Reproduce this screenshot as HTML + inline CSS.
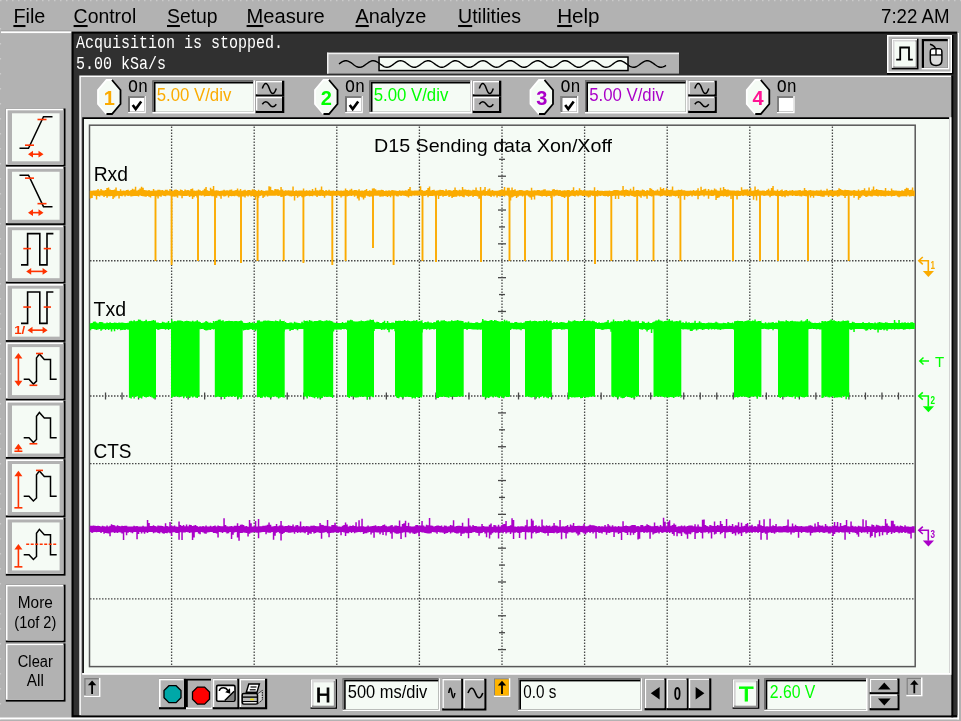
<!DOCTYPE html>
<html><head><meta charset="utf-8"><title>Oscilloscope</title>
<style>html,body{margin:0;padding:0;background:#b2b2b2;overflow:hidden}svg text{white-space:pre}svg{filter:blur(0.35px)}</style></head>
<body><svg width="961" height="721" viewBox="0 0 961 721" style="display:block"><rect x="0.00" y="0.00" width="961.00" height="721.00" fill="#b2b2b2" />
<line x1="0" y1="0.6" x2="961" y2="0.6" stroke="#cacaca" stroke-width="1.2" stroke-dasharray="1.5 4.5"/>
<rect x="1.00" y="30.10" width="70.50" height="1.30" fill="#a2a2a2" />
<rect x="1.00" y="31.40" width="70.50" height="1.70" fill="#fff" />
<line x1="0.5" y1="28" x2="0.5" y2="721" stroke="#cacaca" stroke-width="1.2" stroke-dasharray="1.5 13.5"/>
<text x="13.40" y="23.00" font-family="'Liberation Sans',sans-serif" font-size="20.5" fill="#000" text-anchor="start" font-weight="normal" textLength="31.9" lengthAdjust="spacingAndGlyphs" ><tspan text-decoration="underline">F</tspan>ile</text>
<text x="73.60" y="23.00" font-family="'Liberation Sans',sans-serif" font-size="20.5" fill="#000" text-anchor="start" font-weight="normal" textLength="62.6" lengthAdjust="spacingAndGlyphs" ><tspan text-decoration="underline">C</tspan>ontrol</text>
<text x="167.00" y="23.00" font-family="'Liberation Sans',sans-serif" font-size="20.5" fill="#000" text-anchor="start" font-weight="normal" textLength="50.6" lengthAdjust="spacingAndGlyphs" ><tspan text-decoration="underline">S</tspan>etup</text>
<text x="246.60" y="23.00" font-family="'Liberation Sans',sans-serif" font-size="20.5" fill="#000" text-anchor="start" font-weight="normal" textLength="78.2" lengthAdjust="spacingAndGlyphs" ><tspan text-decoration="underline">M</tspan>easure</text>
<text x="355.50" y="23.00" font-family="'Liberation Sans',sans-serif" font-size="20.5" fill="#000" text-anchor="start" font-weight="normal" textLength="70.8" lengthAdjust="spacingAndGlyphs" ><tspan text-decoration="underline">A</tspan>nalyze</text>
<text x="458.10" y="23.00" font-family="'Liberation Sans',sans-serif" font-size="20.5" fill="#000" text-anchor="start" font-weight="normal" textLength="62.9" lengthAdjust="spacingAndGlyphs" ><tspan text-decoration="underline">U</tspan>tilities</text>
<text x="557.20" y="23.00" font-family="'Liberation Sans',sans-serif" font-size="20.5" fill="#000" text-anchor="start" font-weight="normal" textLength="42.4" lengthAdjust="spacingAndGlyphs" ><tspan text-decoration="underline">H</tspan>elp</text>
<text x="881.00" y="23.00" font-family="'Liberation Sans',sans-serif" font-size="20.5" fill="#000" text-anchor="start" font-weight="normal" textLength="68.5" lengthAdjust="spacingAndGlyphs" >7:22 AM</text>
<rect x="0.00" y="717.50" width="959.00" height="1.90" fill="#fff" />
<rect x="957.30" y="33.00" width="1.70" height="686.40" fill="#fff" />
<rect x="71.50" y="31.60" width="885.80" height="685.70" fill="#000" />
<rect x="73.60" y="33.60" width="883.70" height="681.60" fill="#303030" />
<text x="76.00" y="48.00" font-family="'Liberation Mono',monospace" font-size="15" fill="#fff" text-anchor="start" font-weight="normal" textLength="207.0" lengthAdjust="spacingAndGlyphs" transform="translate(0,48) scale(1,1.22) translate(0,-48)">Acquisition is stopped.</text>
<text x="76.00" y="68.80" font-family="'Liberation Mono',monospace" font-size="15" fill="#fff" text-anchor="start" font-weight="normal" textLength="90.0" lengthAdjust="spacingAndGlyphs" transform="translate(0,68.8) scale(1,1.22) translate(0,-68.8)">5.00 kSa/s</text>
<rect x="327.00" y="52.70" width="352.00" height="20.90" fill="#b2b2b2" />
<rect x="327.00" y="52.70" width="352.00" height="1.50" fill="#f0f0f0" />
<rect x="327.00" y="52.70" width="1.50" height="20.90" fill="#f0f0f0" />
<rect x="378.30" y="56.30" width="250.45" height="15.00" fill="#000" />
<rect x="379.80" y="57.80" width="247.45" height="12.00" fill="#f5fbf5" />
<polyline points="339.0,64.0 340.5,62.9 342.0,61.9 343.5,61.2 345.0,60.8 346.5,60.7 348.0,61.1 349.5,61.8 351.0,62.7 352.5,63.8 354.0,65.0 355.5,66.0 357.0,66.8 358.5,67.2 360.0,67.3 361.5,67.0 363.0,66.3 364.5,65.4 366.0,64.3 367.5,63.2 369.0,62.1 370.5,61.3 372.0,60.8 373.5,60.7 375.0,61.0 376.5,61.6 378.0,62.5 379.5,63.5 381.0,64.7 382.5,65.7 384.0,66.6 385.5,67.1 387.0,67.3 388.5,67.1 390.0,66.5 391.5,65.7 393.0,64.6 394.5,63.5 396.0,62.4 397.5,61.5 399.0,60.9 400.5,60.7 402.0,60.9 403.5,61.4 405.0,62.2 406.5,63.2 408.0,64.4 409.5,65.5 411.0,66.4 412.5,67.0 414.0,67.3 415.5,67.2 417.0,66.7 418.5,65.9 420.0,64.9 421.5,63.8 423.0,62.7 424.5,61.7 426.0,61.1 427.5,60.7 429.0,60.8 430.5,61.2 432.0,62.0 433.5,63.0 435.0,64.1 436.5,65.2 438.0,66.2 439.5,66.9 441.0,67.3 442.5,67.3 444.0,66.9 445.5,66.2 447.0,65.2 448.5,64.1 450.0,63.0 451.5,62.0 453.0,61.2 454.5,60.8 456.0,60.7 457.5,61.1 459.0,61.7 460.5,62.7 462.0,63.8 463.5,64.9 465.0,65.9 466.5,66.7 468.0,67.2 469.5,67.3 471.0,67.0 472.5,66.4 474.0,65.5 475.5,64.4 477.0,63.2 478.5,62.2 480.0,61.4 481.5,60.9 483.0,60.7 484.5,60.9 486.0,61.5 487.5,62.4 489.0,63.5 490.5,64.6 492.0,65.7 493.5,66.5 495.0,67.1 496.5,67.3 498.0,67.1 499.5,66.6 501.0,65.7 502.5,64.7 504.0,63.5 505.5,62.5 507.0,61.6 508.5,61.0 510.0,60.7 511.5,60.8 513.0,61.3 514.5,62.1 516.0,63.2 517.5,64.3 519.0,65.4 520.5,66.3 522.0,67.0 523.5,67.3 525.0,67.2 526.5,66.8 528.0,66.0 529.5,65.0 531.0,63.8 532.5,62.7 534.0,61.8 535.5,61.1 537.0,60.7 538.5,60.8 540.0,61.2 541.5,61.9 543.0,62.9 544.5,64.0 546.0,65.1 547.5,66.1 549.0,66.8 550.5,67.2 552.0,67.3 553.5,66.9 555.0,66.2 556.5,65.3 558.0,64.2 559.5,63.0 561.0,62.0 562.5,61.2 564.0,60.8 565.5,60.7 567.0,61.0 568.5,61.7 570.0,62.6 571.5,63.7 573.0,64.8 574.5,65.9 576.0,66.7 577.5,67.2 579.0,67.3 580.5,67.0 582.0,66.4 583.5,65.5 585.0,64.5 586.5,63.3 588.0,62.3 589.5,61.4 591.0,60.9 592.5,60.7 594.0,60.9 595.5,61.5 597.0,62.3 598.5,63.4 600.0,64.5 601.5,65.6 603.0,66.5 604.5,67.1 606.0,67.3 607.5,67.1 609.0,66.6 610.5,65.8 612.0,64.8 613.5,63.6 615.0,62.5 616.5,61.6 618.0,61.0 619.5,60.7 621.0,60.8 622.5,61.3 624.0,62.1 625.5,63.1 627.0,64.2 628.5,65.3 630.0,66.3 631.5,66.9 633.0,67.3 634.5,67.2 636.0,66.8 637.5,66.0 639.0,65.0 640.5,63.9 642.0,62.8 643.5,61.8 645.0,61.1 646.5,60.7 648.0,60.7 649.5,61.1 651.0,61.8 652.5,62.8 654.0,63.9 655.5,65.0 657.0,66.0 658.5,66.8 660.0,67.2 661.5,67.3 663.0,66.9 664.5,66.3 666.0,65.3" fill="none" stroke="#000" stroke-width="1.4"/>
<rect x="887.00" y="35.00" width="66.50" height="39.50" fill="#000" />
<rect x="887.00" y="35.00" width="65.00" height="38.00" fill="#fff" />
<rect x="888.50" y="36.50" width="62.00" height="35.00" fill="#b2b2b2" />
<rect x="891.70" y="38.70" width="26.80" height="30.70" fill="#000" />
<rect x="891.70" y="38.70" width="25.30" height="29.20" fill="#fff" />
<rect x="893.20" y="40.20" width="23.80" height="27.70" fill="#808080" />
<rect x="893.20" y="40.20" width="22.30" height="26.20" fill="#e4e4e4" />
<rect x="894.80" y="41.80" width="20.70" height="24.60" fill="#f5fbf5" />
<path d="M896.2,59.6 H900.2 V47.5 H909 V59.6 H912.8" stroke="#000" stroke-width="1.8" fill="none" />
<rect x="921.70" y="39.00" width="27.60" height="30.40" fill="#fff" />
<rect x="921.70" y="39.00" width="26.10" height="28.90" fill="#000" />
<rect x="924.00" y="41.20" width="23.80" height="26.70" fill="#b2b2b2" />
<path d="M930.3,52 q0,-3.2 3,-3.2 h5.6 q3,0 3,3.2 v8 q0,5.5 -5.8,5.5 q-5.8,0 -5.8,-5.5 z" stroke="#000" stroke-width="1.5" fill="#dcdcdc" />
<rect x="931.30" y="49.80" width="4.00" height="4.70" fill="#fff" />
<rect x="936.70" y="49.80" width="4.20" height="4.70" fill="#fff" />
<line x1="930.30" y1="55.00" x2="941.90" y2="55.00" stroke="#000" stroke-width="1.3" />
<line x1="936.00" y1="49.00" x2="936.00" y2="55.00" stroke="#000" stroke-width="1.3" />
<path d="M935.5,48.8 q-1,-3.5 -5.5,-4.6" stroke="#000" stroke-width="1.5" fill="none" />
<rect x="79.30" y="75.50" width="872.10" height="639.70" fill="#fff" />
<rect x="80.80" y="77.00" width="870.60" height="638.20" fill="#b2b2b2" />
<rect x="951.40" y="75.50" width="1.90" height="641.80" fill="#000" />
<path d="M106.5,80 L112.0,80 L120.5,90.0 L120.5,104.0 L112.0,114 L106.5,114 L98,104.0 L98,90.0 Z" stroke="none" stroke-width="0" fill="#f5fbf5" />
<path d="M106.5,114 L98,104.0 L98,90.0 L106.5,80 L112.0,80" stroke="#fff" stroke-width="1.8" fill="none" />
<path d="M112.0,80 L120.5,90.0 L120.5,104.0 L112.0,114 L106.5,114" stroke="#000" stroke-width="1.8" fill="none" />
<text x="109.25" y="105.00" font-family="'Liberation Sans',sans-serif" font-size="20" fill="#fbab00" text-anchor="middle" font-weight="bold" >1</text>
<text x="128.00" y="92.50" font-family="'Liberation Mono',monospace" font-size="14" fill="#000" text-anchor="start" font-weight="normal" textLength="20.0" lengthAdjust="spacingAndGlyphs" transform="translate(0,92.5) scale(1,1.25) translate(0,-92.5)">On</text>
<rect x="128.20" y="96.00" width="17.60" height="17.20" fill="#fff" />
<rect x="128.20" y="96.00" width="16.10" height="15.70" fill="#000" />
<rect x="129.70" y="97.50" width="14.60" height="14.20" fill="#fff" />
<rect x="128.20" y="96.00" width="16.10" height="1.50" fill="#808080" />
<rect x="128.20" y="96.00" width="1.50" height="15.70" fill="#808080" />
<path d="M132.7,105 L135.7,109 L141.2,101.5" stroke="#000" stroke-width="2.6" fill="none" />
<rect x="152.50" y="80.50" width="102.50" height="33.00" fill="#fff" />
<rect x="152.50" y="80.50" width="100.70" height="31.30" fill="#000" />
<rect x="155.50" y="83.50" width="97.70" height="28.30" fill="#f5fbf5" />
<rect x="152.50" y="80.50" width="100.70" height="1.50" fill="#707070" />
<rect x="152.50" y="80.50" width="1.50" height="31.30" fill="#707070" />
<text x="156.70" y="100.70" font-family="'Liberation Sans',sans-serif" font-size="17.5" fill="#fbab00" text-anchor="start" font-weight="normal" textLength="74.6" lengthAdjust="spacingAndGlyphs" >5.00 V/div</text>
<rect x="255.70" y="80.70" width="28.60" height="15.90" fill="#000" />
<rect x="255.70" y="80.70" width="26.30" height="13.60" fill="#fff" />
<rect x="257.30" y="82.30" width="24.70" height="12.00" fill="#b2b2b2" />
<rect x="255.70" y="96.60" width="28.60" height="16.40" fill="#000" />
<rect x="255.70" y="96.60" width="26.30" height="14.10" fill="#fff" />
<rect x="257.30" y="98.20" width="24.70" height="12.50" fill="#b2b2b2" />
<path d="M262.3,88.5 q3.5,-10 7,0 q3.5,10 7,0" stroke="#000" stroke-width="1.5" fill="none" />
<path d="M262.3,104.3 q3.5,-5 7,0 q3.5,5 7,0" stroke="#000" stroke-width="1.5" fill="none" />
<path d="M323.5,80 L329.0,80 L337.5,90.0 L337.5,104.0 L329.0,114 L323.5,114 L315,104.0 L315,90.0 Z" stroke="none" stroke-width="0" fill="#f5fbf5" />
<path d="M323.5,114 L315,104.0 L315,90.0 L323.5,80 L329.0,80" stroke="#fff" stroke-width="1.8" fill="none" />
<path d="M329.0,80 L337.5,90.0 L337.5,104.0 L329.0,114 L323.5,114" stroke="#000" stroke-width="1.8" fill="none" />
<text x="326.25" y="105.00" font-family="'Liberation Sans',sans-serif" font-size="20" fill="#00ff00" text-anchor="middle" font-weight="bold" >2</text>
<text x="345.00" y="92.50" font-family="'Liberation Mono',monospace" font-size="14" fill="#000" text-anchor="start" font-weight="normal" textLength="20.0" lengthAdjust="spacingAndGlyphs" transform="translate(0,92.5) scale(1,1.25) translate(0,-92.5)">On</text>
<rect x="345.20" y="96.00" width="17.60" height="17.20" fill="#fff" />
<rect x="345.20" y="96.00" width="16.10" height="15.70" fill="#000" />
<rect x="346.70" y="97.50" width="14.60" height="14.20" fill="#fff" />
<rect x="345.20" y="96.00" width="16.10" height="1.50" fill="#808080" />
<rect x="345.20" y="96.00" width="1.50" height="15.70" fill="#808080" />
<path d="M349.7,105 L352.7,109 L358.2,101.5" stroke="#000" stroke-width="2.6" fill="none" />
<rect x="369.50" y="80.50" width="102.50" height="33.00" fill="#fff" />
<rect x="369.50" y="80.50" width="100.70" height="31.30" fill="#000" />
<rect x="372.50" y="83.50" width="97.70" height="28.30" fill="#f5fbf5" />
<rect x="369.50" y="80.50" width="100.70" height="1.50" fill="#707070" />
<rect x="369.50" y="80.50" width="1.50" height="31.30" fill="#707070" />
<text x="373.70" y="100.70" font-family="'Liberation Sans',sans-serif" font-size="17.5" fill="#00ff00" text-anchor="start" font-weight="normal" textLength="74.6" lengthAdjust="spacingAndGlyphs" >5.00 V/div</text>
<rect x="472.70" y="80.70" width="28.60" height="15.90" fill="#000" />
<rect x="472.70" y="80.70" width="26.30" height="13.60" fill="#fff" />
<rect x="474.30" y="82.30" width="24.70" height="12.00" fill="#b2b2b2" />
<rect x="472.70" y="96.60" width="28.60" height="16.40" fill="#000" />
<rect x="472.70" y="96.60" width="26.30" height="14.10" fill="#fff" />
<rect x="474.30" y="98.20" width="24.70" height="12.50" fill="#b2b2b2" />
<path d="M479.3,88.5 q3.5,-10 7,0 q3.5,10 7,0" stroke="#000" stroke-width="1.5" fill="none" />
<path d="M479.3,104.3 q3.5,-5 7,0 q3.5,5 7,0" stroke="#000" stroke-width="1.5" fill="none" />
<path d="M539.0,80 L544.5,80 L553.0,90.0 L553.0,104.0 L544.5,114 L539.0,114 L530.5,104.0 L530.5,90.0 Z" stroke="none" stroke-width="0" fill="#f5fbf5" />
<path d="M539.0,114 L530.5,104.0 L530.5,90.0 L539.0,80 L544.5,80" stroke="#fff" stroke-width="1.8" fill="none" />
<path d="M544.5,80 L553.0,90.0 L553.0,104.0 L544.5,114 L539.0,114" stroke="#000" stroke-width="1.8" fill="none" />
<text x="541.75" y="105.00" font-family="'Liberation Sans',sans-serif" font-size="20" fill="#aa00c8" text-anchor="middle" font-weight="bold" >3</text>
<text x="560.50" y="92.50" font-family="'Liberation Mono',monospace" font-size="14" fill="#000" text-anchor="start" font-weight="normal" textLength="20.0" lengthAdjust="spacingAndGlyphs" transform="translate(0,92.5) scale(1,1.25) translate(0,-92.5)">On</text>
<rect x="560.70" y="96.00" width="17.60" height="17.20" fill="#fff" />
<rect x="560.70" y="96.00" width="16.10" height="15.70" fill="#000" />
<rect x="562.20" y="97.50" width="14.60" height="14.20" fill="#fff" />
<rect x="560.70" y="96.00" width="16.10" height="1.50" fill="#808080" />
<rect x="560.70" y="96.00" width="1.50" height="15.70" fill="#808080" />
<path d="M565.2,105 L568.2,109 L573.7,101.5" stroke="#000" stroke-width="2.6" fill="none" />
<rect x="585.00" y="80.50" width="102.50" height="33.00" fill="#fff" />
<rect x="585.00" y="80.50" width="100.70" height="31.30" fill="#000" />
<rect x="588.00" y="83.50" width="97.70" height="28.30" fill="#f5fbf5" />
<rect x="585.00" y="80.50" width="100.70" height="1.50" fill="#707070" />
<rect x="585.00" y="80.50" width="1.50" height="31.30" fill="#707070" />
<text x="589.20" y="100.70" font-family="'Liberation Sans',sans-serif" font-size="17.5" fill="#aa00c8" text-anchor="start" font-weight="normal" textLength="74.6" lengthAdjust="spacingAndGlyphs" >5.00 V/div</text>
<rect x="688.20" y="80.70" width="28.60" height="15.90" fill="#000" />
<rect x="688.20" y="80.70" width="26.30" height="13.60" fill="#fff" />
<rect x="689.80" y="82.30" width="24.70" height="12.00" fill="#b2b2b2" />
<rect x="688.20" y="96.60" width="28.60" height="16.40" fill="#000" />
<rect x="688.20" y="96.60" width="26.30" height="14.10" fill="#fff" />
<rect x="689.80" y="98.20" width="24.70" height="12.50" fill="#b2b2b2" />
<path d="M694.8,88.5 q3.5,-10 7,0 q3.5,10 7,0" stroke="#000" stroke-width="1.5" fill="none" />
<path d="M694.8,104.3 q3.5,-5 7,0 q3.5,5 7,0" stroke="#000" stroke-width="1.5" fill="none" />
<path d="M755.3,80 L760.8,80 L769.3,90.0 L769.3,104.0 L760.8,114 L755.3,114 L746.8,104.0 L746.8,90.0 Z" stroke="none" stroke-width="0" fill="#f5fbf5" />
<path d="M755.3,114 L746.8,104.0 L746.8,90.0 L755.3,80 L760.8,80" stroke="#fff" stroke-width="1.8" fill="none" />
<path d="M760.8,80 L769.3,90.0 L769.3,104.0 L760.8,114 L755.3,114" stroke="#000" stroke-width="1.8" fill="none" />
<text x="758.05" y="105.00" font-family="'Liberation Sans',sans-serif" font-size="20" fill="#ff1493" text-anchor="middle" font-weight="bold" >4</text>
<text x="776.80" y="92.50" font-family="'Liberation Mono',monospace" font-size="14" fill="#000" text-anchor="start" font-weight="normal" textLength="20.0" lengthAdjust="spacingAndGlyphs" transform="translate(0,92.5) scale(1,1.25) translate(0,-92.5)">On</text>
<rect x="777.00" y="96.00" width="17.60" height="17.20" fill="#fff" />
<rect x="777.00" y="96.00" width="16.10" height="15.70" fill="#000" />
<rect x="778.50" y="97.50" width="14.60" height="14.20" fill="#fff" />
<rect x="777.00" y="96.00" width="16.10" height="1.50" fill="#808080" />
<rect x="777.00" y="96.00" width="1.50" height="15.70" fill="#808080" />
<rect x="82.20" y="117.20" width="869.20" height="557.60" fill="#fff" />
<rect x="82.20" y="117.20" width="867.00" height="555.80" fill="#000" />
<rect x="83.90" y="119.00" width="865.30" height="554.00" fill="#f5fbf5" />
<rect x="89.5" y="125.2" width="825.70" height="541.40" fill="none" stroke="#585858" stroke-width="1.5"/>
<line x1="171.60" y1="126.50" x2="171.60" y2="665.50" stroke="#484848" stroke-width="1.3" stroke-dasharray="1.5 1.5"/>
<line x1="254.20" y1="126.50" x2="254.20" y2="665.50" stroke="#484848" stroke-width="1.3" stroke-dasharray="1.5 1.5"/>
<line x1="336.80" y1="126.50" x2="336.80" y2="665.50" stroke="#484848" stroke-width="1.3" stroke-dasharray="1.5 1.5"/>
<line x1="419.40" y1="126.50" x2="419.40" y2="665.50" stroke="#484848" stroke-width="1.3" stroke-dasharray="1.5 1.5"/>
<line x1="502.00" y1="126.50" x2="502.00" y2="665.50" stroke="#484848" stroke-width="1.3" stroke-dasharray="1.5 1.5"/>
<line x1="584.60" y1="126.50" x2="584.60" y2="665.50" stroke="#484848" stroke-width="1.3" stroke-dasharray="1.5 1.5"/>
<line x1="667.20" y1="126.50" x2="667.20" y2="665.50" stroke="#484848" stroke-width="1.3" stroke-dasharray="1.5 1.5"/>
<line x1="749.80" y1="126.50" x2="749.80" y2="665.50" stroke="#484848" stroke-width="1.3" stroke-dasharray="1.5 1.5"/>
<line x1="832.40" y1="126.50" x2="832.40" y2="665.50" stroke="#484848" stroke-width="1.3" stroke-dasharray="1.5 1.5"/>
<line x1="90.00" y1="193.12" x2="914.00" y2="193.12" stroke="#484848" stroke-width="1.3" stroke-dasharray="1.5 1.5"/>
<line x1="90.00" y1="260.75" x2="914.00" y2="260.75" stroke="#484848" stroke-width="1.3" stroke-dasharray="1.5 1.5"/>
<line x1="90.00" y1="328.38" x2="914.00" y2="328.38" stroke="#484848" stroke-width="1.3" stroke-dasharray="1.5 1.5"/>
<line x1="90.00" y1="396.00" x2="914.00" y2="396.00" stroke="#484848" stroke-width="1.3" stroke-dasharray="1.5 1.5"/>
<line x1="90.00" y1="463.62" x2="914.00" y2="463.62" stroke="#484848" stroke-width="1.3" stroke-dasharray="1.5 1.5"/>
<line x1="90.00" y1="531.25" x2="914.00" y2="531.25" stroke="#484848" stroke-width="1.3" stroke-dasharray="1.5 1.5"/>
<line x1="90.00" y1="598.88" x2="914.00" y2="598.88" stroke="#484848" stroke-width="1.3" stroke-dasharray="1.5 1.5"/>
<line x1="498.00" y1="142.41" x2="506.00" y2="142.41" stroke="#484848" stroke-width="1.3" />
<line x1="499.00" y1="159.31" x2="505.00" y2="159.31" stroke="#484848" stroke-width="1.3" />
<line x1="498.00" y1="176.22" x2="506.00" y2="176.22" stroke="#484848" stroke-width="1.3" />
<line x1="498.00" y1="210.03" x2="506.00" y2="210.03" stroke="#484848" stroke-width="1.3" />
<line x1="499.00" y1="226.94" x2="505.00" y2="226.94" stroke="#484848" stroke-width="1.3" />
<line x1="498.00" y1="243.84" x2="506.00" y2="243.84" stroke="#484848" stroke-width="1.3" />
<line x1="498.00" y1="277.66" x2="506.00" y2="277.66" stroke="#484848" stroke-width="1.3" />
<line x1="499.00" y1="294.56" x2="505.00" y2="294.56" stroke="#484848" stroke-width="1.3" />
<line x1="498.00" y1="311.47" x2="506.00" y2="311.47" stroke="#484848" stroke-width="1.3" />
<line x1="498.00" y1="345.28" x2="506.00" y2="345.28" stroke="#484848" stroke-width="1.3" />
<line x1="499.00" y1="362.19" x2="505.00" y2="362.19" stroke="#484848" stroke-width="1.3" />
<line x1="498.00" y1="379.09" x2="506.00" y2="379.09" stroke="#484848" stroke-width="1.3" />
<line x1="498.00" y1="412.91" x2="506.00" y2="412.91" stroke="#484848" stroke-width="1.3" />
<line x1="499.00" y1="429.81" x2="505.00" y2="429.81" stroke="#484848" stroke-width="1.3" />
<line x1="498.00" y1="446.72" x2="506.00" y2="446.72" stroke="#484848" stroke-width="1.3" />
<line x1="498.00" y1="480.53" x2="506.00" y2="480.53" stroke="#484848" stroke-width="1.3" />
<line x1="499.00" y1="497.44" x2="505.00" y2="497.44" stroke="#484848" stroke-width="1.3" />
<line x1="498.00" y1="514.34" x2="506.00" y2="514.34" stroke="#484848" stroke-width="1.3" />
<line x1="498.00" y1="548.16" x2="506.00" y2="548.16" stroke="#484848" stroke-width="1.3" />
<line x1="499.00" y1="565.06" x2="505.00" y2="565.06" stroke="#484848" stroke-width="1.3" />
<line x1="498.00" y1="581.97" x2="506.00" y2="581.97" stroke="#484848" stroke-width="1.3" />
<line x1="498.00" y1="615.78" x2="506.00" y2="615.78" stroke="#484848" stroke-width="1.3" />
<line x1="499.00" y1="632.69" x2="505.00" y2="632.69" stroke="#484848" stroke-width="1.3" />
<line x1="498.00" y1="649.59" x2="506.00" y2="649.59" stroke="#484848" stroke-width="1.3" />
<line x1="105.52" y1="392.50" x2="105.52" y2="399.50" stroke="#484848" stroke-width="1.3" />
<line x1="122.04" y1="392.50" x2="122.04" y2="399.50" stroke="#484848" stroke-width="1.3" />
<line x1="138.56" y1="392.50" x2="138.56" y2="399.50" stroke="#484848" stroke-width="1.3" />
<line x1="155.08" y1="392.50" x2="155.08" y2="399.50" stroke="#484848" stroke-width="1.3" />
<line x1="188.12" y1="392.50" x2="188.12" y2="399.50" stroke="#484848" stroke-width="1.3" />
<line x1="204.64" y1="392.50" x2="204.64" y2="399.50" stroke="#484848" stroke-width="1.3" />
<line x1="221.16" y1="392.50" x2="221.16" y2="399.50" stroke="#484848" stroke-width="1.3" />
<line x1="237.68" y1="392.50" x2="237.68" y2="399.50" stroke="#484848" stroke-width="1.3" />
<line x1="270.72" y1="392.50" x2="270.72" y2="399.50" stroke="#484848" stroke-width="1.3" />
<line x1="287.24" y1="392.50" x2="287.24" y2="399.50" stroke="#484848" stroke-width="1.3" />
<line x1="303.76" y1="392.50" x2="303.76" y2="399.50" stroke="#484848" stroke-width="1.3" />
<line x1="320.28" y1="392.50" x2="320.28" y2="399.50" stroke="#484848" stroke-width="1.3" />
<line x1="353.32" y1="392.50" x2="353.32" y2="399.50" stroke="#484848" stroke-width="1.3" />
<line x1="369.84" y1="392.50" x2="369.84" y2="399.50" stroke="#484848" stroke-width="1.3" />
<line x1="386.36" y1="392.50" x2="386.36" y2="399.50" stroke="#484848" stroke-width="1.3" />
<line x1="402.88" y1="392.50" x2="402.88" y2="399.50" stroke="#484848" stroke-width="1.3" />
<line x1="435.92" y1="392.50" x2="435.92" y2="399.50" stroke="#484848" stroke-width="1.3" />
<line x1="452.44" y1="392.50" x2="452.44" y2="399.50" stroke="#484848" stroke-width="1.3" />
<line x1="468.96" y1="392.50" x2="468.96" y2="399.50" stroke="#484848" stroke-width="1.3" />
<line x1="485.48" y1="392.50" x2="485.48" y2="399.50" stroke="#484848" stroke-width="1.3" />
<line x1="518.52" y1="392.50" x2="518.52" y2="399.50" stroke="#484848" stroke-width="1.3" />
<line x1="535.04" y1="392.50" x2="535.04" y2="399.50" stroke="#484848" stroke-width="1.3" />
<line x1="551.56" y1="392.50" x2="551.56" y2="399.50" stroke="#484848" stroke-width="1.3" />
<line x1="568.08" y1="392.50" x2="568.08" y2="399.50" stroke="#484848" stroke-width="1.3" />
<line x1="601.12" y1="392.50" x2="601.12" y2="399.50" stroke="#484848" stroke-width="1.3" />
<line x1="617.64" y1="392.50" x2="617.64" y2="399.50" stroke="#484848" stroke-width="1.3" />
<line x1="634.16" y1="392.50" x2="634.16" y2="399.50" stroke="#484848" stroke-width="1.3" />
<line x1="650.68" y1="392.50" x2="650.68" y2="399.50" stroke="#484848" stroke-width="1.3" />
<line x1="683.72" y1="392.50" x2="683.72" y2="399.50" stroke="#484848" stroke-width="1.3" />
<line x1="700.24" y1="392.50" x2="700.24" y2="399.50" stroke="#484848" stroke-width="1.3" />
<line x1="716.76" y1="392.50" x2="716.76" y2="399.50" stroke="#484848" stroke-width="1.3" />
<line x1="733.28" y1="392.50" x2="733.28" y2="399.50" stroke="#484848" stroke-width="1.3" />
<line x1="766.32" y1="392.50" x2="766.32" y2="399.50" stroke="#484848" stroke-width="1.3" />
<line x1="782.84" y1="392.50" x2="782.84" y2="399.50" stroke="#484848" stroke-width="1.3" />
<line x1="799.36" y1="392.50" x2="799.36" y2="399.50" stroke="#484848" stroke-width="1.3" />
<line x1="815.88" y1="392.50" x2="815.88" y2="399.50" stroke="#484848" stroke-width="1.3" />
<line x1="848.92" y1="392.50" x2="848.92" y2="399.50" stroke="#484848" stroke-width="1.3" />
<line x1="865.44" y1="392.50" x2="865.44" y2="399.50" stroke="#484848" stroke-width="1.3" />
<line x1="881.96" y1="392.50" x2="881.96" y2="399.50" stroke="#484848" stroke-width="1.3" />
<line x1="898.48" y1="392.50" x2="898.48" y2="399.50" stroke="#484848" stroke-width="1.3" />
<text x="93.70" y="181.40" font-family="'Liberation Sans',sans-serif" font-size="19.5" fill="#000" text-anchor="start" font-weight="normal" textLength="34.3" lengthAdjust="spacingAndGlyphs" >Rxd</text>
<text x="93.50" y="316.20" font-family="'Liberation Sans',sans-serif" font-size="19.5" fill="#000" text-anchor="start" font-weight="normal" textLength="32.5" lengthAdjust="spacingAndGlyphs" >Txd</text>
<text x="93.50" y="458.00" font-family="'Liberation Sans',sans-serif" font-size="19.5" fill="#000" text-anchor="start" font-weight="normal" textLength="38.0" lengthAdjust="spacingAndGlyphs" >CTS</text>
<text x="374.00" y="151.50" font-family="'Liberation Sans',sans-serif" font-size="18.5" fill="#000" text-anchor="start" font-weight="normal" textLength="238.0" lengthAdjust="spacingAndGlyphs" >D15 Sending data Xon/Xoff</text>
<path d="M89.8,190.7 91.3,190.7 91.3,190.7 92.8,190.7 92.8,190.6 94.3,190.6 94.3,190.5 95.8,190.5 95.8,190.2 97.3,190.2 97.3,188.9 98.8,188.9 98.8,190.5 100.3,190.5 100.3,189.0 101.8,189.0 101.8,190.3 103.3,190.3 103.3,190.5 104.8,190.5 104.8,190.0 106.3,190.0 106.3,188.1 107.8,188.1 107.8,187.4 109.3,187.4 109.3,189.4 110.8,189.4 110.8,190.0 112.3,190.0 112.3,190.0 113.8,190.0 113.8,189.4 115.3,189.4 115.3,187.6 116.8,187.6 116.8,190.7 118.3,190.7 118.3,190.9 119.8,190.9 119.8,189.3 121.3,189.3 121.3,190.8 122.8,190.8 122.8,190.5 124.3,190.5 124.3,190.8 125.8,190.8 125.8,190.1 127.3,190.1 127.3,189.7 128.8,189.7 128.8,190.8 130.3,190.8 130.3,189.9 131.8,189.9 131.8,188.8 133.3,188.8 133.3,189.5 134.8,189.5 134.8,186.7 136.3,186.7 136.3,190.5 137.8,190.5 137.8,189.8 139.3,189.8 139.3,188.5 140.8,188.5 140.8,186.8 142.3,186.8 142.3,187.7 143.8,187.7 143.8,190.1 145.3,190.1 145.3,190.2 146.8,190.2 146.8,190.6 148.3,190.6 148.3,190.0 149.8,190.0 149.8,190.8 151.3,190.8 151.3,190.8 152.8,190.8 152.8,189.1 154.3,189.1 154.3,190.5 155.8,190.5 155.8,190.6 157.3,190.6 157.3,189.7 158.8,189.7 158.8,189.7 160.3,189.7 160.3,190.3 161.8,190.3 161.8,190.1 163.3,190.1 163.3,190.8 164.8,190.8 164.8,189.7 166.3,189.7 166.3,189.7 167.8,189.7 167.8,190.8 169.3,190.8 169.3,189.1 170.8,189.1 170.8,190.6 172.3,190.6 172.3,190.8 173.8,190.8 173.8,189.7 175.3,189.7 175.3,189.4 176.8,189.4 176.8,189.9 178.3,189.9 178.3,190.9 179.8,190.9 179.8,189.6 181.3,189.6 181.3,189.9 182.8,189.9 182.8,190.9 184.3,190.9 184.3,189.6 185.8,189.6 185.8,190.2 187.3,190.2 187.3,190.0 188.8,190.0 188.8,190.4 190.3,190.4 190.3,189.1 191.8,189.1 191.8,188.6 193.3,188.6 193.3,190.5 194.8,190.5 194.8,190.7 196.3,190.7 196.3,190.5 197.8,190.5 197.8,189.4 199.3,189.4 199.3,190.2 200.8,190.2 200.8,190.9 202.3,190.9 202.3,190.2 203.8,190.2 203.8,188.8 205.3,188.8 205.3,187.1 206.8,187.1 206.8,190.3 208.3,190.3 208.3,190.9 209.8,190.9 209.8,187.7 211.3,187.7 211.3,189.2 212.8,189.2 212.8,185.9 214.3,185.9 214.3,190.4 215.8,190.4 215.8,190.2 217.3,190.2 217.3,190.4 218.8,190.4 218.8,190.9 220.3,190.9 220.3,190.8 221.8,190.8 221.8,190.4 223.3,190.4 223.3,189.7 224.8,189.7 224.8,190.5 226.3,190.5 226.3,190.2 227.8,190.2 227.8,190.4 229.3,190.4 229.3,189.7 230.8,189.7 230.8,189.6 232.3,189.6 232.3,190.8 233.8,190.8 233.8,190.4 235.3,190.4 235.3,189.9 236.8,189.9 236.8,188.5 238.3,188.5 238.3,190.4 239.8,190.4 239.8,189.1 241.3,189.1 241.3,190.8 242.8,190.8 242.8,190.2 244.3,190.2 244.3,189.8 245.8,189.8 245.8,190.8 247.3,190.8 247.3,190.0 248.8,190.0 248.8,190.0 250.3,190.0 250.3,190.4 251.8,190.4 251.8,189.3 253.3,189.3 253.3,189.7 254.8,189.7 254.8,190.1 256.3,190.1 256.3,190.9 257.8,190.9 257.8,189.7 259.3,189.7 259.3,190.8 260.8,190.8 260.8,190.1 262.3,190.1 262.3,190.8 263.8,190.8 263.8,190.9 265.3,190.9 265.3,190.6 266.8,190.6 266.8,190.5 268.3,190.5 268.3,186.3 269.8,186.3 269.8,186.7 271.3,186.7 271.3,190.0 272.8,190.0 272.8,190.4 274.3,190.4 274.3,188.9 275.8,188.9 275.8,189.2 277.3,189.2 277.3,189.2 278.8,189.2 278.8,190.3 280.3,190.3 280.3,187.0 281.8,187.0 281.8,189.6 283.3,189.6 283.3,190.7 284.8,190.7 284.8,190.3 286.3,190.3 286.3,190.5 287.8,190.5 287.8,190.3 289.3,190.3 289.3,190.6 290.8,190.6 290.8,190.5 292.3,190.5 292.3,186.5 293.8,186.5 293.8,190.9 295.3,190.9 295.3,190.3 296.8,190.3 296.8,190.7 298.3,190.7 298.3,190.6 299.8,190.6 299.8,190.6 301.3,190.6 301.3,190.6 302.8,190.6 302.8,188.5 304.3,188.5 304.3,190.8 305.8,190.8 305.8,190.2 307.3,190.2 307.3,190.7 308.8,190.7 308.8,190.2 310.3,190.2 310.3,190.8 311.8,190.8 311.8,189.0 313.3,189.0 313.3,190.7 314.8,190.7 314.8,187.7 316.3,187.7 316.3,190.2 317.8,190.2 317.8,190.5 319.3,190.5 319.3,189.7 320.8,189.7 320.8,186.6 322.3,186.6 322.3,189.9 323.8,189.9 323.8,190.9 325.3,190.9 325.3,189.9 326.8,189.9 326.8,190.8 328.3,190.8 328.3,189.8 329.8,189.8 329.8,190.8 331.3,190.8 331.3,190.8 332.8,190.8 332.8,190.4 334.3,190.4 334.3,190.9 335.8,190.9 335.8,190.7 337.3,190.7 337.3,190.4 338.8,190.4 338.8,190.7 340.3,190.7 340.3,190.4 341.8,190.4 341.8,190.8 343.3,190.8 343.3,190.4 344.8,190.4 344.8,188.6 346.3,188.6 346.3,189.9 347.8,189.9 347.8,190.7 349.3,190.7 349.3,189.7 350.8,189.7 350.8,188.8 352.3,188.8 352.3,190.5 353.8,190.5 353.8,190.0 355.3,190.0 355.3,190.0 356.8,190.0 356.8,190.6 358.3,190.6 358.3,189.3 359.8,189.3 359.8,190.8 361.3,190.8 361.3,190.6 362.8,190.6 362.8,190.8 364.3,190.8 364.3,189.9 365.8,189.9 365.8,188.9 367.3,188.9 367.3,190.9 368.8,190.9 368.8,190.3 370.3,190.3 370.3,190.7 371.8,190.7 371.8,188.4 373.3,188.4 373.3,188.2 374.8,188.2 374.8,189.3 376.3,189.3 376.3,190.6 377.8,190.6 377.8,190.3 379.3,190.3 379.3,190.3 380.8,190.3 380.8,189.8 382.3,189.8 382.3,190.0 383.8,190.0 383.8,190.9 385.3,190.9 385.3,190.5 386.8,190.5 386.8,190.7 388.3,190.7 388.3,190.2 389.8,190.2 389.8,190.7 391.3,190.7 391.3,189.9 392.8,189.9 392.8,190.3 394.3,190.3 394.3,190.5 395.8,190.5 395.8,190.7 397.3,190.7 397.3,190.9 398.8,190.9 398.8,190.2 400.3,190.2 400.3,190.7 401.8,190.7 401.8,190.6 403.3,190.6 403.3,190.7 404.8,190.7 404.8,190.3 406.3,190.3 406.3,190.5 407.8,190.5 407.8,189.1 409.3,189.1 409.3,187.1 410.8,187.1 410.8,190.6 412.3,190.6 412.3,190.8 413.8,190.8 413.8,190.6 415.3,190.6 415.3,190.5 416.8,190.5 416.8,190.6 418.3,190.6 418.3,190.4 419.8,190.4 419.8,186.2 421.3,186.2 421.3,190.0 422.8,190.0 422.8,190.8 424.3,190.8 424.3,190.7 425.8,190.7 425.8,190.1 427.3,190.1 427.3,187.9 428.8,187.9 428.8,186.6 430.3,186.6 430.3,190.4 431.8,190.4 431.8,189.9 433.3,189.9 433.3,189.8 434.8,189.8 434.8,190.8 436.3,190.8 436.3,190.5 437.8,190.5 437.8,190.2 439.3,190.2 439.3,189.8 440.8,189.8 440.8,190.0 442.3,190.0 442.3,189.9 443.8,189.9 443.8,190.7 445.3,190.7 445.3,189.2 446.8,189.2 446.8,190.6 448.3,190.6 448.3,190.0 449.8,190.0 449.8,190.3 451.3,190.3 451.3,190.8 452.8,190.8 452.8,189.9 454.3,189.9 454.3,187.6 455.8,187.6 455.8,189.9 457.3,189.9 457.3,190.6 458.8,190.6 458.8,189.8 460.3,189.8 460.3,190.2 461.8,190.2 461.8,186.9 463.3,186.9 463.3,189.4 464.8,189.4 464.8,189.4 466.3,189.4 466.3,190.0 467.8,190.0 467.8,189.7 469.3,189.7 469.3,190.3 470.8,190.3 470.8,190.4 472.3,190.4 472.3,189.7 473.8,189.7 473.8,190.0 475.3,190.0 475.3,187.5 476.8,187.5 476.8,190.2 478.3,190.2 478.3,190.8 479.8,190.8 479.8,187.1 481.3,187.1 481.3,190.5 482.8,190.5 482.8,189.8 484.3,189.8 484.3,187.0 485.8,187.0 485.8,190.9 487.3,190.9 487.3,189.6 488.8,189.6 488.8,188.4 490.3,188.4 490.3,190.4 491.8,190.4 491.8,190.1 493.3,190.1 493.3,190.8 494.8,190.8 494.8,190.8 496.3,190.8 496.3,190.8 497.8,190.8 497.8,190.4 499.3,190.4 499.3,190.1 500.8,190.1 500.8,189.4 502.3,189.4 502.3,189.7 503.8,189.7 503.8,186.9 505.3,186.9 505.3,190.5 506.8,190.5 506.8,187.7 508.3,187.7 508.3,187.7 509.8,187.7 509.8,190.3 511.3,190.3 511.3,187.6 512.8,187.6 512.8,190.1 514.3,190.1 514.3,189.2 515.8,189.2 515.8,190.7 517.3,190.7 517.3,190.6 518.8,190.6 518.8,190.0 520.3,190.0 520.3,190.1 521.8,190.1 521.8,190.2 523.3,190.2 523.3,190.7 524.8,190.7 524.8,190.4 526.3,190.4 526.3,190.0 527.8,190.0 527.8,190.5 529.3,190.5 529.3,190.8 530.8,190.8 530.8,187.7 532.3,187.7 532.3,190.4 533.8,190.4 533.8,190.2 535.3,190.2 535.3,190.4 536.8,190.4 536.8,190.1 538.3,190.1 538.3,189.9 539.8,189.9 539.8,190.5 541.3,190.5 541.3,190.2 542.8,190.2 542.8,189.6 544.3,189.6 544.3,189.3 545.8,189.3 545.8,190.5 547.3,190.5 547.3,190.6 548.8,190.6 548.8,190.5 550.3,190.5 550.3,190.9 551.8,190.9 551.8,189.5 553.3,189.5 553.3,188.9 554.8,188.9 554.8,190.1 556.3,190.1 556.3,189.8 557.8,189.8 557.8,190.3 559.3,190.3 559.3,190.0 560.8,190.0 560.8,190.7 562.3,190.7 562.3,190.4 563.8,190.4 563.8,190.2 565.3,190.2 565.3,190.6 566.8,190.6 566.8,190.1 568.3,190.1 568.3,190.1 569.8,190.1 569.8,190.8 571.3,190.8 571.3,189.9 572.8,189.9 572.8,187.3 574.3,187.3 574.3,190.7 575.8,190.7 575.8,190.1 577.3,190.1 577.3,190.6 578.8,190.6 578.8,188.3 580.3,188.3 580.3,190.1 581.8,190.1 581.8,190.5 583.3,190.5 583.3,190.0 584.8,190.0 584.8,190.5 586.3,190.5 586.3,190.5 587.8,190.5 587.8,190.6 589.3,190.6 589.3,190.3 590.8,190.3 590.8,190.5 592.3,190.5 592.3,190.5 593.8,190.5 593.8,187.3 595.3,187.3 595.3,190.9 596.8,190.9 596.8,190.1 598.3,190.1 598.3,190.7 599.8,190.7 599.8,190.8 601.3,190.8 601.3,190.8 602.8,190.8 602.8,190.9 604.3,190.9 604.3,190.8 605.8,190.8 605.8,190.8 607.3,190.8 607.3,190.7 608.8,190.7 608.8,190.6 610.3,190.6 610.3,190.9 611.8,190.9 611.8,190.8 613.3,190.8 613.3,190.1 614.8,190.1 614.8,189.9 616.3,189.9 616.3,189.9 617.8,189.9 617.8,190.3 619.3,190.3 619.3,190.8 620.8,190.8 620.8,190.2 622.3,190.2 622.3,186.0 623.8,186.0 623.8,190.1 625.3,190.1 625.3,189.5 626.8,189.5 626.8,190.0 628.3,190.0 628.3,190.5 629.8,190.5 629.8,188.7 631.3,188.7 631.3,190.6 632.8,190.6 632.8,186.8 634.3,186.8 634.3,190.7 635.8,190.7 635.8,189.9 637.3,189.9 637.3,190.0 638.8,190.0 638.8,190.5 640.3,190.5 640.3,190.5 641.8,190.5 641.8,189.6 643.3,189.6 643.3,189.9 644.8,189.9 644.8,190.9 646.3,190.9 646.3,189.9 647.8,189.9 647.8,190.5 649.3,190.5 649.3,188.0 650.8,188.0 650.8,188.8 652.3,188.8 652.3,190.0 653.8,190.0 653.8,190.8 655.3,190.8 655.3,190.6 656.8,190.6 656.8,189.6 658.3,189.6 658.3,190.8 659.8,190.8 659.8,187.2 661.3,187.2 661.3,189.1 662.8,189.1 662.8,187.9 664.3,187.9 664.3,190.3 665.8,190.3 665.8,188.2 667.3,188.2 667.3,189.8 668.8,189.8 668.8,190.1 670.3,190.1 670.3,189.8 671.8,189.8 671.8,186.4 673.3,186.4 673.3,190.6 674.8,190.6 674.8,190.4 676.3,190.4 676.3,190.3 677.8,190.3 677.8,189.7 679.3,189.7 679.3,190.0 680.8,190.0 680.8,189.4 682.3,189.4 682.3,190.3 683.8,190.3 683.8,190.2 685.3,190.2 685.3,190.7 686.8,190.7 686.8,190.8 688.3,190.8 688.3,190.7 689.8,190.7 689.8,190.6 691.3,190.6 691.3,190.8 692.8,190.8 692.8,190.0 694.3,190.0 694.3,190.7 695.8,190.7 695.8,190.2 697.3,190.2 697.3,188.3 698.8,188.3 698.8,190.8 700.3,190.8 700.3,186.8 701.8,186.8 701.8,189.9 703.3,189.9 703.3,189.2 704.8,189.2 704.8,188.7 706.3,188.7 706.3,190.7 707.8,190.7 707.8,189.0 709.3,189.0 709.3,190.6 710.8,190.6 710.8,189.8 712.3,189.8 712.3,190.2 713.8,190.2 713.8,188.6 715.3,188.6 715.3,189.5 716.8,189.5 716.8,190.6 718.3,190.6 718.3,190.8 719.8,190.8 719.8,187.8 721.3,187.8 721.3,190.2 722.8,190.2 722.8,187.0 724.3,187.0 724.3,189.1 725.8,189.1 725.8,189.8 727.3,189.8 727.3,189.4 728.8,189.4 728.8,190.2 730.3,190.2 730.3,190.6 731.8,190.6 731.8,190.5 733.3,190.5 733.3,190.5 734.8,190.5 734.8,190.7 736.3,190.7 736.3,190.6 737.8,190.6 737.8,190.6 739.3,190.6 739.3,190.9 740.8,190.9 740.8,187.2 742.3,187.2 742.3,189.7 743.8,189.7 743.8,189.5 745.3,189.5 745.3,189.4 746.8,189.4 746.8,189.3 748.3,189.3 748.3,190.6 749.8,190.6 749.8,188.0 751.3,188.0 751.3,190.8 752.8,190.8 752.8,190.5 754.3,190.5 754.3,186.4 755.8,186.4 755.8,190.0 757.3,190.0 757.3,189.3 758.8,189.3 758.8,190.5 760.3,190.5 760.3,190.8 761.8,190.8 761.8,190.5 763.3,190.5 763.3,190.4 764.8,190.4 764.8,190.9 766.3,190.9 766.3,189.9 767.8,189.9 767.8,188.8 769.3,188.8 769.3,190.4 770.8,190.4 770.8,187.9 772.3,187.9 772.3,186.1 773.8,186.1 773.8,190.5 775.3,190.5 775.3,190.8 776.8,190.8 776.8,189.6 778.3,189.6 778.3,190.9 779.8,190.9 779.8,190.3 781.3,190.3 781.3,189.4 782.8,189.4 782.8,190.9 784.3,190.9 784.3,190.3 785.8,190.3 785.8,190.0 787.3,190.0 787.3,190.9 788.8,190.9 788.8,190.6 790.3,190.6 790.3,190.5 791.8,190.5 791.8,189.9 793.3,189.9 793.3,190.7 794.8,190.7 794.8,190.6 796.3,190.6 796.3,190.5 797.8,190.5 797.8,190.3 799.3,190.3 799.3,190.1 800.8,190.1 800.8,190.8 802.3,190.8 802.3,190.6 803.8,190.6 803.8,188.1 805.3,188.1 805.3,190.1 806.8,190.1 806.8,190.7 808.3,190.7 808.3,190.2 809.8,190.2 809.8,190.1 811.3,190.1 811.3,190.5 812.8,190.5 812.8,190.4 814.3,190.4 814.3,190.7 815.8,190.7 815.8,190.2 817.3,190.2 817.3,190.5 818.8,190.5 818.8,190.5 820.3,190.5 820.3,189.7 821.8,189.7 821.8,190.8 823.3,190.8 823.3,190.6 824.8,190.6 824.8,190.8 826.3,190.8 826.3,188.8 827.8,188.8 827.8,190.6 829.3,190.6 829.3,190.1 830.8,190.1 830.8,190.1 832.3,190.1 832.3,190.5 833.8,190.5 833.8,190.6 835.3,190.6 835.3,190.6 836.8,190.6 836.8,190.1 838.3,190.1 838.3,188.2 839.8,188.2 839.8,189.1 841.3,189.1 841.3,189.9 842.8,189.9 842.8,190.3 844.3,190.3 844.3,189.8 845.8,189.8 845.8,190.1 847.3,190.1 847.3,190.0 848.8,190.0 848.8,190.2 850.3,190.2 850.3,190.6 851.8,190.6 851.8,190.5 853.3,190.5 853.3,189.9 854.8,189.9 854.8,190.5 856.3,190.5 856.3,190.7 857.8,190.7 857.8,189.4 859.3,189.4 859.3,190.7 860.8,190.7 860.8,190.3 862.3,190.3 862.3,189.9 863.8,189.9 863.8,188.2 865.3,188.2 865.3,190.6 866.8,190.6 866.8,190.4 868.3,190.4 868.3,187.5 869.8,187.5 869.8,190.7 871.3,190.7 871.3,189.5 872.8,189.5 872.8,186.5 874.3,186.5 874.3,190.1 875.8,190.1 875.8,189.1 877.3,189.1 877.3,189.7 878.8,189.7 878.8,190.0 880.3,190.0 880.3,189.9 881.8,189.9 881.8,190.2 883.3,190.2 883.3,190.6 884.8,190.6 884.8,188.0 886.3,188.0 886.3,190.7 887.8,190.7 887.8,190.5 889.3,190.5 889.3,190.9 890.8,190.9 890.8,188.4 892.3,188.4 892.3,190.3 893.8,190.3 893.8,190.5 895.3,190.5 895.3,190.4 896.8,190.4 896.8,190.8 898.3,190.8 898.3,190.8 899.8,190.8 899.8,190.9 901.3,190.9 901.3,190.2 902.8,190.2 902.8,190.8 904.3,190.8 904.3,189.1 905.8,189.1 905.8,187.7 907.3,187.7 907.3,188.3 908.8,188.3 908.8,190.0 910.3,190.0 910.3,189.7 911.8,189.7 911.8,187.4 913.3,187.4 913.3,190.4 914.8,190.4 914.8,196.2 913.3,196.2 913.3,196.0 911.8,196.0 911.8,196.2 910.3,196.2 910.3,196.4 908.8,196.4 908.8,195.5 907.3,195.5 907.3,196.6 905.8,196.6 905.8,196.2 904.3,196.2 904.3,196.3 902.8,196.3 902.8,196.2 901.3,196.2 901.3,196.6 899.8,196.6 899.8,197.2 898.3,197.2 898.3,196.4 896.8,196.4 896.8,195.6 895.3,195.6 895.3,196.1 893.8,196.1 893.8,196.1 892.3,196.1 892.3,196.5 890.8,196.5 890.8,195.7 889.3,195.7 889.3,196.0 887.8,196.0 887.8,195.7 886.3,195.7 886.3,196.5 884.8,196.5 884.8,196.2 883.3,196.2 883.3,196.1 881.8,196.1 881.8,196.3 880.3,196.3 880.3,195.7 878.8,195.7 878.8,196.4 877.3,196.4 877.3,196.0 875.8,196.0 875.8,195.7 874.3,195.7 874.3,195.7 872.8,195.7 872.8,196.5 871.3,196.5 871.3,196.2 869.8,196.2 869.8,195.8 868.3,195.8 868.3,196.4 866.8,196.4 866.8,197.1 865.3,197.1 865.3,196.0 863.8,196.0 863.8,195.5 862.3,195.5 862.3,196.4 860.8,196.4 860.8,198.1 859.3,198.1 859.3,199.8 857.8,199.8 857.8,196.0 856.3,196.0 856.3,196.1 854.8,196.1 854.8,197.7 853.3,197.7 853.3,195.5 851.8,195.5 851.8,196.1 850.3,196.1 850.3,195.5 848.8,195.5 848.8,195.7 847.3,195.7 847.3,196.1 845.8,196.1 845.8,198.0 844.3,198.0 844.3,196.0 842.8,196.0 842.8,195.5 841.3,195.5 841.3,195.5 839.8,195.5 839.8,196.3 838.3,196.3 838.3,196.8 836.8,196.8 836.8,195.7 835.3,195.7 835.3,196.1 833.8,196.1 833.8,197.0 832.3,197.0 832.3,196.1 830.8,196.1 830.8,195.8 829.3,195.8 829.3,197.1 827.8,197.1 827.8,195.5 826.3,195.5 826.3,195.6 824.8,195.6 824.8,196.7 823.3,196.7 823.3,196.8 821.8,196.8 821.8,196.5 820.3,196.5 820.3,196.1 818.8,196.1 818.8,195.9 817.3,195.9 817.3,195.8 815.8,195.8 815.8,195.7 814.3,195.7 814.3,197.8 812.8,197.8 812.8,196.0 811.3,196.0 811.3,197.6 809.8,197.6 809.8,195.6 808.3,195.6 808.3,196.4 806.8,196.4 806.8,196.2 805.3,196.2 805.3,196.1 803.8,196.1 803.8,195.8 802.3,195.8 802.3,196.4 800.8,196.4 800.8,196.2 799.3,196.2 799.3,195.7 797.8,195.7 797.8,195.9 796.3,195.9 796.3,196.1 794.8,196.1 794.8,195.6 793.3,195.6 793.3,195.9 791.8,195.9 791.8,195.6 790.3,195.6 790.3,195.6 788.8,195.6 788.8,196.3 787.3,196.3 787.3,195.8 785.8,195.8 785.8,197.2 784.3,197.2 784.3,196.2 782.8,196.2 782.8,196.7 781.3,196.7 781.3,196.0 779.8,196.0 779.8,196.0 778.3,196.0 778.3,196.4 776.8,196.4 776.8,195.9 775.3,195.9 775.3,195.6 773.8,195.6 773.8,195.7 772.3,195.7 772.3,196.0 770.8,196.0 770.8,197.2 769.3,197.2 769.3,195.8 767.8,195.8 767.8,195.5 766.3,195.5 766.3,195.8 764.8,195.8 764.8,196.0 763.3,196.0 763.3,195.5 761.8,195.5 761.8,195.5 760.3,195.5 760.3,196.2 758.8,196.2 758.8,195.7 757.3,195.7 757.3,200.6 755.8,200.6 755.8,196.2 754.3,196.2 754.3,199.7 752.8,199.7 752.8,196.0 751.3,196.0 751.3,195.8 749.8,195.8 749.8,195.9 748.3,195.9 748.3,196.2 746.8,196.2 746.8,195.5 745.3,195.5 745.3,195.6 743.8,195.6 743.8,196.0 742.3,196.0 742.3,195.5 740.8,195.5 740.8,196.0 739.3,196.0 739.3,196.0 737.8,196.0 737.8,199.4 736.3,199.4 736.3,195.9 734.8,195.9 734.8,195.7 733.3,195.7 733.3,195.6 731.8,195.6 731.8,199.0 730.3,199.0 730.3,195.7 728.8,195.7 728.8,196.6 727.3,196.6 727.3,196.7 725.8,196.7 725.8,195.9 724.3,195.9 724.3,196.4 722.8,196.4 722.8,196.1 721.3,196.1 721.3,196.2 719.8,196.2 719.8,197.4 718.3,197.4 718.3,198.1 716.8,198.1 716.8,199.9 715.3,199.9 715.3,195.5 713.8,195.5 713.8,196.0 712.3,196.0 712.3,196.0 710.8,196.0 710.8,195.7 709.3,195.7 709.3,198.8 707.8,198.8 707.8,195.6 706.3,195.6 706.3,195.6 704.8,195.6 704.8,196.4 703.3,196.4 703.3,195.6 701.8,195.6 701.8,195.5 700.3,195.5 700.3,196.0 698.8,196.0 698.8,199.2 697.3,199.2 697.3,195.8 695.8,195.8 695.8,196.0 694.3,196.0 694.3,195.6 692.8,195.6 692.8,196.5 691.3,196.5 691.3,195.6 689.8,195.6 689.8,196.1 688.3,196.1 688.3,196.6 686.8,196.6 686.8,196.0 685.3,196.0 685.3,199.8 683.8,199.8 683.8,195.8 682.3,195.8 682.3,195.9 680.8,195.9 680.8,196.0 679.3,196.0 679.3,198.2 677.8,198.2 677.8,196.0 676.3,196.0 676.3,196.4 674.8,196.4 674.8,196.1 673.3,196.1 673.3,195.8 671.8,195.8 671.8,196.4 670.3,196.4 670.3,196.4 668.8,196.4 668.8,196.0 667.3,196.0 667.3,196.2 665.8,196.2 665.8,195.8 664.3,195.8 664.3,195.6 662.8,195.6 662.8,196.0 661.3,196.0 661.3,196.5 659.8,196.5 659.8,195.7 658.3,195.7 658.3,195.6 656.8,195.6 656.8,195.6 655.3,195.6 655.3,195.5 653.8,195.5 653.8,196.2 652.3,196.2 652.3,196.4 650.8,196.4 650.8,195.9 649.3,195.9 649.3,195.6 647.8,195.6 647.8,198.7 646.3,198.7 646.3,196.2 644.8,196.2 644.8,196.6 643.3,196.6 643.3,195.8 641.8,195.8 641.8,197.8 640.3,197.8 640.3,196.5 638.8,196.5 638.8,196.1 637.3,196.1 637.3,196.0 635.8,196.0 635.8,197.1 634.3,197.1 634.3,196.5 632.8,196.5 632.8,196.1 631.3,196.1 631.3,195.6 629.8,195.6 629.8,196.2 628.3,196.2 628.3,196.0 626.8,196.0 626.8,195.7 625.3,195.7 625.3,196.9 623.8,196.9 623.8,195.7 622.3,195.7 622.3,195.8 620.8,195.8 620.8,195.6 619.3,195.6 619.3,199.0 617.8,199.0 617.8,195.7 616.3,195.7 616.3,199.0 614.8,199.0 614.8,195.8 613.3,195.8 613.3,196.1 611.8,196.1 611.8,196.4 610.3,196.4 610.3,196.0 608.8,196.0 608.8,196.7 607.3,196.7 607.3,196.0 605.8,196.0 605.8,196.2 604.3,196.2 604.3,195.9 602.8,195.9 602.8,195.5 601.3,195.5 601.3,195.9 599.8,195.9 599.8,195.7 598.3,195.7 598.3,196.4 596.8,196.4 596.8,196.2 595.3,196.2 595.3,195.7 593.8,195.7 593.8,196.0 592.3,196.0 592.3,195.6 590.8,195.6 590.8,196.8 589.3,196.8 589.3,197.5 587.8,197.5 587.8,196.6 586.3,196.6 586.3,195.8 584.8,195.8 584.8,195.9 583.3,195.9 583.3,196.0 581.8,196.0 581.8,195.6 580.3,195.6 580.3,195.6 578.8,195.6 578.8,196.2 577.3,196.2 577.3,195.6 575.8,195.6 575.8,196.4 574.3,196.4 574.3,195.9 572.8,195.9 572.8,195.7 571.3,195.7 571.3,196.3 569.8,196.3 569.8,197.1 568.3,197.1 568.3,195.9 566.8,195.9 566.8,196.7 565.3,196.7 565.3,198.0 563.8,198.0 563.8,197.0 562.3,197.0 562.3,196.8 560.8,196.8 560.8,195.9 559.3,195.9 559.3,196.0 557.8,196.0 557.8,195.5 556.3,195.5 556.3,195.7 554.8,195.7 554.8,196.6 553.3,196.6 553.3,195.6 551.8,195.6 551.8,198.0 550.3,198.0 550.3,196.1 548.8,196.1 548.8,196.0 547.3,196.0 547.3,196.7 545.8,196.7 545.8,195.9 544.3,195.9 544.3,196.0 542.8,196.0 542.8,196.5 541.3,196.5 541.3,196.1 539.8,196.1 539.8,195.7 538.3,195.7 538.3,195.5 536.8,195.5 536.8,195.6 535.3,195.6 535.3,199.6 533.8,199.6 533.8,196.8 532.3,196.8 532.3,199.8 530.8,199.8 530.8,197.4 529.3,197.4 529.3,196.4 527.8,196.4 527.8,195.5 526.3,195.5 526.3,195.5 524.8,195.5 524.8,195.8 523.3,195.8 523.3,196.5 521.8,196.5 521.8,195.7 520.3,195.7 520.3,195.7 518.8,195.7 518.8,196.7 517.3,196.7 517.3,197.9 515.8,197.9 515.8,196.0 514.3,196.0 514.3,196.7 512.8,196.7 512.8,197.6 511.3,197.6 511.3,200.5 509.8,200.5 509.8,196.7 508.3,196.7 508.3,195.7 506.8,195.7 506.8,195.6 505.3,195.6 505.3,196.6 503.8,196.6 503.8,196.0 502.3,196.0 502.3,195.8 500.8,195.8 500.8,196.4 499.3,196.4 499.3,196.0 497.8,196.0 497.8,197.4 496.3,197.4 496.3,195.6 494.8,195.6 494.8,196.6 493.3,196.6 493.3,195.8 491.8,195.8 491.8,197.0 490.3,197.0 490.3,195.9 488.8,195.9 488.8,195.8 487.3,195.8 487.3,195.6 485.8,195.6 485.8,196.1 484.3,196.1 484.3,195.6 482.8,195.6 482.8,195.7 481.3,195.7 481.3,198.5 479.8,198.5 479.8,198.7 478.3,198.7 478.3,196.4 476.8,196.4 476.8,195.9 475.3,195.9 475.3,196.1 473.8,196.1 473.8,196.9 472.3,196.9 472.3,195.8 470.8,195.8 470.8,196.0 469.3,196.0 469.3,196.7 467.8,196.7 467.8,195.9 466.3,195.9 466.3,195.5 464.8,195.5 464.8,197.3 463.3,197.3 463.3,196.7 461.8,196.7 461.8,195.9 460.3,195.9 460.3,196.4 458.8,196.4 458.8,195.8 457.3,195.8 457.3,196.8 455.8,196.8 455.8,196.7 454.3,196.7 454.3,197.1 452.8,197.1 452.8,198.0 451.3,198.0 451.3,196.2 449.8,196.2 449.8,196.9 448.3,196.9 448.3,195.6 446.8,195.6 446.8,196.0 445.3,196.0 445.3,196.0 443.8,196.0 443.8,196.7 442.3,196.7 442.3,195.8 440.8,195.8 440.8,196.1 439.3,196.1 439.3,198.9 437.8,198.9 437.8,195.6 436.3,195.6 436.3,196.9 434.8,196.9 434.8,195.7 433.3,195.7 433.3,196.0 431.8,196.0 431.8,196.0 430.3,196.0 430.3,195.9 428.8,195.9 428.8,197.2 427.3,197.2 427.3,195.6 425.8,195.6 425.8,195.9 424.3,195.9 424.3,196.1 422.8,196.1 422.8,196.1 421.3,196.1 421.3,195.6 419.8,195.6 419.8,195.6 418.3,195.6 418.3,195.7 416.8,195.7 416.8,195.5 415.3,195.5 415.3,195.7 413.8,195.7 413.8,195.6 412.3,195.6 412.3,196.2 410.8,196.2 410.8,196.0 409.3,196.0 409.3,197.5 407.8,197.5 407.8,196.5 406.3,196.5 406.3,195.9 404.8,195.9 404.8,195.8 403.3,195.8 403.3,195.6 401.8,195.6 401.8,196.0 400.3,196.0 400.3,195.6 398.8,195.6 398.8,196.6 397.3,196.6 397.3,196.3 395.8,196.3 395.8,195.6 394.3,195.6 394.3,196.2 392.8,196.2 392.8,195.7 391.3,195.7 391.3,197.2 389.8,197.2 389.8,196.0 388.3,196.0 388.3,196.9 386.8,196.9 386.8,196.2 385.3,196.2 385.3,196.0 383.8,196.0 383.8,196.4 382.3,196.4 382.3,196.6 380.8,196.6 380.8,196.7 379.3,196.7 379.3,195.7 377.8,195.7 377.8,195.7 376.3,195.7 376.3,195.7 374.8,195.7 374.8,195.8 373.3,195.8 373.3,196.6 371.8,196.6 371.8,196.6 370.3,196.6 370.3,196.8 368.8,196.8 368.8,196.3 367.3,196.3 367.3,195.8 365.8,195.8 365.8,197.8 364.3,197.8 364.3,199.4 362.8,199.4 362.8,197.5 361.3,197.5 361.3,196.8 359.8,196.8 359.8,200.5 358.3,200.5 358.3,198.4 356.8,198.4 356.8,195.8 355.3,195.8 355.3,196.7 353.8,196.7 353.8,195.6 352.3,195.6 352.3,195.9 350.8,195.9 350.8,195.7 349.3,195.7 349.3,196.0 347.8,196.0 347.8,196.4 346.3,196.4 346.3,195.7 344.8,195.7 344.8,196.1 343.3,196.1 343.3,196.3 341.8,196.3 341.8,197.4 340.3,197.4 340.3,196.0 338.8,196.0 338.8,195.5 337.3,195.5 337.3,196.0 335.8,196.0 335.8,195.7 334.3,195.7 334.3,195.8 332.8,195.8 332.8,195.7 331.3,195.7 331.3,196.1 329.8,196.1 329.8,195.8 328.3,195.8 328.3,195.6 326.8,195.6 326.8,195.7 325.3,195.7 325.3,197.8 323.8,197.8 323.8,196.1 322.3,196.1 322.3,195.8 320.8,195.8 320.8,196.0 319.3,196.0 319.3,195.8 317.8,195.8 317.8,196.9 316.3,196.9 316.3,195.7 314.8,195.7 314.8,195.5 313.3,195.5 313.3,196.2 311.8,196.2 311.8,196.1 310.3,196.1 310.3,196.2 308.8,196.2 308.8,195.7 307.3,195.7 307.3,195.9 305.8,195.9 305.8,196.5 304.3,196.5 304.3,197.6 302.8,197.6 302.8,197.2 301.3,197.2 301.3,196.0 299.8,196.0 299.8,196.5 298.3,196.5 298.3,197.7 296.8,197.7 296.8,196.1 295.3,196.1 295.3,200.4 293.8,200.4 293.8,195.9 292.3,195.9 292.3,196.5 290.8,196.5 290.8,196.2 289.3,196.2 289.3,195.7 287.8,195.7 287.8,195.6 286.3,195.6 286.3,195.9 284.8,195.9 284.8,196.2 283.3,196.2 283.3,196.8 281.8,196.8 281.8,196.9 280.3,196.9 280.3,195.7 278.8,195.7 278.8,196.1 277.3,196.1 277.3,195.6 275.8,195.6 275.8,195.8 274.3,195.8 274.3,195.7 272.8,195.7 272.8,195.7 271.3,195.7 271.3,195.8 269.8,195.8 269.8,195.7 268.3,195.7 268.3,196.6 266.8,196.6 266.8,195.5 265.3,195.5 265.3,196.8 263.8,196.8 263.8,198.0 262.3,198.0 262.3,195.5 260.8,195.5 260.8,196.0 259.3,196.0 259.3,197.8 257.8,197.8 257.8,196.4 256.3,196.4 256.3,199.8 254.8,199.8 254.8,196.4 253.3,196.4 253.3,196.0 251.8,196.0 251.8,196.4 250.3,196.4 250.3,195.6 248.8,195.6 248.8,196.4 247.3,196.4 247.3,195.7 245.8,195.7 245.8,197.6 244.3,197.6 244.3,196.6 242.8,196.6 242.8,196.6 241.3,196.6 241.3,195.9 239.8,195.9 239.8,197.3 238.3,197.3 238.3,196.2 236.8,196.2 236.8,195.7 235.3,195.7 235.3,196.2 233.8,196.2 233.8,196.1 232.3,196.1 232.3,196.3 230.8,196.3 230.8,196.1 229.3,196.1 229.3,197.5 227.8,197.5 227.8,195.6 226.3,195.6 226.3,196.2 224.8,196.2 224.8,196.4 223.3,196.4 223.3,195.7 221.8,195.7 221.8,198.8 220.3,198.8 220.3,196.2 218.8,196.2 218.8,195.7 217.3,195.7 217.3,197.7 215.8,197.7 215.8,196.4 214.3,196.4 214.3,196.3 212.8,196.3 212.8,196.3 211.3,196.3 211.3,195.8 209.8,195.8 209.8,196.0 208.3,196.0 208.3,196.1 206.8,196.1 206.8,195.9 205.3,195.9 205.3,196.4 203.8,196.4 203.8,195.6 202.3,195.6 202.3,195.7 200.8,195.7 200.8,195.6 199.3,195.6 199.3,195.6 197.8,195.6 197.8,197.4 196.3,197.4 196.3,195.9 194.8,195.9 194.8,197.2 193.3,197.2 193.3,199.1 191.8,199.1 191.8,196.2 190.3,196.2 190.3,197.1 188.8,197.1 188.8,195.8 187.3,195.8 187.3,196.1 185.8,196.1 185.8,196.0 184.3,196.0 184.3,196.1 182.8,196.1 182.8,198.3 181.3,198.3 181.3,195.7 179.8,195.7 179.8,195.6 178.3,195.6 178.3,197.8 176.8,197.8 176.8,196.4 175.3,196.4 175.3,196.8 173.8,196.8 173.8,196.6 172.3,196.6 172.3,196.0 170.8,196.0 170.8,195.8 169.3,195.8 169.3,195.6 167.8,195.6 167.8,195.6 166.3,195.6 166.3,196.3 164.8,196.3 164.8,196.0 163.3,196.0 163.3,195.6 161.8,195.6 161.8,196.8 160.3,196.8 160.3,196.3 158.8,196.3 158.8,198.6 157.3,198.6 157.3,196.6 155.8,196.6 155.8,195.9 154.3,195.9 154.3,196.1 152.8,196.1 152.8,196.1 151.3,196.1 151.3,197.5 149.8,197.5 149.8,196.7 148.3,196.7 148.3,196.0 146.8,196.0 146.8,196.7 145.3,196.7 145.3,196.4 143.8,196.4 143.8,196.3 142.3,196.3 142.3,195.9 140.8,195.9 140.8,195.5 139.3,195.5 139.3,196.6 137.8,196.6 137.8,196.0 136.3,196.0 136.3,196.0 134.8,196.0 134.8,196.1 133.3,196.1 133.3,196.2 131.8,196.2 131.8,196.5 130.3,196.5 130.3,195.7 128.8,195.7 128.8,195.9 127.3,195.9 127.3,195.5 125.8,195.5 125.8,196.4 124.3,196.4 124.3,195.6 122.8,195.6 122.8,196.3 121.3,196.3 121.3,196.0 119.8,196.0 119.8,198.6 118.3,198.6 118.3,195.7 116.8,195.7 116.8,196.3 115.3,196.3 115.3,197.5 113.8,197.5 113.8,198.9 112.3,198.9 112.3,196.1 110.8,196.1 110.8,196.2 109.3,196.2 109.3,196.3 107.8,196.3 107.8,197.7 106.3,197.7 106.3,195.9 104.8,195.9 104.8,196.9 103.3,196.9 103.3,195.8 101.8,195.8 101.8,195.6 100.3,195.6 100.3,196.5 98.8,196.5 98.8,195.9 97.3,195.9 97.3,199.4 95.8,199.4 95.8,195.9 94.3,195.9 94.3,195.6 92.8,195.6 92.8,198.0 91.3,198.0 91.3,198.5 89.8,198.5 Z" stroke="none" stroke-width="0" fill="#fbab00" />
<rect x="154.55" y="193.00" width="1.90" height="68.00" fill="#fbab00" />
<rect x="170.65" y="193.00" width="1.90" height="72.00" fill="#fbab00" />
<rect x="197.05" y="193.00" width="1.90" height="68.00" fill="#fbab00" />
<rect x="214.05" y="193.00" width="1.90" height="72.00" fill="#fbab00" />
<rect x="240.05" y="193.00" width="1.90" height="70.00" fill="#fbab00" />
<rect x="256.65" y="193.00" width="1.90" height="68.00" fill="#fbab00" />
<rect x="282.75" y="193.00" width="1.90" height="68.00" fill="#fbab00" />
<rect x="302.45" y="193.00" width="1.90" height="70.00" fill="#fbab00" />
<rect x="331.35" y="193.00" width="1.90" height="72.00" fill="#fbab00" />
<rect x="344.65" y="193.00" width="1.90" height="68.00" fill="#fbab00" />
<rect x="372.05" y="193.00" width="1.90" height="55.00" fill="#fbab00" />
<rect x="392.65" y="193.00" width="1.90" height="72.00" fill="#fbab00" />
<rect x="421.55" y="193.00" width="1.90" height="68.00" fill="#fbab00" />
<rect x="435.05" y="193.00" width="1.90" height="69.00" fill="#fbab00" />
<rect x="480.05" y="193.00" width="1.90" height="69.00" fill="#fbab00" />
<rect x="508.55" y="193.00" width="1.90" height="68.00" fill="#fbab00" />
<rect x="524.05" y="193.00" width="1.90" height="68.00" fill="#fbab00" />
<rect x="550.85" y="193.00" width="1.90" height="68.00" fill="#fbab00" />
<rect x="567.05" y="193.00" width="1.90" height="68.00" fill="#fbab00" />
<rect x="594.05" y="193.00" width="1.90" height="71.00" fill="#fbab00" />
<rect x="610.35" y="193.00" width="1.90" height="68.00" fill="#fbab00" />
<rect x="636.25" y="193.00" width="1.90" height="68.00" fill="#fbab00" />
<rect x="652.55" y="193.00" width="1.90" height="68.00" fill="#fbab00" />
<rect x="679.45" y="193.00" width="1.90" height="68.00" fill="#fbab00" />
<rect x="732.05" y="193.00" width="1.90" height="68.00" fill="#fbab00" />
<rect x="759.05" y="193.00" width="1.90" height="68.00" fill="#fbab00" />
<rect x="777.05" y="193.00" width="1.90" height="68.00" fill="#fbab00" />
<rect x="807.05" y="193.00" width="1.90" height="68.00" fill="#fbab00" />
<rect x="847.75" y="193.00" width="1.90" height="68.00" fill="#fbab00" />
<path d="M89.8,323.2 91.3,323.2 91.3,323.1 92.8,323.1 92.8,321.8 94.3,321.8 94.3,321.4 95.8,321.4 95.8,322.6 97.3,322.6 97.3,323.2 98.8,323.2 98.8,321.9 100.3,321.9 100.3,321.9 101.8,321.9 101.8,322.3 103.3,322.3 103.3,323.2 104.8,323.2 104.8,323.2 106.3,323.2 106.3,322.5 107.8,322.5 107.8,323.1 109.3,323.1 109.3,322.2 110.8,322.2 110.8,322.9 112.3,322.9 112.3,323.0 113.8,323.0 113.8,322.6 115.3,322.6 115.3,322.8 116.8,322.8 116.8,322.9 118.3,322.9 118.3,322.4 119.8,322.4 119.8,322.8 121.3,322.8 121.3,322.6 122.8,322.6 122.8,322.7 124.3,322.7 124.3,323.1 125.8,323.1 125.8,322.9 127.3,322.9 127.3,322.8 128.8,322.8 128.8,322.8 130.3,322.8 130.3,323.1 131.8,323.1 131.8,322.2 133.3,322.2 133.3,322.6 134.8,322.6 134.8,323.1 136.3,323.1 136.3,322.1 137.8,322.1 137.8,320.6 139.3,320.6 139.3,323.1 140.8,323.1 140.8,322.8 142.3,322.8 142.3,323.2 143.8,323.2 143.8,322.9 145.3,322.9 145.3,320.8 146.8,320.8 146.8,322.7 148.3,322.7 148.3,322.4 149.8,322.4 149.8,323.0 151.3,323.0 151.3,321.5 152.8,321.5 152.8,320.1 154.3,320.1 154.3,323.0 155.8,323.0 155.8,322.5 157.3,322.5 157.3,322.5 158.8,322.5 158.8,323.0 160.3,323.0 160.3,323.1 161.8,323.1 161.8,321.7 163.3,321.7 163.3,322.3 164.8,322.3 164.8,322.8 166.3,322.8 166.3,322.4 167.8,322.4 167.8,321.0 169.3,321.0 169.3,322.9 170.8,322.9 170.8,322.6 172.3,322.6 172.3,322.9 173.8,322.9 173.8,322.9 175.3,322.9 175.3,322.5 176.8,322.5 176.8,322.7 178.3,322.7 178.3,322.3 179.8,322.3 179.8,322.5 181.3,322.5 181.3,322.9 182.8,322.9 182.8,323.1 184.3,323.1 184.3,322.4 185.8,322.4 185.8,320.9 187.3,320.9 187.3,322.3 188.8,322.3 188.8,323.0 190.3,323.0 190.3,322.6 191.8,322.6 191.8,322.6 193.3,322.6 193.3,322.6 194.8,322.6 194.8,323.1 196.3,323.1 196.3,322.5 197.8,322.5 197.8,322.3 199.3,322.3 199.3,321.9 200.8,321.9 200.8,322.9 202.3,322.9 202.3,322.7 203.8,322.7 203.8,322.3 205.3,322.3 205.3,320.9 206.8,320.9 206.8,321.8 208.3,321.8 208.3,322.8 209.8,322.8 209.8,322.5 211.3,322.5 211.3,323.0 212.8,323.0 212.8,321.1 214.3,321.1 214.3,322.3 215.8,322.3 215.8,322.3 217.3,322.3 217.3,323.0 218.8,323.0 218.8,323.1 220.3,323.1 220.3,322.4 221.8,322.4 221.8,322.3 223.3,322.3 223.3,323.0 224.8,323.0 224.8,323.0 226.3,323.0 226.3,323.0 227.8,323.0 227.8,322.2 229.3,322.2 229.3,323.0 230.8,323.0 230.8,322.4 232.3,322.4 232.3,323.1 233.8,323.1 233.8,322.5 235.3,322.5 235.3,323.1 236.8,323.1 236.8,323.1 238.3,323.1 238.3,322.4 239.8,322.4 239.8,321.4 241.3,321.4 241.3,321.9 242.8,321.9 242.8,322.7 244.3,322.7 244.3,323.1 245.8,323.1 245.8,322.9 247.3,322.9 247.3,322.8 248.8,322.8 248.8,322.1 250.3,322.1 250.3,322.9 251.8,322.9 251.8,322.2 253.3,322.2 253.3,323.2 254.8,323.2 254.8,323.1 256.3,323.1 256.3,322.8 257.8,322.8 257.8,323.1 259.3,323.1 259.3,323.0 260.8,323.0 260.8,323.1 262.3,323.1 262.3,323.2 263.8,323.2 263.8,322.3 265.3,322.3 265.3,322.7 266.8,322.7 266.8,322.9 268.3,322.9 268.3,322.9 269.8,322.9 269.8,321.6 271.3,321.6 271.3,322.5 272.8,322.5 272.8,323.0 274.3,323.0 274.3,322.4 275.8,322.4 275.8,322.6 277.3,322.6 277.3,323.1 278.8,323.1 278.8,323.1 280.3,323.1 280.3,322.5 281.8,322.5 281.8,322.9 283.3,322.9 283.3,322.8 284.8,322.8 284.8,321.9 286.3,321.9 286.3,323.1 287.8,323.1 287.8,323.1 289.3,323.1 289.3,322.5 290.8,322.5 290.8,322.4 292.3,322.4 292.3,323.2 293.8,323.2 293.8,321.7 295.3,321.7 295.3,322.6 296.8,322.6 296.8,322.8 298.3,322.8 298.3,322.9 299.8,322.9 299.8,323.2 301.3,323.2 301.3,321.7 302.8,321.7 302.8,322.9 304.3,322.9 304.3,322.4 305.8,322.4 305.8,323.0 307.3,323.0 307.3,323.1 308.8,323.1 308.8,319.9 310.3,319.9 310.3,322.9 311.8,322.9 311.8,322.8 313.3,322.8 313.3,323.1 314.8,323.1 314.8,321.6 316.3,321.6 316.3,321.8 317.8,321.8 317.8,323.0 319.3,323.0 319.3,322.5 320.8,322.5 320.8,322.7 322.3,322.7 322.3,321.8 323.8,321.8 323.8,322.9 325.3,322.9 325.3,322.7 326.8,322.7 326.8,322.2 328.3,322.2 328.3,322.7 329.8,322.7 329.8,322.2 331.3,322.2 331.3,322.2 332.8,322.2 332.8,322.6 334.3,322.6 334.3,322.7 335.8,322.7 335.8,323.1 337.3,323.1 337.3,323.0 338.8,323.0 338.8,322.9 340.3,322.9 340.3,323.0 341.8,323.0 341.8,322.1 343.3,322.1 343.3,323.1 344.8,323.1 344.8,322.4 346.3,322.4 346.3,322.6 347.8,322.6 347.8,322.5 349.3,322.5 349.3,322.6 350.8,322.6 350.8,323.2 352.3,323.2 352.3,322.4 353.8,322.4 353.8,322.1 355.3,322.1 355.3,322.8 356.8,322.8 356.8,322.6 358.3,322.6 358.3,321.4 359.8,321.4 359.8,322.8 361.3,322.8 361.3,323.0 362.8,323.0 362.8,322.3 364.3,322.3 364.3,322.9 365.8,322.9 365.8,322.5 367.3,322.5 367.3,322.4 368.8,322.4 368.8,321.8 370.3,321.8 370.3,323.0 371.8,323.0 371.8,322.1 373.3,322.1 373.3,321.7 374.8,321.7 374.8,322.4 376.3,322.4 376.3,321.7 377.8,321.7 377.8,321.9 379.3,321.9 379.3,323.0 380.8,323.0 380.8,323.1 382.3,323.1 382.3,322.1 383.8,322.1 383.8,320.8 385.3,320.8 385.3,323.0 386.8,323.0 386.8,321.1 388.3,321.1 388.3,322.8 389.8,322.8 389.8,323.1 391.3,323.1 391.3,322.6 392.8,322.6 392.8,322.6 394.3,322.6 394.3,322.9 395.8,322.9 395.8,322.7 397.3,322.7 397.3,322.4 398.8,322.4 398.8,323.0 400.3,323.0 400.3,322.4 401.8,322.4 401.8,323.0 403.3,323.0 403.3,322.6 404.8,322.6 404.8,323.0 406.3,323.0 406.3,321.9 407.8,321.9 407.8,322.5 409.3,322.5 409.3,322.2 410.8,322.2 410.8,322.9 412.3,322.9 412.3,323.1 413.8,323.1 413.8,322.5 415.3,322.5 415.3,322.3 416.8,322.3 416.8,321.9 418.3,321.9 418.3,322.7 419.8,322.7 419.8,322.7 421.3,322.7 421.3,322.6 422.8,322.6 422.8,322.9 424.3,322.9 424.3,322.1 425.8,322.1 425.8,322.2 427.3,322.2 427.3,321.5 428.8,321.5 428.8,322.5 430.3,322.5 430.3,322.5 431.8,322.5 431.8,322.9 433.3,322.9 433.3,322.1 434.8,322.1 434.8,322.3 436.3,322.3 436.3,320.6 437.8,320.6 437.8,323.2 439.3,323.2 439.3,323.1 440.8,323.1 440.8,322.0 442.3,322.0 442.3,322.4 443.8,322.4 443.8,322.6 445.3,322.6 445.3,323.0 446.8,323.0 446.8,322.5 448.3,322.5 448.3,323.0 449.8,323.0 449.8,322.3 451.3,322.3 451.3,322.8 452.8,322.8 452.8,323.0 454.3,323.0 454.3,323.1 455.8,323.1 455.8,321.5 457.3,321.5 457.3,322.2 458.8,322.2 458.8,321.1 460.3,321.1 460.3,322.8 461.8,322.8 461.8,323.1 463.3,323.1 463.3,322.7 464.8,322.7 464.8,322.3 466.3,322.3 466.3,322.5 467.8,322.5 467.8,321.5 469.3,321.5 469.3,322.8 470.8,322.8 470.8,322.8 472.3,322.8 472.3,323.1 473.8,323.1 473.8,323.0 475.3,323.0 475.3,322.2 476.8,322.2 476.8,322.2 478.3,322.2 478.3,323.1 479.8,323.1 479.8,322.7 481.3,322.7 481.3,321.8 482.8,321.8 482.8,322.9 484.3,322.9 484.3,322.9 485.8,322.9 485.8,321.5 487.3,321.5 487.3,323.1 488.8,323.1 488.8,323.0 490.3,323.0 490.3,322.3 491.8,322.3 491.8,322.9 493.3,322.9 493.3,322.9 494.8,322.9 494.8,322.9 496.3,322.9 496.3,323.2 497.8,323.2 497.8,322.9 499.3,322.9 499.3,323.0 500.8,323.0 500.8,322.8 502.3,322.8 502.3,323.0 503.8,323.0 503.8,319.8 505.3,319.8 505.3,323.0 506.8,323.0 506.8,322.5 508.3,322.5 508.3,321.5 509.8,321.5 509.8,322.7 511.3,322.7 511.3,322.8 512.8,322.8 512.8,323.0 514.3,323.0 514.3,321.9 515.8,321.9 515.8,321.9 517.3,321.9 517.3,322.7 518.8,322.7 518.8,322.7 520.3,322.7 520.3,322.5 521.8,322.5 521.8,323.0 523.3,323.0 523.3,322.5 524.8,322.5 524.8,321.4 526.3,321.4 526.3,321.8 527.8,321.8 527.8,323.0 529.3,323.0 529.3,322.8 530.8,322.8 530.8,322.5 532.3,322.5 532.3,322.8 533.8,322.8 533.8,322.9 535.3,322.9 535.3,322.0 536.8,322.0 536.8,322.7 538.3,322.7 538.3,323.2 539.8,323.2 539.8,321.8 541.3,321.8 541.3,322.6 542.8,322.6 542.8,322.9 544.3,322.9 544.3,321.8 545.8,321.8 545.8,322.6 547.3,322.6 547.3,323.1 548.8,323.1 548.8,322.3 550.3,322.3 550.3,323.1 551.8,323.1 551.8,323.0 553.3,323.0 553.3,321.9 554.8,321.9 554.8,322.7 556.3,322.7 556.3,322.1 557.8,322.1 557.8,323.1 559.3,323.1 559.3,322.2 560.8,322.2 560.8,321.9 562.3,321.9 562.3,322.2 563.8,322.2 563.8,322.6 565.3,322.6 565.3,322.9 566.8,322.9 566.8,322.5 568.3,322.5 568.3,322.6 569.8,322.6 569.8,322.5 571.3,322.5 571.3,322.6 572.8,322.6 572.8,322.3 574.3,322.3 574.3,322.9 575.8,322.9 575.8,322.8 577.3,322.8 577.3,322.9 578.8,322.9 578.8,322.3 580.3,322.3 580.3,322.5 581.8,322.5 581.8,323.2 583.3,323.2 583.3,323.2 584.8,323.2 584.8,323.1 586.3,323.1 586.3,323.0 587.8,323.0 587.8,322.8 589.3,322.8 589.3,322.5 590.8,322.5 590.8,322.4 592.3,322.4 592.3,322.4 593.8,322.4 593.8,322.3 595.3,322.3 595.3,321.9 596.8,321.9 596.8,322.9 598.3,322.9 598.3,322.2 599.8,322.2 599.8,323.0 601.3,323.0 601.3,322.8 602.8,322.8 602.8,322.8 604.3,322.8 604.3,322.2 605.8,322.2 605.8,321.7 607.3,321.7 607.3,320.0 608.8,320.0 608.8,322.8 610.3,322.8 610.3,321.7 611.8,321.7 611.8,322.3 613.3,322.3 613.3,322.9 614.8,322.9 614.8,321.1 616.3,321.1 616.3,321.9 617.8,321.9 617.8,322.4 619.3,322.4 619.3,321.7 620.8,321.7 620.8,322.5 622.3,322.5 622.3,322.7 623.8,322.7 623.8,320.0 625.3,320.0 625.3,323.0 626.8,323.0 626.8,322.6 628.3,322.6 628.3,322.2 629.8,322.2 629.8,322.6 631.3,322.6 631.3,322.9 632.8,322.9 632.8,322.5 634.3,322.5 634.3,323.2 635.8,323.2 635.8,322.7 637.3,322.7 637.3,322.9 638.8,322.9 638.8,323.0 640.3,323.0 640.3,323.1 641.8,323.1 641.8,321.2 643.3,321.2 643.3,321.7 644.8,321.7 644.8,323.0 646.3,323.0 646.3,322.7 647.8,322.7 647.8,321.7 649.3,321.7 649.3,323.1 650.8,323.1 650.8,322.9 652.3,322.9 652.3,322.0 653.8,322.0 653.8,322.2 655.3,322.2 655.3,320.5 656.8,320.5 656.8,322.9 658.3,322.9 658.3,323.0 659.8,323.0 659.8,322.6 661.3,322.6 661.3,322.4 662.8,322.4 662.8,322.8 664.3,322.8 664.3,320.9 665.8,320.9 665.8,322.9 667.3,322.9 667.3,322.4 668.8,322.4 668.8,323.1 670.3,323.1 670.3,323.2 671.8,323.2 671.8,321.9 673.3,321.9 673.3,322.2 674.8,322.2 674.8,322.8 676.3,322.8 676.3,322.2 677.8,322.2 677.8,322.0 679.3,322.0 679.3,321.7 680.8,321.7 680.8,322.7 682.3,322.7 682.3,322.2 683.8,322.2 683.8,322.9 685.3,322.9 685.3,321.4 686.8,321.4 686.8,322.7 688.3,322.7 688.3,322.3 689.8,322.3 689.8,323.1 691.3,323.1 691.3,322.7 692.8,322.7 692.8,322.8 694.3,322.8 694.3,320.8 695.8,320.8 695.8,323.1 697.3,323.1 697.3,322.7 698.8,322.7 698.8,321.2 700.3,321.2 700.3,322.6 701.8,322.6 701.8,323.0 703.3,323.0 703.3,323.0 704.8,323.0 704.8,323.2 706.3,323.2 706.3,323.1 707.8,323.1 707.8,322.4 709.3,322.4 709.3,322.7 710.8,322.7 710.8,322.7 712.3,322.7 712.3,323.0 713.8,323.0 713.8,322.7 715.3,322.7 715.3,321.8 716.8,321.8 716.8,322.5 718.3,322.5 718.3,323.2 719.8,323.2 719.8,323.2 721.3,323.2 721.3,323.2 722.8,323.2 722.8,322.7 724.3,322.7 724.3,323.0 725.8,323.0 725.8,323.2 727.3,323.2 727.3,322.1 728.8,322.1 728.8,322.8 730.3,322.8 730.3,323.0 731.8,323.0 731.8,322.4 733.3,322.4 733.3,323.2 734.8,323.2 734.8,323.0 736.3,323.0 736.3,323.2 737.8,323.2 737.8,322.7 739.3,322.7 739.3,323.2 740.8,323.2 740.8,322.9 742.3,322.9 742.3,322.4 743.8,322.4 743.8,323.0 745.3,323.0 745.3,322.7 746.8,322.7 746.8,323.0 748.3,323.0 748.3,323.1 749.8,323.1 749.8,323.0 751.3,323.0 751.3,320.9 752.8,320.9 752.8,322.8 754.3,322.8 754.3,319.4 755.8,319.4 755.8,322.4 757.3,322.4 757.3,322.2 758.8,322.2 758.8,322.4 760.3,322.4 760.3,322.6 761.8,322.6 761.8,323.1 763.3,323.1 763.3,323.2 764.8,323.2 764.8,322.3 766.3,322.3 766.3,323.2 767.8,323.2 767.8,322.6 769.3,322.6 769.3,322.7 770.8,322.7 770.8,322.5 772.3,322.5 772.3,322.1 773.8,322.1 773.8,323.0 775.3,323.0 775.3,322.6 776.8,322.6 776.8,322.7 778.3,322.7 778.3,322.8 779.8,322.8 779.8,323.2 781.3,323.2 781.3,321.8 782.8,321.8 782.8,322.5 784.3,322.5 784.3,323.2 785.8,323.2 785.8,323.1 787.3,323.1 787.3,322.2 788.8,322.2 788.8,322.7 790.3,322.7 790.3,322.0 791.8,322.0 791.8,322.7 793.3,322.7 793.3,322.8 794.8,322.8 794.8,322.6 796.3,322.6 796.3,321.8 797.8,321.8 797.8,323.0 799.3,323.0 799.3,322.6 800.8,322.6 800.8,320.5 802.3,320.5 802.3,322.0 803.8,322.0 803.8,322.6 805.3,322.6 805.3,322.8 806.8,322.8 806.8,322.8 808.3,322.8 808.3,320.7 809.8,320.7 809.8,321.8 811.3,321.8 811.3,322.7 812.8,322.7 812.8,323.1 814.3,323.1 814.3,322.8 815.8,322.8 815.8,322.9 817.3,322.9 817.3,322.9 818.8,322.9 818.8,322.4 820.3,322.4 820.3,323.1 821.8,323.1 821.8,321.1 823.3,321.1 823.3,322.4 824.8,322.4 824.8,323.1 826.3,323.1 826.3,322.9 827.8,322.9 827.8,322.3 829.3,322.3 829.3,322.9 830.8,322.9 830.8,323.2 832.3,323.2 832.3,323.2 833.8,323.2 833.8,322.9 835.3,322.9 835.3,322.8 836.8,322.8 836.8,323.2 838.3,323.2 838.3,322.7 839.8,322.7 839.8,323.0 841.3,323.0 841.3,323.0 842.8,323.0 842.8,321.9 844.3,321.9 844.3,322.6 845.8,322.6 845.8,323.0 847.3,323.0 847.3,322.6 848.8,322.6 848.8,323.0 850.3,323.0 850.3,322.9 851.8,322.9 851.8,321.7 853.3,321.7 853.3,322.2 854.8,322.2 854.8,322.9 856.3,322.9 856.3,323.1 857.8,323.1 857.8,322.9 859.3,322.9 859.3,323.0 860.8,323.0 860.8,323.0 862.3,323.0 862.3,321.9 863.8,321.9 863.8,323.1 865.3,323.1 865.3,323.1 866.8,323.1 866.8,323.1 868.3,323.1 868.3,322.3 869.8,322.3 869.8,323.0 871.3,323.0 871.3,322.9 872.8,322.9 872.8,323.2 874.3,323.2 874.3,322.4 875.8,322.4 875.8,323.2 877.3,323.2 877.3,322.6 878.8,322.6 878.8,322.0 880.3,322.0 880.3,322.4 881.8,322.4 881.8,322.7 883.3,322.7 883.3,323.0 884.8,323.0 884.8,322.3 886.3,322.3 886.3,322.5 887.8,322.5 887.8,323.0 889.3,323.0 889.3,323.0 890.8,323.0 890.8,322.9 892.3,322.9 892.3,322.9 893.8,322.9 893.8,320.0 895.3,320.0 895.3,322.6 896.8,322.6 896.8,322.9 898.3,322.9 898.3,320.1 899.8,320.1 899.8,323.0 901.3,323.0 901.3,322.5 902.8,322.5 902.8,322.8 904.3,322.8 904.3,322.3 905.8,322.3 905.8,322.9 907.3,322.9 907.3,322.4 908.8,322.4 908.8,323.0 910.3,323.0 910.3,322.2 911.8,322.2 911.8,322.3 913.3,322.3 913.3,322.9 914.8,322.9 914.8,328.9 913.3,328.9 913.3,329.0 911.8,329.0 911.8,329.1 910.3,329.1 910.3,329.2 908.8,329.2 908.8,328.9 907.3,328.9 907.3,328.9 905.8,328.9 905.8,329.5 904.3,329.5 904.3,329.7 902.8,329.7 902.8,329.0 901.3,329.0 901.3,328.9 899.8,328.9 899.8,329.2 898.3,329.2 898.3,329.2 896.8,329.2 896.8,329.0 895.3,329.0 895.3,329.7 893.8,329.7 893.8,329.1 892.3,329.1 892.3,329.4 890.8,329.4 890.8,329.1 889.3,329.1 889.3,329.3 887.8,329.3 887.8,330.8 886.3,330.8 886.3,329.6 884.8,329.6 884.8,330.3 883.3,330.3 883.3,329.3 881.8,329.3 881.8,329.9 880.3,329.9 880.3,329.7 878.8,329.7 878.8,332.6 877.3,332.6 877.3,329.4 875.8,329.4 875.8,329.9 874.3,329.9 874.3,329.3 872.8,329.3 872.8,328.9 871.3,328.9 871.3,329.9 869.8,329.9 869.8,329.1 868.3,329.1 868.3,330.3 866.8,330.3 866.8,330.7 865.3,330.7 865.3,329.5 863.8,329.5 863.8,329.1 862.3,329.1 862.3,329.0 860.8,329.0 860.8,328.9 859.3,328.9 859.3,328.9 857.8,328.9 857.8,329.1 856.3,329.1 856.3,329.0 854.8,329.0 854.8,332.0 853.3,332.0 853.3,329.5 851.8,329.5 851.8,330.0 850.3,330.0 850.3,329.2 848.8,329.2 848.8,329.1 847.3,329.1 847.3,329.6 845.8,329.6 845.8,329.4 844.3,329.4 844.3,329.4 842.8,329.4 842.8,328.9 841.3,328.9 841.3,331.6 839.8,331.6 839.8,329.8 838.3,329.8 838.3,329.2 836.8,329.2 836.8,329.1 835.3,329.1 835.3,329.8 833.8,329.8 833.8,329.0 832.3,329.0 832.3,329.3 830.8,329.3 830.8,329.7 829.3,329.7 829.3,329.4 827.8,329.4 827.8,330.0 826.3,330.0 826.3,329.1 824.8,329.1 824.8,329.5 823.3,329.5 823.3,329.2 821.8,329.2 821.8,329.4 820.3,329.4 820.3,329.6 818.8,329.6 818.8,328.9 817.3,328.9 817.3,329.5 815.8,329.5 815.8,328.9 814.3,328.9 814.3,328.8 812.8,328.8 812.8,328.8 811.3,328.8 811.3,329.1 809.8,329.1 809.8,329.0 808.3,329.0 808.3,329.7 806.8,329.7 806.8,329.9 805.3,329.9 805.3,329.6 803.8,329.6 803.8,330.1 802.3,330.1 802.3,329.5 800.8,329.5 800.8,329.1 799.3,329.1 799.3,328.9 797.8,328.9 797.8,329.3 796.3,329.3 796.3,329.8 794.8,329.8 794.8,329.1 793.3,329.1 793.3,328.9 791.8,328.9 791.8,329.1 790.3,329.1 790.3,329.8 788.8,329.8 788.8,330.9 787.3,330.9 787.3,329.0 785.8,329.0 785.8,329.3 784.3,329.3 784.3,329.3 782.8,329.3 782.8,329.9 781.3,329.9 781.3,329.8 779.8,329.8 779.8,329.8 778.3,329.8 778.3,329.3 776.8,329.3 776.8,328.9 775.3,328.9 775.3,328.9 773.8,328.9 773.8,330.2 772.3,330.2 772.3,329.0 770.8,329.0 770.8,329.0 769.3,329.0 769.3,329.4 767.8,329.4 767.8,329.2 766.3,329.2 766.3,329.1 764.8,329.1 764.8,328.8 763.3,328.8 763.3,328.9 761.8,328.9 761.8,328.9 760.3,328.9 760.3,331.4 758.8,331.4 758.8,328.8 757.3,328.8 757.3,328.9 755.8,328.9 755.8,329.4 754.3,329.4 754.3,329.9 752.8,329.9 752.8,329.0 751.3,329.0 751.3,329.3 749.8,329.3 749.8,330.2 748.3,330.2 748.3,329.1 746.8,329.1 746.8,328.9 745.3,328.9 745.3,328.8 743.8,328.8 743.8,331.2 742.3,331.2 742.3,329.8 740.8,329.8 740.8,329.1 739.3,329.1 739.3,329.1 737.8,329.1 737.8,329.2 736.3,329.2 736.3,329.1 734.8,329.1 734.8,329.7 733.3,329.7 733.3,329.1 731.8,329.1 731.8,329.0 730.3,329.0 730.3,328.9 728.8,328.9 728.8,329.1 727.3,329.1 727.3,329.0 725.8,329.0 725.8,329.0 724.3,329.0 724.3,329.2 722.8,329.2 722.8,329.3 721.3,329.3 721.3,330.0 719.8,330.0 719.8,329.5 718.3,329.5 718.3,329.6 716.8,329.6 716.8,328.9 715.3,328.9 715.3,329.5 713.8,329.5 713.8,329.0 712.3,329.0 712.3,329.6 710.8,329.6 710.8,328.8 709.3,328.8 709.3,329.8 707.8,329.8 707.8,329.0 706.3,329.0 706.3,329.1 704.8,329.1 704.8,329.5 703.3,329.5 703.3,330.0 701.8,330.0 701.8,329.3 700.3,329.3 700.3,328.9 698.8,328.9 698.8,329.6 697.3,329.6 697.3,330.6 695.8,330.6 695.8,329.3 694.3,329.3 694.3,329.8 692.8,329.8 692.8,330.9 691.3,330.9 691.3,330.9 689.8,330.9 689.8,329.4 688.3,329.4 688.3,329.5 686.8,329.5 686.8,329.2 685.3,329.2 685.3,329.3 683.8,329.3 683.8,329.6 682.3,329.6 682.3,329.1 680.8,329.1 680.8,329.5 679.3,329.5 679.3,330.7 677.8,330.7 677.8,328.9 676.3,328.9 676.3,329.3 674.8,329.3 674.8,329.2 673.3,329.2 673.3,329.4 671.8,329.4 671.8,329.0 670.3,329.0 670.3,330.0 668.8,330.0 668.8,329.3 667.3,329.3 667.3,329.7 665.8,329.7 665.8,329.0 664.3,329.0 664.3,329.9 662.8,329.9 662.8,329.9 661.3,329.9 661.3,329.0 659.8,329.0 659.8,329.5 658.3,329.5 658.3,329.5 656.8,329.5 656.8,332.1 655.3,332.1 655.3,331.6 653.8,331.6 653.8,329.2 652.3,329.2 652.3,332.9 650.8,332.9 650.8,329.2 649.3,329.2 649.3,329.9 647.8,329.9 647.8,331.6 646.3,331.6 646.3,329.8 644.8,329.8 644.8,329.0 643.3,329.0 643.3,329.7 641.8,329.7 641.8,329.5 640.3,329.5 640.3,328.9 638.8,328.9 638.8,329.5 637.3,329.5 637.3,329.8 635.8,329.8 635.8,329.0 634.3,329.0 634.3,329.6 632.8,329.6 632.8,329.1 631.3,329.1 631.3,329.2 629.8,329.2 629.8,328.9 628.3,328.9 628.3,329.1 626.8,329.1 626.8,328.8 625.3,328.8 625.3,329.1 623.8,329.1 623.8,331.5 622.3,331.5 622.3,328.9 620.8,328.9 620.8,329.0 619.3,329.0 619.3,329.1 617.8,329.1 617.8,329.0 616.3,329.0 616.3,329.2 614.8,329.2 614.8,329.0 613.3,329.0 613.3,330.0 611.8,330.0 611.8,331.7 610.3,331.7 610.3,329.2 608.8,329.2 608.8,329.0 607.3,329.0 607.3,329.3 605.8,329.3 605.8,329.2 604.3,329.2 604.3,329.8 602.8,329.8 602.8,329.9 601.3,329.9 601.3,329.2 599.8,329.2 599.8,329.1 598.3,329.1 598.3,328.8 596.8,328.8 596.8,328.8 595.3,328.8 595.3,328.9 593.8,328.9 593.8,329.6 592.3,329.6 592.3,328.9 590.8,328.9 590.8,332.4 589.3,332.4 589.3,329.0 587.8,329.0 587.8,329.8 586.3,329.8 586.3,329.0 584.8,329.0 584.8,329.0 583.3,329.0 583.3,328.9 581.8,328.9 581.8,329.6 580.3,329.6 580.3,329.4 578.8,329.4 578.8,329.3 577.3,329.3 577.3,329.2 575.8,329.2 575.8,329.1 574.3,329.1 574.3,329.5 572.8,329.5 572.8,329.8 571.3,329.8 571.3,329.8 569.8,329.8 569.8,329.1 568.3,329.1 568.3,329.2 566.8,329.2 566.8,329.0 565.3,329.0 565.3,329.4 563.8,329.4 563.8,329.6 562.3,329.6 562.3,329.8 560.8,329.8 560.8,329.0 559.3,329.0 559.3,329.1 557.8,329.1 557.8,329.2 556.3,329.2 556.3,329.0 554.8,329.0 554.8,329.1 553.3,329.1 553.3,329.8 551.8,329.8 551.8,329.5 550.3,329.5 550.3,329.0 548.8,329.0 548.8,329.4 547.3,329.4 547.3,329.2 545.8,329.2 545.8,330.0 544.3,330.0 544.3,328.9 542.8,328.9 542.8,330.4 541.3,330.4 541.3,330.0 539.8,330.0 539.8,330.8 538.3,330.8 538.3,329.4 536.8,329.4 536.8,329.4 535.3,329.4 535.3,329.8 533.8,329.8 533.8,329.8 532.3,329.8 532.3,329.0 530.8,329.0 530.8,329.2 529.3,329.2 529.3,328.9 527.8,328.9 527.8,329.2 526.3,329.2 526.3,330.0 524.8,330.0 524.8,329.1 523.3,329.1 523.3,328.8 521.8,328.8 521.8,330.2 520.3,330.2 520.3,329.6 518.8,329.6 518.8,329.3 517.3,329.3 517.3,329.4 515.8,329.4 515.8,329.3 514.3,329.3 514.3,329.3 512.8,329.3 512.8,328.8 511.3,328.8 511.3,330.0 509.8,330.0 509.8,328.8 508.3,328.8 508.3,329.4 506.8,329.4 506.8,330.5 505.3,330.5 505.3,329.5 503.8,329.5 503.8,329.5 502.3,329.5 502.3,329.2 500.8,329.2 500.8,329.2 499.3,329.2 499.3,329.5 497.8,329.5 497.8,330.1 496.3,330.1 496.3,329.3 494.8,329.3 494.8,329.4 493.3,329.4 493.3,330.0 491.8,330.0 491.8,329.4 490.3,329.4 490.3,329.5 488.8,329.5 488.8,329.3 487.3,329.3 487.3,329.1 485.8,329.1 485.8,330.2 484.3,330.2 484.3,329.7 482.8,329.7 482.8,329.4 481.3,329.4 481.3,329.8 479.8,329.8 479.8,329.4 478.3,329.4 478.3,329.8 476.8,329.8 476.8,329.4 475.3,329.4 475.3,329.6 473.8,329.6 473.8,329.4 472.3,329.4 472.3,329.3 470.8,329.3 470.8,329.1 469.3,329.1 469.3,328.9 467.8,328.9 467.8,329.9 466.3,329.9 466.3,329.0 464.8,329.0 464.8,329.0 463.3,329.0 463.3,329.7 461.8,329.7 461.8,330.2 460.3,330.2 460.3,329.3 458.8,329.3 458.8,329.3 457.3,329.3 457.3,329.0 455.8,329.0 455.8,330.2 454.3,330.2 454.3,329.5 452.8,329.5 452.8,329.5 451.3,329.5 451.3,328.8 449.8,328.8 449.8,329.1 448.3,329.1 448.3,330.0 446.8,330.0 446.8,329.2 445.3,329.2 445.3,329.5 443.8,329.5 443.8,329.0 442.3,329.0 442.3,329.2 440.8,329.2 440.8,329.1 439.3,329.1 439.3,330.0 437.8,330.0 437.8,329.2 436.3,329.2 436.3,329.0 434.8,329.0 434.8,329.6 433.3,329.6 433.3,328.9 431.8,328.9 431.8,329.2 430.3,329.2 430.3,329.8 428.8,329.8 428.8,328.8 427.3,328.8 427.3,329.7 425.8,329.7 425.8,329.1 424.3,329.1 424.3,329.2 422.8,329.2 422.8,332.4 421.3,332.4 421.3,329.1 419.8,329.1 419.8,329.1 418.3,329.1 418.3,329.1 416.8,329.1 416.8,331.8 415.3,331.8 415.3,329.0 413.8,329.0 413.8,329.1 412.3,329.1 412.3,330.1 410.8,330.1 410.8,328.8 409.3,328.8 409.3,330.2 407.8,330.2 407.8,329.2 406.3,329.2 406.3,329.0 404.8,329.0 404.8,329.2 403.3,329.2 403.3,329.4 401.8,329.4 401.8,329.3 400.3,329.3 400.3,328.9 398.8,328.9 398.8,329.7 397.3,329.7 397.3,329.4 395.8,329.4 395.8,331.3 394.3,331.3 394.3,329.0 392.8,329.0 392.8,329.5 391.3,329.5 391.3,329.3 389.8,329.3 389.8,332.3 388.3,332.3 388.3,330.0 386.8,330.0 386.8,328.8 385.3,328.8 385.3,329.7 383.8,329.7 383.8,329.4 382.3,329.4 382.3,330.0 380.8,330.0 380.8,328.9 379.3,328.9 379.3,328.9 377.8,328.9 377.8,329.0 376.3,329.0 376.3,329.0 374.8,329.0 374.8,331.0 373.3,331.0 373.3,329.3 371.8,329.3 371.8,329.5 370.3,329.5 370.3,329.6 368.8,329.6 368.8,329.8 367.3,329.8 367.3,329.6 365.8,329.6 365.8,331.6 364.3,331.6 364.3,329.8 362.8,329.8 362.8,329.3 361.3,329.3 361.3,329.0 359.8,329.0 359.8,329.4 358.3,329.4 358.3,329.4 356.8,329.4 356.8,329.9 355.3,329.9 355.3,328.8 353.8,328.8 353.8,328.9 352.3,328.9 352.3,329.1 350.8,329.1 350.8,329.9 349.3,329.9 349.3,331.9 347.8,331.9 347.8,329.9 346.3,329.9 346.3,328.9 344.8,328.9 344.8,329.2 343.3,329.2 343.3,329.0 341.8,329.0 341.8,329.8 340.3,329.8 340.3,329.4 338.8,329.4 338.8,329.5 337.3,329.5 337.3,329.8 335.8,329.8 335.8,329.5 334.3,329.5 334.3,331.5 332.8,331.5 332.8,329.1 331.3,329.1 331.3,329.7 329.8,329.7 329.8,329.2 328.3,329.2 328.3,328.8 326.8,328.8 326.8,329.3 325.3,329.3 325.3,329.5 323.8,329.5 323.8,329.0 322.3,329.0 322.3,329.5 320.8,329.5 320.8,331.7 319.3,331.7 319.3,331.3 317.8,331.3 317.8,329.1 316.3,329.1 316.3,328.8 314.8,328.8 314.8,329.6 313.3,329.6 313.3,329.0 311.8,329.0 311.8,329.0 310.3,329.0 310.3,328.9 308.8,328.9 308.8,329.0 307.3,329.0 307.3,328.8 305.8,328.8 305.8,330.1 304.3,330.1 304.3,329.0 302.8,329.0 302.8,328.9 301.3,328.9 301.3,328.9 299.8,328.9 299.8,329.1 298.3,329.1 298.3,330.2 296.8,330.2 296.8,329.2 295.3,329.2 295.3,328.9 293.8,328.9 293.8,330.1 292.3,330.1 292.3,330.0 290.8,330.0 290.8,330.9 289.3,330.9 289.3,329.3 287.8,329.3 287.8,329.3 286.3,329.3 286.3,329.6 284.8,329.6 284.8,331.5 283.3,331.5 283.3,329.0 281.8,329.0 281.8,329.8 280.3,329.8 280.3,330.8 278.8,330.8 278.8,332.9 277.3,332.9 277.3,329.0 275.8,329.0 275.8,329.1 274.3,329.1 274.3,331.2 272.8,331.2 272.8,329.8 271.3,329.8 271.3,331.0 269.8,331.0 269.8,330.7 268.3,330.7 268.3,330.0 266.8,330.0 266.8,329.2 265.3,329.2 265.3,329.0 263.8,329.0 263.8,329.1 262.3,329.1 262.3,329.1 260.8,329.1 260.8,328.8 259.3,328.8 259.3,328.8 257.8,328.8 257.8,329.5 256.3,329.5 256.3,331.3 254.8,331.3 254.8,329.8 253.3,329.8 253.3,330.0 251.8,330.0 251.8,329.1 250.3,329.1 250.3,329.4 248.8,329.4 248.8,329.9 247.3,329.9 247.3,329.7 245.8,329.7 245.8,329.9 244.3,329.9 244.3,330.5 242.8,330.5 242.8,329.4 241.3,329.4 241.3,329.8 239.8,329.8 239.8,329.2 238.3,329.2 238.3,329.7 236.8,329.7 236.8,329.0 235.3,329.0 235.3,329.0 233.8,329.0 233.8,332.2 232.3,332.2 232.3,328.9 230.8,328.9 230.8,328.9 229.3,328.9 229.3,328.9 227.8,328.9 227.8,329.3 226.3,329.3 226.3,330.0 224.8,330.0 224.8,329.8 223.3,329.8 223.3,329.0 221.8,329.0 221.8,329.2 220.3,329.2 220.3,329.4 218.8,329.4 218.8,328.8 217.3,328.8 217.3,330.8 215.8,330.8 215.8,329.0 214.3,329.0 214.3,329.4 212.8,329.4 212.8,329.0 211.3,329.0 211.3,329.9 209.8,329.9 209.8,329.8 208.3,329.8 208.3,330.2 206.8,330.2 206.8,330.4 205.3,330.4 205.3,329.9 203.8,329.9 203.8,329.0 202.3,329.0 202.3,328.8 200.8,328.8 200.8,329.2 199.3,329.2 199.3,329.3 197.8,329.3 197.8,329.3 196.3,329.3 196.3,332.7 194.8,332.7 194.8,330.0 193.3,330.0 193.3,329.8 191.8,329.8 191.8,329.4 190.3,329.4 190.3,329.5 188.8,329.5 188.8,328.9 187.3,328.9 187.3,329.7 185.8,329.7 185.8,330.4 184.3,330.4 184.3,329.1 182.8,329.1 182.8,329.9 181.3,329.9 181.3,329.1 179.8,329.1 179.8,328.9 178.3,328.9 178.3,329.0 176.8,329.0 176.8,329.3 175.3,329.3 175.3,328.9 173.8,328.9 173.8,329.0 172.3,329.0 172.3,329.2 170.8,329.2 170.8,328.9 169.3,328.9 169.3,330.0 167.8,330.0 167.8,329.0 166.3,329.0 166.3,329.7 164.8,329.7 164.8,329.0 163.3,329.0 163.3,329.1 161.8,329.1 161.8,329.1 160.3,329.1 160.3,329.5 158.8,329.5 158.8,329.9 157.3,329.9 157.3,328.9 155.8,328.9 155.8,329.5 154.3,329.5 154.3,329.8 152.8,329.8 152.8,331.3 151.3,331.3 151.3,328.9 149.8,328.9 149.8,328.8 148.3,328.8 148.3,329.8 146.8,329.8 146.8,329.3 145.3,329.3 145.3,329.4 143.8,329.4 143.8,329.4 142.3,329.4 142.3,329.0 140.8,329.0 140.8,329.2 139.3,329.2 139.3,329.2 137.8,329.2 137.8,330.0 136.3,330.0 136.3,328.8 134.8,328.8 134.8,329.3 133.3,329.3 133.3,329.4 131.8,329.4 131.8,328.8 130.3,328.8 130.3,329.5 128.8,329.5 128.8,329.8 127.3,329.8 127.3,329.2 125.8,329.2 125.8,330.1 124.3,330.1 124.3,329.7 122.8,329.7 122.8,329.9 121.3,329.9 121.3,330.2 119.8,330.2 119.8,328.9 118.3,328.9 118.3,329.8 116.8,329.8 116.8,329.0 115.3,329.0 115.3,331.2 113.8,331.2 113.8,329.3 112.3,329.3 112.3,331.4 110.8,331.4 110.8,329.2 109.3,329.2 109.3,330.1 107.8,330.1 107.8,329.0 106.3,329.0 106.3,330.1 104.8,330.1 104.8,329.1 103.3,329.1 103.3,329.6 101.8,329.6 101.8,330.7 100.3,330.7 100.3,328.8 98.8,328.8 98.8,329.5 97.3,329.5 97.3,330.0 95.8,330.0 95.8,329.4 94.3,329.4 94.3,329.0 92.8,329.0 92.8,329.1 91.3,329.1 91.3,330.2 89.8,330.2 Z" stroke="none" stroke-width="0" fill="#00ff00" />
<path d="M128.9,325 L128.9,321.3 L130.4,321.3 L130.4,320.8 L131.9,320.8 L131.9,321.3 L133.4,321.3 L133.4,320.2 L134.9,320.2 L134.9,321.3 L136.4,321.3 L136.4,321.0 L137.9,321.0 L137.9,319.6 L139.4,319.6 L139.4,319.8 L140.9,319.8 L140.9,320.8 L142.4,320.8 L142.4,321.2 L143.9,321.2 L143.9,321.0 L145.4,321.0 L145.4,319.7 L146.9,319.7 L146.9,321.3 L148.4,321.3 L148.4,320.9 L149.9,320.9 L149.9,320.9 L151.4,320.9 L151.4,320.4 L152.9,320.4 L152.9,321.1 L154.4,321.1 L154.4,320.6 L155.9,320.6 L155.9,320.3 L156.0,320.3 L156.0,325 L156.0,396.2 L155.9,396.2 L155.9,397.9 L154.4,397.9 L154.4,398.4 L152.9,398.4 L152.9,397.6 L151.4,397.6 L151.4,396.2 L149.9,396.2 L149.9,396.4 L148.4,396.4 L148.4,396.9 L146.9,396.9 L146.9,397.4 L145.4,397.4 L145.4,396.9 L143.9,396.9 L143.9,396.3 L142.4,396.3 L142.4,398.4 L140.9,398.4 L140.9,397.8 L139.4,397.8 L139.4,398.1 L137.9,398.1 L137.9,396.3 L136.4,396.3 L136.4,396.4 L134.9,396.4 L134.9,398.6 L133.4,398.6 L133.4,396.2 L131.9,396.2 L131.9,398.4 L130.4,398.4 L130.4,397.8 L128.9,397.8 Z" stroke="none" stroke-width="0" fill="#00ff00" />
<path d="M171.0,325 L171.0,319.6 L172.5,319.6 L172.5,321.4 L174.0,321.4 L174.0,321.1 L175.5,321.1 L175.5,321.3 L177.0,321.3 L177.0,320.5 L178.5,320.5 L178.5,320.4 L180.0,320.4 L180.0,320.5 L181.5,320.5 L181.5,321.0 L183.0,321.0 L183.0,321.5 L184.5,321.5 L184.5,320.9 L186.0,320.9 L186.0,320.7 L187.5,320.7 L187.5,321.0 L189.0,321.0 L189.0,321.2 L190.5,321.2 L190.5,321.4 L192.0,321.4 L192.0,320.8 L193.5,320.8 L193.5,321.5 L195.0,321.5 L195.0,321.2 L196.5,321.2 L196.5,320.2 L198.0,320.2 L198.0,321.5 L199.5,321.5 L199.5,320.9 L199.6,320.9 L199.6,325 L199.6,396.9 L199.5,396.9 L199.5,396.3 L198.0,396.3 L198.0,398.1 L196.5,398.1 L196.5,397.6 L195.0,397.6 L195.0,396.6 L193.5,396.6 L193.5,397.6 L192.0,397.6 L192.0,396.5 L190.5,396.5 L190.5,398.0 L189.0,398.0 L189.0,396.6 L187.5,396.6 L187.5,397.9 L186.0,397.9 L186.0,396.5 L184.5,396.5 L184.5,398.3 L183.0,398.3 L183.0,396.5 L181.5,396.5 L181.5,396.4 L180.0,396.4 L180.0,397.3 L178.5,397.3 L178.5,396.6 L177.0,396.6 L177.0,396.6 L175.5,396.6 L175.5,396.4 L174.0,396.4 L174.0,396.7 L172.5,396.7 L172.5,397.8 L171.0,397.8 Z" stroke="none" stroke-width="0" fill="#00ff00" />
<path d="M214.8,325 L214.8,320.9 L216.3,320.9 L216.3,320.8 L217.8,320.8 L217.8,319.7 L219.3,319.7 L219.3,319.4 L220.8,319.4 L220.8,320.8 L222.3,320.8 L222.3,320.3 L223.8,320.3 L223.8,321.5 L225.3,321.5 L225.3,321.0 L226.8,321.0 L226.8,321.1 L228.3,321.1 L228.3,320.8 L229.8,320.8 L229.8,321.0 L231.3,321.0 L231.3,321.0 L232.8,321.0 L232.8,321.2 L234.3,321.2 L234.3,321.0 L235.8,321.0 L235.8,321.0 L237.3,321.0 L237.3,321.2 L238.8,321.2 L238.8,321.1 L240.3,321.1 L240.3,320.6 L241.8,320.6 L241.8,321.1 L242.7,321.1 L242.7,325 L242.7,397.3 L241.8,397.3 L241.8,398.9 L240.3,398.9 L240.3,397.3 L238.8,397.3 L238.8,398.8 L237.3,398.8 L237.3,396.4 L235.8,396.4 L235.8,396.9 L234.3,396.9 L234.3,396.3 L232.8,396.3 L232.8,396.7 L231.3,396.7 L231.3,396.5 L229.8,396.5 L229.8,396.4 L228.3,396.4 L228.3,396.6 L226.8,396.6 L226.8,397.1 L225.3,397.1 L225.3,398.9 L223.8,398.9 L223.8,397.0 L222.3,397.0 L222.3,396.8 L220.8,396.8 L220.8,397.1 L219.3,397.1 L219.3,396.7 L217.8,396.7 L217.8,396.6 L216.3,396.6 L216.3,397.2 L214.8,397.2 Z" stroke="none" stroke-width="0" fill="#00ff00" />
<path d="M256.9,325 L256.9,320.6 L258.4,320.6 L258.4,320.2 L259.9,320.2 L259.9,321.4 L261.4,321.4 L261.4,321.5 L262.9,321.5 L262.9,320.7 L264.4,320.7 L264.4,320.5 L265.9,320.5 L265.9,320.8 L267.4,320.8 L267.4,320.6 L268.9,320.6 L268.9,320.8 L270.4,320.8 L270.4,321.1 L271.9,321.1 L271.9,320.9 L273.4,320.9 L273.4,321.2 L274.9,321.2 L274.9,320.4 L276.4,320.4 L276.4,321.1 L277.9,321.1 L277.9,321.3 L279.4,321.3 L279.4,319.6 L280.9,319.6 L280.9,321.0 L282.4,321.0 L282.4,320.9 L283.9,320.9 L283.9,320.7 L284.7,320.7 L284.7,325 L284.7,397.8 L283.9,397.8 L283.9,397.6 L282.4,397.6 L282.4,397.1 L280.9,397.1 L280.9,397.6 L279.4,397.6 L279.4,398.4 L277.9,398.4 L277.9,397.3 L276.4,397.3 L276.4,396.5 L274.9,396.5 L274.9,396.4 L273.4,396.4 L273.4,396.7 L271.9,396.7 L271.9,397.8 L270.4,397.8 L270.4,397.4 L268.9,397.4 L268.9,397.2 L267.4,397.2 L267.4,396.4 L265.9,396.4 L265.9,397.5 L264.4,397.5 L264.4,396.4 L262.9,396.4 L262.9,397.7 L261.4,397.7 L261.4,398.0 L259.9,398.0 L259.9,397.0 L258.4,397.0 L258.4,397.3 L256.9,397.3 Z" stroke="none" stroke-width="0" fill="#00ff00" />
<path d="M303.4,325 L303.4,320.5 L304.9,320.5 L304.9,321.0 L306.4,321.0 L306.4,320.8 L307.9,320.8 L307.9,321.4 L309.4,321.4 L309.4,320.7 L310.9,320.7 L310.9,320.8 L312.4,320.8 L312.4,321.4 L313.9,321.4 L313.9,320.9 L315.4,320.9 L315.4,321.0 L316.9,321.0 L316.9,320.9 L318.4,320.9 L318.4,320.3 L319.9,320.3 L319.9,320.2 L321.4,320.2 L321.4,320.9 L322.9,320.9 L322.9,321.3 L324.4,321.3 L324.4,320.8 L325.9,320.8 L325.9,320.2 L327.4,320.2 L327.4,320.8 L328.9,320.8 L328.9,320.5 L330.4,320.5 L330.4,321.0 L331.9,321.0 L331.9,321.4 L333.2,321.4 L333.2,325 L333.2,398.1 L331.9,398.1 L331.9,396.9 L330.4,396.9 L330.4,396.7 L328.9,396.7 L328.9,396.8 L327.4,396.8 L327.4,397.0 L325.9,397.0 L325.9,396.5 L324.4,396.5 L324.4,396.4 L322.9,396.4 L322.9,397.9 L321.4,397.9 L321.4,398.5 L319.9,398.5 L319.9,397.6 L318.4,397.6 L318.4,398.6 L316.9,398.6 L316.9,397.0 L315.4,397.0 L315.4,398.3 L313.9,398.3 L313.9,397.5 L312.4,397.5 L312.4,396.9 L310.9,396.9 L310.9,396.5 L309.4,396.5 L309.4,396.2 L307.9,396.2 L307.9,398.4 L306.4,398.4 L306.4,396.6 L304.9,396.6 L304.9,396.5 L303.4,396.5 Z" stroke="none" stroke-width="0" fill="#00ff00" />
<path d="M347.0,325 L347.0,320.6 L348.5,320.6 L348.5,320.5 L350.0,320.5 L350.0,319.7 L351.5,319.7 L351.5,320.2 L353.0,320.2 L353.0,321.2 L354.5,321.2 L354.5,321.4 L356.0,321.4 L356.0,321.4 L357.5,321.4 L357.5,321.4 L359.0,321.4 L359.0,321.2 L360.5,321.2 L360.5,320.4 L362.0,320.4 L362.0,321.1 L363.5,321.1 L363.5,321.2 L365.0,321.2 L365.0,321.0 L366.5,321.0 L366.5,320.5 L368.0,320.5 L368.0,320.5 L369.5,320.5 L369.5,319.6 L371.0,319.6 L371.0,320.1 L372.5,320.1 L372.5,319.8 L374.0,319.8 L374.0,325 L374.0,397.2 L372.5,397.2 L372.5,396.6 L371.0,396.6 L371.0,396.2 L369.5,396.2 L369.5,397.0 L368.0,397.0 L368.0,399.7 L366.5,399.7 L366.5,396.8 L365.0,396.8 L365.0,396.4 L363.5,396.4 L363.5,396.9 L362.0,396.9 L362.0,396.5 L360.5,396.5 L360.5,396.8 L359.0,396.8 L359.0,397.3 L357.5,397.3 L357.5,397.6 L356.0,397.6 L356.0,397.5 L354.5,397.5 L354.5,396.7 L353.0,396.7 L353.0,396.3 L351.5,396.3 L351.5,396.5 L350.0,396.5 L350.0,398.0 L348.5,398.0 L348.5,396.9 L347.0,396.9 Z" stroke="none" stroke-width="0" fill="#00ff00" />
<path d="M395.0,325 L395.0,320.7 L396.5,320.7 L396.5,321.1 L398.0,321.1 L398.0,320.7 L399.5,320.7 L399.5,320.8 L401.0,320.8 L401.0,321.1 L402.5,321.1 L402.5,320.8 L404.0,320.8 L404.0,320.0 L405.5,320.0 L405.5,320.9 L407.0,320.9 L407.0,320.6 L408.5,320.6 L408.5,321.0 L410.0,321.0 L410.0,321.2 L411.5,321.2 L411.5,321.1 L413.0,321.1 L413.0,320.6 L414.5,320.6 L414.5,320.7 L416.0,320.7 L416.0,320.1 L417.5,320.1 L417.5,321.5 L419.0,321.5 L419.0,321.3 L420.5,321.3 L420.5,320.6 L422.0,320.6 L422.0,320.1 L422.5,320.1 L422.5,325 L422.5,396.3 L422.0,396.3 L422.0,397.6 L420.5,397.6 L420.5,397.0 L419.0,397.0 L419.0,397.8 L417.5,397.8 L417.5,397.0 L416.0,397.0 L416.0,398.5 L414.5,398.5 L414.5,397.7 L413.0,397.7 L413.0,398.6 L411.5,398.6 L411.5,396.9 L410.0,396.9 L410.0,396.9 L408.5,396.9 L408.5,396.8 L407.0,396.8 L407.0,396.8 L405.5,396.8 L405.5,396.8 L404.0,396.8 L404.0,397.8 L402.5,397.8 L402.5,397.3 L401.0,397.3 L401.0,396.7 L399.5,396.7 L399.5,398.2 L398.0,398.2 L398.0,397.9 L396.5,397.9 L396.5,396.3 L395.0,396.3 Z" stroke="none" stroke-width="0" fill="#00ff00" />
<path d="M436.0,325 L436.0,320.9 L437.5,320.9 L437.5,320.3 L439.0,320.3 L439.0,321.4 L440.5,321.4 L440.5,320.4 L442.0,320.4 L442.0,320.6 L443.5,320.6 L443.5,320.2 L445.0,320.2 L445.0,320.9 L446.5,320.9 L446.5,321.5 L448.0,321.5 L448.0,321.2 L449.5,321.2 L449.5,321.3 L451.0,321.3 L451.0,320.3 L452.5,320.3 L452.5,320.9 L454.0,320.9 L454.0,320.7 L455.5,320.7 L455.5,320.4 L457.0,320.4 L457.0,319.9 L458.5,319.9 L458.5,320.7 L460.0,320.7 L460.0,320.8 L461.5,320.8 L461.5,321.1 L463.0,321.1 L463.0,321.2 L463.7,321.2 L463.7,325 L463.7,396.4 L463.0,396.4 L463.0,396.3 L461.5,396.3 L461.5,396.7 L460.0,396.7 L460.0,396.3 L458.5,396.3 L458.5,396.7 L457.0,396.7 L457.0,397.0 L455.5,397.0 L455.5,397.1 L454.0,397.1 L454.0,396.3 L452.5,396.3 L452.5,397.0 L451.0,397.0 L451.0,396.4 L449.5,396.4 L449.5,397.8 L448.0,397.8 L448.0,397.2 L446.5,397.2 L446.5,396.9 L445.0,396.9 L445.0,396.3 L443.5,396.3 L443.5,397.0 L442.0,397.0 L442.0,396.7 L440.5,396.7 L440.5,396.9 L439.0,396.9 L439.0,397.9 L437.5,397.9 L437.5,398.0 L436.0,398.0 Z" stroke="none" stroke-width="0" fill="#00ff00" />
<path d="M482.0,325 L482.0,318.9 L483.5,318.9 L483.5,320.5 L485.0,320.5 L485.0,320.6 L486.5,320.6 L486.5,321.0 L488.0,321.0 L488.0,321.0 L489.5,321.0 L489.5,320.2 L491.0,320.2 L491.0,320.0 L492.5,320.0 L492.5,321.1 L494.0,321.1 L494.0,319.9 L495.5,319.9 L495.5,320.4 L497.0,320.4 L497.0,321.1 L498.5,321.1 L498.5,321.4 L500.0,321.4 L500.0,321.5 L501.5,321.5 L501.5,321.1 L503.0,321.1 L503.0,321.4 L504.5,321.4 L504.5,321.3 L506.0,321.3 L506.0,320.5 L507.5,320.5 L507.5,321.4 L509.0,321.4 L509.0,321.5 L510.0,321.5 L510.0,325 L510.0,396.8 L509.0,396.8 L509.0,396.9 L507.5,396.9 L507.5,397.0 L506.0,397.0 L506.0,396.2 L504.5,396.2 L504.5,398.2 L503.0,398.2 L503.0,397.4 L501.5,397.4 L501.5,396.5 L500.0,396.5 L500.0,398.0 L498.5,398.0 L498.5,397.3 L497.0,397.3 L497.0,396.4 L495.5,396.4 L495.5,396.4 L494.0,396.4 L494.0,397.4 L492.5,397.4 L492.5,396.5 L491.0,396.5 L491.0,396.5 L489.5,396.5 L489.5,397.9 L488.0,397.9 L488.0,397.6 L486.5,397.6 L486.5,398.3 L485.0,398.3 L485.0,396.4 L483.5,396.4 L483.5,396.7 L482.0,396.7 Z" stroke="none" stroke-width="0" fill="#00ff00" />
<path d="M525.0,325 L525.0,321.3 L526.5,321.3 L526.5,321.1 L528.0,321.1 L528.0,321.1 L529.5,321.1 L529.5,320.6 L531.0,320.6 L531.0,321.3 L532.5,321.3 L532.5,321.1 L534.0,321.1 L534.0,320.7 L535.5,320.7 L535.5,321.1 L537.0,321.1 L537.0,321.4 L538.5,321.4 L538.5,320.9 L540.0,320.9 L540.0,321.0 L541.5,321.0 L541.5,321.2 L543.0,321.2 L543.0,320.6 L544.5,320.6 L544.5,320.9 L546.0,320.9 L546.0,320.1 L547.5,320.1 L547.5,321.3 L549.0,321.3 L549.0,320.8 L550.5,320.8 L550.5,320.8 L551.8,320.8 L551.8,325 L551.8,396.9 L550.5,396.9 L550.5,397.1 L549.0,397.1 L549.0,398.2 L547.5,398.2 L547.5,397.6 L546.0,397.6 L546.0,396.8 L544.5,396.8 L544.5,397.8 L543.0,397.8 L543.0,396.2 L541.5,396.2 L541.5,397.0 L540.0,397.0 L540.0,398.2 L538.5,398.2 L538.5,396.7 L537.0,396.7 L537.0,398.6 L535.5,398.6 L535.5,396.8 L534.0,396.8 L534.0,397.1 L532.5,397.1 L532.5,397.6 L531.0,397.6 L531.0,397.3 L529.5,397.3 L529.5,396.6 L528.0,396.6 L528.0,396.5 L526.5,396.5 L526.5,396.7 L525.0,396.7 Z" stroke="none" stroke-width="0" fill="#00ff00" />
<path d="M568.0,325 L568.0,320.6 L569.5,320.6 L569.5,321.3 L571.0,321.3 L571.0,321.4 L572.5,321.4 L572.5,320.7 L574.0,320.7 L574.0,320.2 L575.5,320.2 L575.5,321.0 L577.0,321.0 L577.0,321.1 L578.5,321.1 L578.5,321.2 L580.0,321.2 L580.0,320.9 L581.5,320.9 L581.5,321.0 L583.0,321.0 L583.0,319.3 L584.5,319.3 L584.5,320.9 L586.0,320.9 L586.0,320.8 L587.5,320.8 L587.5,320.7 L589.0,320.7 L589.0,320.7 L590.5,320.7 L590.5,321.3 L592.0,321.3 L592.0,320.8 L593.5,320.8 L593.5,321.3 L595.0,321.3 L595.0,325 L595.0,396.9 L593.5,396.9 L593.5,396.3 L592.0,396.3 L592.0,396.8 L590.5,396.8 L590.5,396.8 L589.0,396.8 L589.0,397.2 L587.5,397.2 L587.5,397.2 L586.0,397.2 L586.0,397.8 L584.5,397.8 L584.5,396.7 L583.0,396.7 L583.0,397.9 L581.5,397.9 L581.5,398.2 L580.0,398.2 L580.0,397.1 L578.5,397.1 L578.5,397.2 L577.0,397.2 L577.0,397.3 L575.5,397.3 L575.5,397.4 L574.0,397.4 L574.0,397.2 L572.5,397.2 L572.5,397.4 L571.0,397.4 L571.0,397.1 L569.5,397.1 L569.5,399.0 L568.0,399.0 Z" stroke="none" stroke-width="0" fill="#00ff00" />
<path d="M611.3,325 L611.3,321.4 L612.8,321.4 L612.8,319.4 L614.3,319.4 L614.3,321.4 L615.8,321.4 L615.8,321.5 L617.3,321.5 L617.3,321.0 L618.8,321.0 L618.8,321.3 L620.3,321.3 L620.3,321.1 L621.8,321.1 L621.8,321.5 L623.3,321.5 L623.3,320.9 L624.8,320.9 L624.8,320.5 L626.3,320.5 L626.3,320.8 L627.8,320.8 L627.8,319.8 L629.3,319.8 L629.3,320.3 L630.8,320.3 L630.8,321.4 L632.3,321.4 L632.3,321.5 L633.8,321.5 L633.8,321.5 L635.3,321.5 L635.3,320.7 L636.8,320.7 L636.8,321.2 L638.3,321.2 L638.3,320.8 L639.0,320.8 L639.0,325 L639.0,396.4 L638.3,396.4 L638.3,396.3 L636.8,396.3 L636.8,396.3 L635.3,396.3 L635.3,398.2 L633.8,398.2 L633.8,397.4 L632.3,397.4 L632.3,397.9 L630.8,397.9 L630.8,397.3 L629.3,397.3 L629.3,396.9 L627.8,396.9 L627.8,396.3 L626.3,396.3 L626.3,397.1 L624.8,397.1 L624.8,398.1 L623.3,398.1 L623.3,398.2 L621.8,398.2 L621.8,397.7 L620.3,397.7 L620.3,396.4 L618.8,396.4 L618.8,398.5 L617.3,398.5 L617.3,397.2 L615.8,397.2 L615.8,396.3 L614.3,396.3 L614.3,397.3 L612.8,397.3 L612.8,396.4 L611.3,396.4 Z" stroke="none" stroke-width="0" fill="#00ff00" />
<path d="M653.5,325 L653.5,321.4 L655.0,321.4 L655.0,321.2 L656.5,321.2 L656.5,320.4 L658.0,320.4 L658.0,319.5 L659.5,319.5 L659.5,320.5 L661.0,320.5 L661.0,320.7 L662.5,320.7 L662.5,321.4 L664.0,321.4 L664.0,321.1 L665.5,321.1 L665.5,320.7 L667.0,320.7 L667.0,320.6 L668.5,320.6 L668.5,319.1 L670.0,319.1 L670.0,320.8 L671.5,320.8 L671.5,320.4 L673.0,320.4 L673.0,321.5 L674.5,321.5 L674.5,321.2 L676.0,321.2 L676.0,321.1 L677.5,321.1 L677.5,321.3 L679.0,321.3 L679.0,320.5 L680.5,320.5 L680.5,320.4 L681.3,320.4 L681.3,325 L681.3,398.0 L680.5,398.0 L680.5,396.2 L679.0,396.2 L679.0,396.8 L677.5,396.8 L677.5,396.5 L676.0,396.5 L676.0,396.7 L674.5,396.7 L674.5,397.9 L673.0,397.9 L673.0,397.2 L671.5,397.2 L671.5,396.9 L670.0,396.9 L670.0,397.3 L668.5,397.3 L668.5,397.5 L667.0,397.5 L667.0,396.8 L665.5,396.8 L665.5,397.4 L664.0,397.4 L664.0,396.9 L662.5,396.9 L662.5,396.6 L661.0,396.6 L661.0,396.2 L659.5,396.2 L659.5,396.9 L658.0,396.9 L658.0,396.6 L656.5,396.6 L656.5,396.2 L655.0,396.2 L655.0,397.0 L653.5,397.0 Z" stroke="none" stroke-width="0" fill="#00ff00" />
<path d="M734.0,325 L734.0,321.2 L735.5,321.2 L735.5,321.0 L737.0,321.0 L737.0,320.7 L738.5,320.7 L738.5,321.0 L740.0,321.0 L740.0,320.9 L741.5,320.9 L741.5,321.0 L743.0,321.0 L743.0,321.4 L744.5,321.4 L744.5,320.9 L746.0,320.9 L746.0,320.8 L747.5,320.8 L747.5,320.2 L749.0,320.2 L749.0,320.6 L750.5,320.6 L750.5,321.2 L752.0,321.2 L752.0,320.5 L753.5,320.5 L753.5,321.0 L755.0,321.0 L755.0,321.4 L756.5,321.4 L756.5,321.2 L758.0,321.2 L758.0,320.9 L759.5,320.9 L759.5,321.1 L761.0,321.1 L761.0,320.5 L761.4,320.5 L761.4,325 L761.4,397.0 L761.0,397.0 L761.0,397.0 L759.5,397.0 L759.5,396.6 L758.0,396.6 L758.0,398.8 L756.5,398.8 L756.5,396.4 L755.0,396.4 L755.0,396.2 L753.5,396.2 L753.5,396.8 L752.0,396.8 L752.0,396.5 L750.5,396.5 L750.5,397.1 L749.0,397.1 L749.0,397.7 L747.5,397.7 L747.5,397.1 L746.0,397.1 L746.0,396.8 L744.5,396.8 L744.5,396.5 L743.0,396.5 L743.0,396.7 L741.5,396.7 L741.5,396.4 L740.0,396.4 L740.0,397.1 L738.5,397.1 L738.5,397.5 L737.0,397.5 L737.0,397.1 L735.5,397.1 L735.5,397.5 L734.0,397.5 Z" stroke="none" stroke-width="0" fill="#00ff00" />
<path d="M778.0,325 L778.0,320.6 L779.5,320.6 L779.5,321.2 L781.0,321.2 L781.0,321.3 L782.5,321.3 L782.5,321.2 L784.0,321.2 L784.0,321.4 L785.5,321.4 L785.5,320.2 L787.0,320.2 L787.0,321.0 L788.5,321.0 L788.5,321.5 L790.0,321.5 L790.0,321.1 L791.5,321.1 L791.5,320.8 L793.0,320.8 L793.0,321.3 L794.5,321.3 L794.5,321.2 L796.0,321.2 L796.0,321.4 L797.5,321.4 L797.5,321.5 L799.0,321.5 L799.0,321.4 L800.5,321.4 L800.5,320.7 L802.0,320.7 L802.0,321.4 L803.5,321.4 L803.5,321.2 L805.0,321.2 L805.0,320.5 L806.5,320.5 L806.5,319.1 L808.0,319.1 L808.0,321.2 L808.4,321.2 L808.4,325 L808.4,396.9 L808.0,396.9 L808.0,396.6 L806.5,396.6 L806.5,396.9 L805.0,396.9 L805.0,397.6 L803.5,397.6 L803.5,397.2 L802.0,397.2 L802.0,396.8 L800.5,396.8 L800.5,396.5 L799.0,396.5 L799.0,397.4 L797.5,397.4 L797.5,396.8 L796.0,396.8 L796.0,398.7 L794.5,398.7 L794.5,396.3 L793.0,396.3 L793.0,397.3 L791.5,397.3 L791.5,397.0 L790.0,397.0 L790.0,396.9 L788.5,396.9 L788.5,396.3 L787.0,396.3 L787.0,396.8 L785.5,396.8 L785.5,397.3 L784.0,397.3 L784.0,396.5 L782.5,396.5 L782.5,397.1 L781.0,397.1 L781.0,398.0 L779.5,398.0 L779.5,397.0 L778.0,397.0 Z" stroke="none" stroke-width="0" fill="#00ff00" />
<path d="M821.4,325 L821.4,321.1 L822.9,321.1 L822.9,321.4 L824.4,321.4 L824.4,321.1 L825.9,321.1 L825.9,321.5 L827.4,321.5 L827.4,321.0 L828.9,321.0 L828.9,320.4 L830.4,320.4 L830.4,319.6 L831.9,319.6 L831.9,320.5 L833.4,320.5 L833.4,320.3 L834.9,320.3 L834.9,321.1 L836.4,321.1 L836.4,321.4 L837.9,321.4 L837.9,321.1 L839.4,321.1 L839.4,321.4 L840.9,321.4 L840.9,321.3 L842.4,321.3 L842.4,320.4 L843.9,320.4 L843.9,320.9 L845.4,320.9 L845.4,320.8 L846.9,320.8 L846.9,320.5 L848.4,320.5 L848.4,320.7 L849.2,320.7 L849.2,325 L849.2,397.5 L848.4,397.5 L848.4,396.7 L846.9,396.7 L846.9,399.2 L845.4,399.2 L845.4,396.3 L843.9,396.3 L843.9,396.2 L842.4,396.2 L842.4,397.7 L840.9,397.7 L840.9,397.2 L839.4,397.2 L839.4,397.2 L837.9,397.2 L837.9,397.4 L836.4,397.4 L836.4,397.4 L834.9,397.4 L834.9,398.0 L833.4,398.0 L833.4,396.3 L831.9,396.3 L831.9,396.7 L830.4,396.7 L830.4,397.4 L828.9,397.4 L828.9,397.3 L827.4,397.3 L827.4,396.5 L825.9,396.5 L825.9,396.2 L824.4,396.2 L824.4,397.6 L822.9,397.6 L822.9,398.0 L821.4,398.0 Z" stroke="none" stroke-width="0" fill="#00ff00" />
<path d="M89.8,525.8 91.3,525.8 91.3,525.8 92.8,525.8 92.8,525.5 94.3,525.5 94.3,525.8 95.8,525.8 95.8,526.1 97.3,526.1 97.3,525.7 98.8,525.7 98.8,525.9 100.3,525.9 100.3,526.5 101.8,526.5 101.8,525.7 103.3,525.7 103.3,526.2 104.8,526.2 104.8,526.4 106.3,526.4 106.3,525.6 107.8,525.6 107.8,526.5 109.3,526.5 109.3,525.7 110.8,525.7 110.8,524.2 112.3,524.2 112.3,524.9 113.8,524.9 113.8,525.3 115.3,525.3 115.3,526.2 116.8,526.2 116.8,525.2 118.3,525.2 118.3,525.9 119.8,525.9 119.8,526.3 121.3,526.3 121.3,525.7 122.8,525.7 122.8,526.1 124.3,526.1 124.3,525.8 125.8,525.8 125.8,525.7 127.3,525.7 127.3,526.6 128.8,526.6 128.8,526.6 130.3,526.6 130.3,526.5 131.8,526.5 131.8,526.6 133.3,526.6 133.3,525.8 134.8,525.8 134.8,526.2 136.3,526.2 136.3,525.9 137.8,525.9 137.8,526.6 139.3,526.6 139.3,526.5 140.8,526.5 140.8,526.5 142.3,526.5 142.3,525.8 143.8,525.8 143.8,526.4 145.3,526.4 145.3,526.6 146.8,526.6 146.8,520.0 148.3,520.0 148.3,523.0 149.8,523.0 149.8,525.9 151.3,525.9 151.3,526.1 152.8,526.1 152.8,525.3 154.3,525.3 154.3,526.1 155.8,526.1 155.8,526.6 157.3,526.6 157.3,525.6 158.8,525.6 158.8,525.8 160.3,525.8 160.3,525.8 161.8,525.8 161.8,525.9 163.3,525.9 163.3,526.5 164.8,526.5 164.8,523.2 166.3,523.2 166.3,526.1 167.8,526.1 167.8,526.5 169.3,526.5 169.3,521.9 170.8,521.9 170.8,525.8 172.3,525.8 172.3,526.3 173.8,526.3 173.8,525.4 175.3,525.4 175.3,526.5 176.8,526.5 176.8,526.7 178.3,526.7 178.3,521.4 179.8,521.4 179.8,525.1 181.3,525.1 181.3,525.9 182.8,525.9 182.8,524.9 184.3,524.9 184.3,526.3 185.8,526.3 185.8,524.4 187.3,524.4 187.3,526.3 188.8,526.3 188.8,524.8 190.3,524.8 190.3,525.0 191.8,525.0 191.8,526.1 193.3,526.1 193.3,525.4 194.8,525.4 194.8,525.0 196.3,525.0 196.3,525.9 197.8,525.9 197.8,526.7 199.3,526.7 199.3,526.2 200.8,526.2 200.8,526.5 202.3,526.5 202.3,526.0 203.8,526.0 203.8,526.5 205.3,526.5 205.3,525.4 206.8,525.4 206.8,526.5 208.3,526.5 208.3,526.5 209.8,526.5 209.8,525.7 211.3,525.7 211.3,526.6 212.8,526.6 212.8,526.1 214.3,526.1 214.3,525.5 215.8,525.5 215.8,526.4 217.3,526.4 217.3,525.6 218.8,525.6 218.8,526.1 220.3,526.1 220.3,526.3 221.8,526.3 221.8,526.3 223.3,526.3 223.3,518.2 224.8,518.2 224.8,525.0 226.3,525.0 226.3,526.3 227.8,526.3 227.8,526.5 229.3,526.5 229.3,526.3 230.8,526.3 230.8,526.0 232.3,526.0 232.3,526.5 233.8,526.5 233.8,525.7 235.3,525.7 235.3,525.8 236.8,525.8 236.8,523.2 238.3,523.2 238.3,526.1 239.8,526.1 239.8,524.7 241.3,524.7 241.3,524.5 242.8,524.5 242.8,525.1 244.3,525.1 244.3,526.3 245.8,526.3 245.8,526.0 247.3,526.0 247.3,526.7 248.8,526.7 248.8,519.9 250.3,519.9 250.3,523.3 251.8,523.3 251.8,526.6 253.3,526.6 253.3,526.6 254.8,526.6 254.8,520.9 256.3,520.9 256.3,526.5 257.8,526.5 257.8,518.9 259.3,518.9 259.3,526.3 260.8,526.3 260.8,526.3 262.3,526.3 262.3,525.7 263.8,525.7 263.8,525.8 265.3,525.8 265.3,525.4 266.8,525.4 266.8,524.8 268.3,524.8 268.3,522.5 269.8,522.5 269.8,524.7 271.3,524.7 271.3,526.5 272.8,526.5 272.8,526.3 274.3,526.3 274.3,526.0 275.8,526.0 275.8,524.0 277.3,524.0 277.3,526.3 278.8,526.3 278.8,525.5 280.3,525.5 280.3,521.1 281.8,521.1 281.8,525.6 283.3,525.6 283.3,526.2 284.8,526.2 284.8,526.1 286.3,526.1 286.3,526.0 287.8,526.0 287.8,525.2 289.3,525.2 289.3,525.8 290.8,525.8 290.8,526.0 292.3,526.0 292.3,524.6 293.8,524.6 293.8,526.6 295.3,526.6 295.3,525.3 296.8,525.3 296.8,524.9 298.3,524.9 298.3,526.2 299.8,526.2 299.8,521.6 301.3,521.6 301.3,526.6 302.8,526.6 302.8,525.9 304.3,525.9 304.3,526.6 305.8,526.6 305.8,526.1 307.3,526.1 307.3,526.2 308.8,526.2 308.8,526.6 310.3,526.6 310.3,525.7 311.8,525.7 311.8,525.8 313.3,525.8 313.3,525.6 314.8,525.6 314.8,526.0 316.3,526.0 316.3,526.2 317.8,526.2 317.8,526.2 319.3,526.2 319.3,523.0 320.8,523.0 320.8,524.7 322.3,524.7 322.3,525.0 323.8,525.0 323.8,525.7 325.3,525.7 325.3,525.8 326.8,525.8 326.8,520.1 328.3,520.1 328.3,526.3 329.8,526.3 329.8,526.6 331.3,526.6 331.3,525.1 332.8,525.1 332.8,525.1 334.3,525.1 334.3,522.8 335.8,522.8 335.8,525.4 337.3,525.4 337.3,526.5 338.8,526.5 338.8,526.5 340.3,526.5 340.3,526.7 341.8,526.7 341.8,525.8 343.3,525.8 343.3,525.0 344.8,525.0 344.8,522.4 346.3,522.4 346.3,524.6 347.8,524.6 347.8,526.5 349.3,526.5 349.3,525.7 350.8,525.7 350.8,526.1 352.3,526.1 352.3,525.3 353.8,525.3 353.8,525.9 355.3,525.9 355.3,522.3 356.8,522.3 356.8,526.4 358.3,526.4 358.3,520.3 359.8,520.3 359.8,526.3 361.3,526.3 361.3,518.7 362.8,518.7 362.8,526.3 364.3,526.3 364.3,526.7 365.8,526.7 365.8,526.6 367.3,526.6 367.3,525.5 368.8,525.5 368.8,526.5 370.3,526.5 370.3,526.3 371.8,526.3 371.8,525.9 373.3,525.9 373.3,525.8 374.8,525.8 374.8,525.3 376.3,525.3 376.3,526.2 377.8,526.2 377.8,526.0 379.3,526.0 379.3,526.3 380.8,526.3 380.8,526.0 382.3,526.0 382.3,525.1 383.8,525.1 383.8,524.4 385.3,524.4 385.3,525.7 386.8,525.7 386.8,526.4 388.3,526.4 388.3,526.3 389.8,526.3 389.8,525.5 391.3,525.5 391.3,525.0 392.8,525.0 392.8,526.5 394.3,526.5 394.3,525.4 395.8,525.4 395.8,525.6 397.3,525.6 397.3,525.9 398.8,525.9 398.8,520.5 400.3,520.5 400.3,526.6 401.8,526.6 401.8,523.9 403.3,523.9 403.3,523.3 404.8,523.3 404.8,520.7 406.3,520.7 406.3,526.0 407.8,526.0 407.8,522.7 409.3,522.7 409.3,526.3 410.8,526.3 410.8,526.5 412.3,526.5 412.3,526.4 413.8,526.4 413.8,526.3 415.3,526.3 415.3,525.1 416.8,525.1 416.8,524.9 418.3,524.9 418.3,525.8 419.8,525.8 419.8,525.6 421.3,525.6 421.3,521.1 422.8,521.1 422.8,525.4 424.3,525.4 424.3,526.4 425.8,526.4 425.8,524.8 427.3,524.8 427.3,525.3 428.8,525.3 428.8,518.0 430.3,518.0 430.3,525.4 431.8,525.4 431.8,525.7 433.3,525.7 433.3,526.6 434.8,526.6 434.8,526.0 436.3,526.0 436.3,525.4 437.8,525.4 437.8,525.4 439.3,525.4 439.3,525.9 440.8,525.9 440.8,525.5 442.3,525.5 442.3,526.7 443.8,526.7 443.8,525.4 445.3,525.4 445.3,525.7 446.8,525.7 446.8,526.5 448.3,526.5 448.3,526.3 449.8,526.3 449.8,525.1 451.3,525.1 451.3,525.5 452.8,525.5 452.8,520.2 454.3,520.2 454.3,526.5 455.8,526.5 455.8,525.9 457.3,525.9 457.3,525.7 458.8,525.7 458.8,525.7 460.3,525.7 460.3,526.1 461.8,526.1 461.8,522.8 463.3,522.8 463.3,526.4 464.8,526.4 464.8,526.5 466.3,526.5 466.3,526.6 467.8,526.6 467.8,518.3 469.3,518.3 469.3,525.4 470.8,525.4 470.8,526.4 472.3,526.4 472.3,525.0 473.8,525.0 473.8,525.9 475.3,525.9 475.3,526.0 476.8,526.0 476.8,526.4 478.3,526.4 478.3,526.4 479.8,526.4 479.8,526.5 481.3,526.5 481.3,523.9 482.8,523.9 482.8,525.9 484.3,525.9 484.3,526.4 485.8,526.4 485.8,526.6 487.3,526.6 487.3,526.4 488.8,526.4 488.8,524.8 490.3,524.8 490.3,523.4 491.8,523.4 491.8,526.7 493.3,526.7 493.3,525.0 494.8,525.0 494.8,525.2 496.3,525.2 496.3,526.4 497.8,526.4 497.8,524.8 499.3,524.8 499.3,526.6 500.8,526.6 500.8,525.2 502.3,525.2 502.3,524.2 503.8,524.2 503.8,524.0 505.3,524.0 505.3,521.1 506.8,521.1 506.8,526.2 508.3,526.2 508.3,525.9 509.8,525.9 509.8,525.3 511.3,525.3 511.3,518.3 512.8,518.3 512.8,519.9 514.3,519.9 514.3,526.6 515.8,526.6 515.8,526.7 517.3,526.7 517.3,526.3 518.8,526.3 518.8,526.5 520.3,526.5 520.3,526.2 521.8,526.2 521.8,526.3 523.3,526.3 523.3,526.6 524.8,526.6 524.8,525.2 526.3,525.2 526.3,519.7 527.8,519.7 527.8,526.6 529.3,526.6 529.3,526.2 530.8,526.2 530.8,518.7 532.3,518.7 532.3,520.6 533.8,520.6 533.8,526.1 535.3,526.1 535.3,525.3 536.8,525.3 536.8,526.6 538.3,526.6 538.3,525.8 539.8,525.8 539.8,526.7 541.3,526.7 541.3,519.4 542.8,519.4 542.8,525.6 544.3,525.6 544.3,526.2 545.8,526.2 545.8,525.3 547.3,525.3 547.3,525.9 548.8,525.9 548.8,525.4 550.3,525.4 550.3,526.5 551.8,526.5 551.8,525.8 553.3,525.8 553.3,523.1 554.8,523.1 554.8,525.5 556.3,525.5 556.3,525.8 557.8,525.8 557.8,526.5 559.3,526.5 559.3,520.0 560.8,520.0 560.8,526.4 562.3,526.4 562.3,526.3 563.8,526.3 563.8,526.4 565.3,526.4 565.3,526.1 566.8,526.1 566.8,525.1 568.3,525.1 568.3,526.7 569.8,526.7 569.8,524.6 571.3,524.6 571.3,525.6 572.8,525.6 572.8,522.9 574.3,522.9 574.3,525.9 575.8,525.9 575.8,526.0 577.3,526.0 577.3,525.8 578.8,525.8 578.8,525.7 580.3,525.7 580.3,526.1 581.8,526.1 581.8,525.7 583.3,525.7 583.3,523.8 584.8,523.8 584.8,526.2 586.3,526.2 586.3,526.2 587.8,526.2 587.8,525.7 589.3,525.7 589.3,524.7 590.8,524.7 590.8,525.2 592.3,525.2 592.3,525.3 593.8,525.3 593.8,525.5 595.3,525.5 595.3,525.9 596.8,525.9 596.8,526.4 598.3,526.4 598.3,526.1 599.8,526.1 599.8,526.5 601.3,526.5 601.3,526.3 602.8,526.3 602.8,526.5 604.3,526.5 604.3,524.9 605.8,524.9 605.8,526.6 607.3,526.6 607.3,524.0 608.8,524.0 608.8,525.6 610.3,525.6 610.3,526.6 611.8,526.6 611.8,525.3 613.3,525.3 613.3,526.6 614.8,526.6 614.8,526.3 616.3,526.3 616.3,526.7 617.8,526.7 617.8,526.1 619.3,526.1 619.3,526.6 620.8,526.6 620.8,526.4 622.3,526.4 622.3,521.2 623.8,521.2 623.8,526.1 625.3,526.1 625.3,525.5 626.8,525.5 626.8,525.9 628.3,525.9 628.3,526.3 629.8,526.3 629.8,525.7 631.3,525.7 631.3,524.9 632.8,524.9 632.8,525.0 634.3,525.0 634.3,525.0 635.8,525.0 635.8,526.3 637.3,526.3 637.3,526.1 638.8,526.1 638.8,526.4 640.3,526.4 640.3,524.9 641.8,524.9 641.8,525.1 643.3,525.1 643.3,526.3 644.8,526.3 644.8,525.8 646.3,525.8 646.3,524.3 647.8,524.3 647.8,524.9 649.3,524.9 649.3,525.7 650.8,525.7 650.8,526.3 652.3,526.3 652.3,526.2 653.8,526.2 653.8,522.4 655.3,522.4 655.3,526.0 656.8,526.0 656.8,525.8 658.3,525.8 658.3,526.4 659.8,526.4 659.8,524.9 661.3,524.9 661.3,526.3 662.8,526.3 662.8,517.8 664.3,517.8 664.3,521.7 665.8,521.7 665.8,526.3 667.3,526.3 667.3,521.8 668.8,521.8 668.8,520.2 670.3,520.2 670.3,525.7 671.8,525.7 671.8,525.1 673.3,525.1 673.3,523.4 674.8,523.4 674.8,524.8 676.3,524.8 676.3,526.7 677.8,526.7 677.8,526.2 679.3,526.2 679.3,526.2 680.8,526.2 680.8,525.6 682.3,525.6 682.3,526.2 683.8,526.2 683.8,525.6 685.3,525.6 685.3,526.5 686.8,526.5 686.8,526.1 688.3,526.1 688.3,525.6 689.8,525.6 689.8,525.5 691.3,525.5 691.3,525.5 692.8,525.5 692.8,526.3 694.3,526.3 694.3,524.3 695.8,524.3 695.8,526.6 697.3,526.6 697.3,524.5 698.8,524.5 698.8,526.6 700.3,526.6 700.3,526.7 701.8,526.7 701.8,519.8 703.3,519.8 703.3,519.4 704.8,519.4 704.8,525.0 706.3,525.0 706.3,525.9 707.8,525.9 707.8,526.5 709.3,526.5 709.3,524.9 710.8,524.9 710.8,525.5 712.3,525.5 712.3,526.1 713.8,526.1 713.8,521.4 715.3,521.4 715.3,526.0 716.8,526.0 716.8,525.0 718.3,525.0 718.3,525.6 719.8,525.6 719.8,520.9 721.3,520.9 721.3,524.0 722.8,524.0 722.8,526.1 724.3,526.1 724.3,525.9 725.8,525.9 725.8,519.1 727.3,519.1 727.3,526.3 728.8,526.3 728.8,525.6 730.3,525.6 730.3,526.1 731.8,526.1 731.8,524.1 733.3,524.1 733.3,526.5 734.8,526.5 734.8,525.3 736.3,525.3 736.3,525.4 737.8,525.4 737.8,522.2 739.3,522.2 739.3,526.7 740.8,526.7 740.8,522.7 742.3,522.7 742.3,526.2 743.8,526.2 743.8,525.8 745.3,525.8 745.3,524.1 746.8,524.1 746.8,523.0 748.3,523.0 748.3,526.5 749.8,526.5 749.8,525.7 751.3,525.7 751.3,524.7 752.8,524.7 752.8,526.5 754.3,526.5 754.3,526.1 755.8,526.1 755.8,526.5 757.3,526.5 757.3,524.2 758.8,524.2 758.8,520.3 760.3,520.3 760.3,525.2 761.8,525.2 761.8,526.1 763.3,526.1 763.3,519.2 764.8,519.2 764.8,526.5 766.3,526.5 766.3,526.3 767.8,526.3 767.8,526.6 769.3,526.6 769.3,518.7 770.8,518.7 770.8,526.3 772.3,526.3 772.3,525.3 773.8,525.3 773.8,526.0 775.3,526.0 775.3,524.0 776.8,524.0 776.8,526.5 778.3,526.5 778.3,526.2 779.8,526.2 779.8,526.2 781.3,526.2 781.3,526.6 782.8,526.6 782.8,526.1 784.3,526.1 784.3,525.9 785.8,525.9 785.8,525.6 787.3,525.6 787.3,519.6 788.8,519.6 788.8,526.4 790.3,526.4 790.3,526.6 791.8,526.6 791.8,523.6 793.3,523.6 793.3,526.2 794.8,526.2 794.8,524.8 796.3,524.8 796.3,526.0 797.8,526.0 797.8,526.2 799.3,526.2 799.3,526.2 800.8,526.2 800.8,526.0 802.3,526.0 802.3,526.5 803.8,526.5 803.8,526.4 805.3,526.4 805.3,526.3 806.8,526.3 806.8,526.2 808.3,526.2 808.3,525.4 809.8,525.4 809.8,525.3 811.3,525.3 811.3,525.8 812.8,525.8 812.8,526.7 814.3,526.7 814.3,523.6 815.8,523.6 815.8,526.5 817.3,526.5 817.3,522.1 818.8,522.1 818.8,525.2 820.3,525.2 820.3,525.8 821.8,525.8 821.8,525.6 823.3,525.6 823.3,526.5 824.8,526.5 824.8,524.1 826.3,524.1 826.3,525.7 827.8,525.7 827.8,526.4 829.3,526.4 829.3,526.3 830.8,526.3 830.8,526.5 832.3,526.5 832.3,525.7 833.8,525.7 833.8,522.0 835.3,522.0 835.3,525.8 836.8,525.8 836.8,521.9 838.3,521.9 838.3,526.5 839.8,526.5 839.8,523.1 841.3,523.1 841.3,526.0 842.8,526.0 842.8,525.5 844.3,525.5 844.3,525.1 845.8,525.1 845.8,519.9 847.3,519.9 847.3,526.2 848.8,526.2 848.8,526.4 850.3,526.4 850.3,521.6 851.8,521.6 851.8,525.8 853.3,525.8 853.3,526.6 854.8,526.6 854.8,526.3 856.3,526.3 856.3,526.7 857.8,526.7 857.8,525.8 859.3,525.8 859.3,526.2 860.8,526.2 860.8,526.5 862.3,526.5 862.3,519.2 863.8,519.2 863.8,526.7 865.3,526.7 865.3,520.3 866.8,520.3 866.8,526.0 868.3,526.0 868.3,526.3 869.8,526.3 869.8,526.6 871.3,526.6 871.3,524.6 872.8,524.6 872.8,525.0 874.3,525.0 874.3,526.5 875.8,526.5 875.8,524.7 877.3,524.7 877.3,525.2 878.8,525.2 878.8,525.8 880.3,525.8 880.3,526.3 881.8,526.3 881.8,525.8 883.3,525.8 883.3,526.0 884.8,526.0 884.8,519.0 886.3,519.0 886.3,523.4 887.8,523.4 887.8,525.8 889.3,525.8 889.3,526.6 890.8,526.6 890.8,520.8 892.3,520.8 892.3,520.8 893.8,520.8 893.8,524.2 895.3,524.2 895.3,526.3 896.8,526.3 896.8,525.8 898.3,525.8 898.3,526.6 899.8,526.6 899.8,525.5 901.3,525.5 901.3,526.1 902.8,526.1 902.8,526.7 904.3,526.7 904.3,525.2 905.8,525.2 905.8,526.5 907.3,526.5 907.3,526.4 908.8,526.4 908.8,526.7 910.3,526.7 910.3,526.7 911.8,526.7 911.8,526.3 913.3,526.3 913.3,526.2 914.8,526.2 914.8,532.7 913.3,532.7 913.3,532.7 911.8,532.7 911.8,538.4 910.3,538.4 910.3,533.8 908.8,533.8 908.8,533.6 907.3,533.6 907.3,532.6 905.8,532.6 905.8,533.0 904.3,533.0 904.3,532.1 902.8,532.1 902.8,533.1 901.3,533.1 901.3,532.4 899.8,532.4 899.8,533.2 898.3,533.2 898.3,532.2 896.8,532.2 896.8,532.1 895.3,532.1 895.3,533.1 893.8,533.1 893.8,532.4 892.3,532.4 892.3,533.9 890.8,533.9 890.8,531.9 889.3,531.9 889.3,532.9 887.8,532.9 887.8,534.8 886.3,534.8 886.3,532.3 884.8,532.3 884.8,532.2 883.3,532.2 883.3,535.2 881.8,535.2 881.8,532.0 880.3,532.0 880.3,536.2 878.8,536.2 878.8,532.2 877.3,532.2 877.3,533.0 875.8,533.0 875.8,537.4 874.3,537.4 874.3,532.1 872.8,532.1 872.8,536.1 871.3,536.1 871.3,537.6 869.8,537.6 869.8,531.9 868.3,531.9 868.3,533.7 866.8,533.7 866.8,532.2 865.3,532.2 865.3,532.4 863.8,532.4 863.8,532.3 862.3,532.3 862.3,533.1 860.8,533.1 860.8,532.0 859.3,532.0 859.3,536.7 857.8,536.7 857.8,534.5 856.3,534.5 856.3,532.9 854.8,532.9 854.8,532.4 853.3,532.4 853.3,532.4 851.8,532.4 851.8,532.1 850.3,532.1 850.3,534.0 848.8,534.0 848.8,532.5 847.3,532.5 847.3,532.2 845.8,532.2 845.8,539.7 844.3,539.7 844.3,532.4 842.8,532.4 842.8,532.6 841.3,532.6 841.3,532.0 839.8,532.0 839.8,532.8 838.3,532.8 838.3,532.2 836.8,532.2 836.8,532.2 835.3,532.2 835.3,534.1 833.8,534.1 833.8,536.1 832.3,536.1 832.3,532.6 830.8,532.6 830.8,533.4 829.3,533.4 829.3,533.4 827.8,533.4 827.8,532.3 826.3,532.3 826.3,532.6 824.8,532.6 824.8,533.1 823.3,533.1 823.3,532.5 821.8,532.5 821.8,532.1 820.3,532.1 820.3,532.7 818.8,532.7 818.8,531.9 817.3,531.9 817.3,532.3 815.8,532.3 815.8,532.5 814.3,532.5 814.3,532.6 812.8,532.6 812.8,533.0 811.3,533.0 811.3,535.6 809.8,535.6 809.8,532.6 808.3,532.6 808.3,532.8 806.8,532.8 806.8,532.5 805.3,532.5 805.3,532.1 803.8,532.1 803.8,532.0 802.3,532.0 802.3,533.1 800.8,533.1 800.8,532.1 799.3,532.1 799.3,537.7 797.8,537.7 797.8,531.9 796.3,531.9 796.3,532.1 794.8,532.1 794.8,532.8 793.3,532.8 793.3,532.4 791.8,532.4 791.8,534.6 790.3,534.6 790.3,532.2 788.8,532.2 788.8,532.8 787.3,532.8 787.3,532.6 785.8,532.6 785.8,532.2 784.3,532.2 784.3,532.2 782.8,532.2 782.8,532.5 781.3,532.5 781.3,532.4 779.8,532.4 779.8,532.4 778.3,532.4 778.3,532.1 776.8,532.1 776.8,532.6 775.3,532.6 775.3,533.7 773.8,533.7 773.8,532.8 772.3,532.8 772.3,533.1 770.8,533.1 770.8,532.3 769.3,532.3 769.3,532.8 767.8,532.8 767.8,539.7 766.3,539.7 766.3,533.7 764.8,533.7 764.8,532.5 763.3,532.5 763.3,533.0 761.8,533.0 761.8,539.7 760.3,539.7 760.3,531.9 758.8,531.9 758.8,533.0 757.3,533.0 757.3,531.9 755.8,531.9 755.8,532.5 754.3,532.5 754.3,532.1 752.8,532.1 752.8,533.0 751.3,533.0 751.3,532.1 749.8,532.1 749.8,532.3 748.3,532.3 748.3,532.7 746.8,532.7 746.8,533.6 745.3,533.6 745.3,532.1 743.8,532.1 743.8,532.4 742.3,532.4 742.3,536.1 740.8,536.1 740.8,533.3 739.3,533.3 739.3,534.3 737.8,534.3 737.8,532.5 736.3,532.5 736.3,535.4 734.8,535.4 734.8,533.3 733.3,533.3 733.3,533.9 731.8,533.9 731.8,532.2 730.3,532.2 730.3,532.1 728.8,532.1 728.8,532.3 727.3,532.3 727.3,532.6 725.8,532.6 725.8,538.3 724.3,538.3 724.3,532.0 722.8,532.0 722.8,533.0 721.3,533.0 721.3,534.3 719.8,534.3 719.8,532.0 718.3,532.0 718.3,532.0 716.8,532.0 716.8,533.8 715.3,533.8 715.3,534.5 713.8,534.5 713.8,532.1 712.3,532.1 712.3,538.6 710.8,538.6 710.8,532.6 709.3,532.6 709.3,533.4 707.8,533.4 707.8,532.1 706.3,532.1 706.3,532.4 704.8,532.4 704.8,532.4 703.3,532.4 703.3,538.5 701.8,538.5 701.8,532.9 700.3,532.9 700.3,532.1 698.8,532.1 698.8,532.9 697.3,532.9 697.3,533.2 695.8,533.2 695.8,539.1 694.3,539.1 694.3,532.1 692.8,532.1 692.8,532.4 691.3,532.4 691.3,534.2 689.8,534.2 689.8,533.8 688.3,533.8 688.3,538.7 686.8,538.7 686.8,534.6 685.3,534.6 685.3,533.4 683.8,533.4 683.8,532.3 682.3,532.3 682.3,535.9 680.8,535.9 680.8,533.5 679.3,533.5 679.3,533.3 677.8,533.3 677.8,536.3 676.3,536.3 676.3,532.1 674.8,532.1 674.8,535.8 673.3,535.8 673.3,534.1 671.8,534.1 671.8,532.3 670.3,532.3 670.3,533.0 668.8,533.0 668.8,532.0 667.3,532.0 667.3,532.8 665.8,532.8 665.8,532.0 664.3,532.0 664.3,532.4 662.8,532.4 662.8,532.9 661.3,532.9 661.3,532.0 659.8,532.0 659.8,533.4 658.3,533.4 658.3,532.6 656.8,532.6 656.8,532.9 655.3,532.9 655.3,533.6 653.8,533.6 653.8,534.4 652.3,534.4 652.3,532.2 650.8,532.2 650.8,538.7 649.3,538.7 649.3,532.3 647.8,532.3 647.8,532.7 646.3,532.7 646.3,532.2 644.8,532.2 644.8,532.9 643.3,532.9 643.3,532.0 641.8,532.0 641.8,532.3 640.3,532.3 640.3,538.8 638.8,538.8 638.8,539.4 637.3,539.4 637.3,532.0 635.8,532.0 635.8,533.1 634.3,533.1 634.3,534.8 632.8,534.8 632.8,532.7 631.3,532.7 631.3,535.2 629.8,535.2 629.8,532.2 628.3,532.2 628.3,535.1 626.8,535.1 626.8,532.9 625.3,532.9 625.3,532.5 623.8,532.5 623.8,532.0 622.3,532.0 622.3,540.0 620.8,540.0 620.8,533.1 619.3,533.1 619.3,534.0 617.8,534.0 617.8,532.5 616.3,532.5 616.3,532.4 614.8,532.4 614.8,537.0 613.3,537.0 613.3,532.1 611.8,532.1 611.8,532.3 610.3,532.3 610.3,532.9 608.8,532.9 608.8,532.7 607.3,532.7 607.3,534.7 605.8,534.7 605.8,532.2 604.3,532.2 604.3,532.1 602.8,532.1 602.8,533.4 601.3,533.4 601.3,532.7 599.8,532.7 599.8,533.0 598.3,533.0 598.3,532.1 596.8,532.1 596.8,538.5 595.3,538.5 595.3,532.2 593.8,532.2 593.8,533.5 592.3,533.5 592.3,532.1 590.8,532.1 590.8,532.9 589.3,532.9 589.3,532.1 587.8,532.1 587.8,532.8 586.3,532.8 586.3,534.5 584.8,534.5 584.8,533.6 583.3,533.6 583.3,532.6 581.8,532.6 581.8,532.1 580.3,532.1 580.3,534.6 578.8,534.6 578.8,535.6 577.3,535.6 577.3,533.4 575.8,533.4 575.8,532.3 574.3,532.3 574.3,532.6 572.8,532.6 572.8,532.7 571.3,532.7 571.3,532.2 569.8,532.2 569.8,532.3 568.3,532.3 568.3,533.4 566.8,533.4 566.8,538.4 565.3,538.4 565.3,533.0 563.8,533.0 563.8,532.5 562.3,532.5 562.3,539.3 560.8,539.3 560.8,532.4 559.3,532.4 559.3,532.9 557.8,532.9 557.8,533.4 556.3,533.4 556.3,532.4 554.8,532.4 554.8,533.2 553.3,533.2 553.3,533.1 551.8,533.1 551.8,533.1 550.3,533.1 550.3,532.9 548.8,532.9 548.8,535.8 547.3,535.8 547.3,532.9 545.8,532.9 545.8,533.4 544.3,533.4 544.3,533.0 542.8,533.0 542.8,532.6 541.3,532.6 541.3,532.1 539.8,532.1 539.8,532.7 538.3,532.7 538.3,533.0 536.8,533.0 536.8,533.4 535.3,533.4 535.3,531.9 533.8,531.9 533.8,533.3 532.3,533.3 532.3,538.6 530.8,538.6 530.8,532.2 529.3,532.2 529.3,532.4 527.8,532.4 527.8,532.2 526.3,532.2 526.3,539.5 524.8,539.5 524.8,532.0 523.3,532.0 523.3,532.0 521.8,532.0 521.8,532.8 520.3,532.8 520.3,538.1 518.8,538.1 518.8,533.0 517.3,533.0 517.3,532.2 515.8,532.2 515.8,532.8 514.3,532.8 514.3,539.0 512.8,539.0 512.8,532.6 511.3,532.6 511.3,534.1 509.8,534.1 509.8,532.3 508.3,532.3 508.3,532.4 506.8,532.4 506.8,533.5 505.3,533.5 505.3,532.1 503.8,532.1 503.8,533.2 502.3,533.2 502.3,531.9 500.8,531.9 500.8,533.1 499.3,533.1 499.3,538.4 497.8,538.4 497.8,532.4 496.3,532.4 496.3,532.8 494.8,532.8 494.8,532.2 493.3,532.2 493.3,533.2 491.8,533.2 491.8,534.7 490.3,534.7 490.3,538.6 488.8,538.6 488.8,532.5 487.3,532.5 487.3,537.3 485.8,537.3 485.8,533.5 484.3,533.5 484.3,532.0 482.8,532.0 482.8,533.0 481.3,533.0 481.3,533.2 479.8,533.2 479.8,535.8 478.3,535.8 478.3,533.1 476.8,533.1 476.8,532.7 475.3,532.7 475.3,531.9 473.8,531.9 473.8,532.3 472.3,532.3 472.3,533.1 470.8,533.1 470.8,533.0 469.3,533.0 469.3,538.2 467.8,538.2 467.8,533.2 466.3,533.2 466.3,532.7 464.8,532.7 464.8,533.5 463.3,533.5 463.3,533.8 461.8,533.8 461.8,536.0 460.3,536.0 460.3,532.7 458.8,532.7 458.8,533.4 457.3,533.4 457.3,533.6 455.8,533.6 455.8,533.0 454.3,533.0 454.3,532.2 452.8,532.2 452.8,532.4 451.3,532.4 451.3,533.4 449.8,533.4 449.8,532.0 448.3,532.0 448.3,533.0 446.8,533.0 446.8,533.3 445.3,533.3 445.3,534.0 443.8,534.0 443.8,532.8 442.3,532.8 442.3,532.4 440.8,532.4 440.8,532.4 439.3,532.4 439.3,532.1 437.8,532.1 437.8,533.8 436.3,533.8 436.3,532.6 434.8,532.6 434.8,532.3 433.3,532.3 433.3,532.1 431.8,532.1 431.8,533.2 430.3,533.2 430.3,533.5 428.8,533.5 428.8,533.6 427.3,533.6 427.3,533.2 425.8,533.2 425.8,533.0 424.3,533.0 424.3,532.6 422.8,532.6 422.8,532.5 421.3,532.5 421.3,532.0 419.8,532.0 419.8,536.2 418.3,536.2 418.3,532.7 416.8,532.7 416.8,533.4 415.3,533.4 415.3,533.9 413.8,533.9 413.8,533.5 412.3,533.5 412.3,532.4 410.8,532.4 410.8,533.4 409.3,533.4 409.3,532.5 407.8,532.5 407.8,532.3 406.3,532.3 406.3,537.3 404.8,537.3 404.8,532.3 403.3,532.3 403.3,532.8 401.8,532.8 401.8,539.1 400.3,539.1 400.3,533.2 398.8,533.2 398.8,533.7 397.3,533.7 397.3,533.8 395.8,533.8 395.8,533.3 394.3,533.3 394.3,532.3 392.8,532.3 392.8,538.8 391.3,538.8 391.3,533.4 389.8,533.4 389.8,532.1 388.3,532.1 388.3,532.3 386.8,532.3 386.8,535.6 385.3,535.6 385.3,532.0 383.8,532.0 383.8,535.1 382.3,535.1 382.3,532.5 380.8,532.5 380.8,534.3 379.3,534.3 379.3,532.4 377.8,532.4 377.8,532.4 376.3,532.4 376.3,532.2 374.8,532.2 374.8,537.7 373.3,537.7 373.3,532.8 371.8,532.8 371.8,534.5 370.3,534.5 370.3,531.9 368.8,531.9 368.8,532.5 367.3,532.5 367.3,533.3 365.8,533.3 365.8,533.2 364.3,533.2 364.3,534.1 362.8,534.1 362.8,532.0 361.3,532.0 361.3,532.2 359.8,532.2 359.8,532.0 358.3,532.0 358.3,532.2 356.8,532.2 356.8,532.6 355.3,532.6 355.3,533.2 353.8,533.2 353.8,532.0 352.3,532.0 352.3,533.1 350.8,533.1 350.8,532.0 349.3,532.0 349.3,533.2 347.8,533.2 347.8,533.2 346.3,533.2 346.3,535.9 344.8,535.9 344.8,532.5 343.3,532.5 343.3,531.9 341.8,531.9 341.8,535.2 340.3,535.2 340.3,532.3 338.8,532.3 338.8,533.0 337.3,533.0 337.3,532.5 335.8,532.5 335.8,532.3 334.3,532.3 334.3,532.8 332.8,532.8 332.8,532.7 331.3,532.7 331.3,532.9 329.8,532.9 329.8,537.3 328.3,537.3 328.3,533.3 326.8,533.3 326.8,532.1 325.3,532.1 325.3,532.5 323.8,532.5 323.8,532.7 322.3,532.7 322.3,538.8 320.8,538.8 320.8,532.9 319.3,532.9 319.3,532.6 317.8,532.6 317.8,532.2 316.3,532.2 316.3,533.0 314.8,533.0 314.8,533.5 313.3,533.5 313.3,532.0 311.8,532.0 311.8,533.7 310.3,533.7 310.3,533.5 308.8,533.5 308.8,535.0 307.3,535.0 307.3,532.0 305.8,532.0 305.8,533.3 304.3,533.3 304.3,532.6 302.8,532.6 302.8,532.2 301.3,532.2 301.3,532.7 299.8,532.7 299.8,532.3 298.3,532.3 298.3,532.9 296.8,532.9 296.8,531.9 295.3,531.9 295.3,533.7 293.8,533.7 293.8,532.2 292.3,532.2 292.3,532.6 290.8,532.6 290.8,532.7 289.3,532.7 289.3,532.8 287.8,532.8 287.8,532.3 286.3,532.3 286.3,531.9 284.8,531.9 284.8,533.1 283.3,533.1 283.3,534.0 281.8,534.0 281.8,540.5 280.3,540.5 280.3,533.3 278.8,533.3 278.8,532.1 277.3,532.1 277.3,532.7 275.8,532.7 275.8,535.7 274.3,535.7 274.3,539.7 272.8,539.7 272.8,532.0 271.3,532.0 271.3,532.7 269.8,532.7 269.8,532.7 268.3,532.7 268.3,532.5 266.8,532.5 266.8,534.2 265.3,534.2 265.3,532.1 263.8,532.1 263.8,532.1 262.3,532.1 262.3,532.2 260.8,532.2 260.8,532.4 259.3,532.4 259.3,538.3 257.8,538.3 257.8,532.7 256.3,532.7 256.3,532.4 254.8,532.4 254.8,532.1 253.3,532.1 253.3,532.6 251.8,532.6 251.8,532.8 250.3,532.8 250.3,533.8 248.8,533.8 248.8,536.4 247.3,536.4 247.3,533.0 245.8,533.0 245.8,532.8 244.3,532.8 244.3,532.6 242.8,532.6 242.8,533.0 241.3,533.0 241.3,533.1 239.8,533.1 239.8,540.7 238.3,540.7 238.3,537.6 236.8,537.6 236.8,532.1 235.3,532.1 235.3,532.5 233.8,532.5 233.8,534.7 232.3,534.7 232.3,539.0 230.8,539.0 230.8,531.9 229.3,531.9 229.3,533.2 227.8,533.2 227.8,533.6 226.3,533.6 226.3,532.3 224.8,532.3 224.8,531.9 223.3,531.9 223.3,533.0 221.8,533.0 221.8,532.3 220.3,532.3 220.3,531.9 218.8,531.9 218.8,537.6 217.3,537.6 217.3,533.4 215.8,533.4 215.8,533.1 214.3,533.1 214.3,533.0 212.8,533.0 212.8,531.9 211.3,531.9 211.3,532.0 209.8,532.0 209.8,532.3 208.3,532.3 208.3,532.5 206.8,532.5 206.8,533.7 205.3,533.7 205.3,533.4 203.8,533.4 203.8,532.6 202.3,532.6 202.3,531.9 200.8,531.9 200.8,534.3 199.3,534.3 199.3,533.4 197.8,533.4 197.8,532.1 196.3,532.1 196.3,532.3 194.8,532.3 194.8,537.5 193.3,537.5 193.3,540.0 191.8,540.0 191.8,532.6 190.3,532.6 190.3,532.9 188.8,532.9 188.8,532.3 187.3,532.3 187.3,532.0 185.8,532.0 185.8,532.4 184.3,532.4 184.3,532.6 182.8,532.6 182.8,539.9 181.3,539.9 181.3,532.2 179.8,532.2 179.8,539.8 178.3,539.8 178.3,532.9 176.8,532.9 176.8,533.0 175.3,533.0 175.3,532.3 173.8,532.3 173.8,532.3 172.3,532.3 172.3,535.9 170.8,535.9 170.8,533.3 169.3,533.3 169.3,532.5 167.8,532.5 167.8,533.3 166.3,533.3 166.3,533.1 164.8,533.1 164.8,533.7 163.3,533.7 163.3,533.2 161.8,533.2 161.8,532.2 160.3,532.2 160.3,533.6 158.8,533.6 158.8,532.9 157.3,532.9 157.3,532.3 155.8,532.3 155.8,532.6 154.3,532.6 154.3,533.3 152.8,533.3 152.8,532.0 151.3,532.0 151.3,531.9 149.8,531.9 149.8,531.9 148.3,531.9 148.3,533.1 146.8,533.1 146.8,532.3 145.3,532.3 145.3,533.8 143.8,533.8 143.8,532.2 142.3,532.2 142.3,533.6 140.8,533.6 140.8,532.1 139.3,532.1 139.3,533.9 137.8,533.9 137.8,539.3 136.3,539.3 136.3,531.9 134.8,531.9 134.8,532.1 133.3,532.1 133.3,533.2 131.8,533.2 131.8,532.5 130.3,532.5 130.3,532.1 128.8,532.1 128.8,532.8 127.3,532.8 127.3,535.3 125.8,535.3 125.8,532.3 124.3,532.3 124.3,539.9 122.8,539.9 122.8,533.6 121.3,533.6 121.3,532.6 119.8,532.6 119.8,532.3 118.3,532.3 118.3,533.1 116.8,533.1 116.8,532.5 115.3,532.5 115.3,533.0 113.8,533.0 113.8,532.3 112.3,532.3 112.3,532.4 110.8,532.4 110.8,536.2 109.3,536.2 109.3,533.6 107.8,533.6 107.8,533.2 106.3,533.2 106.3,533.0 104.8,533.0 104.8,533.7 103.3,533.7 103.3,532.0 101.8,532.0 101.8,533.1 100.3,533.1 100.3,532.1 98.8,532.1 98.8,531.9 97.3,531.9 97.3,532.3 95.8,532.3 95.8,532.0 94.3,532.0 94.3,532.3 92.8,532.3 92.8,532.9 91.3,532.9 91.3,531.9 89.8,531.9 Z" stroke="none" stroke-width="0" fill="#aa00c8" />
<path d="M919,260.7 H928.3 V271.2" stroke="#fbab00" stroke-width="1.6" fill="none" />
<path d="M922.8,257.0 L918.8,260.7 L922.8,264.4" stroke="#fbab00" stroke-width="1.6" fill="none" />
<path d="M922.8,271.0 H934 L928.4,276.9 Z" stroke="none" stroke-width="0" fill="#fbab00" />
<text x="930.60" y="268.50" font-family="'Liberation Sans',sans-serif" font-size="11.5" fill="#fbab00" text-anchor="start" font-weight="bold" textLength="4.5" lengthAdjust="spacingAndGlyphs" >1</text>
<path d="M919,396 H928.3 V406.5" stroke="#00ff00" stroke-width="1.6" fill="none" />
<path d="M922.8,392.3 L918.8,396 L922.8,399.7" stroke="#00ff00" stroke-width="1.6" fill="none" />
<path d="M922.8,406.3 H934 L928.4,412.2 Z" stroke="none" stroke-width="0" fill="#00ff00" />
<text x="930.60" y="403.80" font-family="'Liberation Sans',sans-serif" font-size="11.5" fill="#00ff00" text-anchor="start" font-weight="bold" textLength="4.5" lengthAdjust="spacingAndGlyphs" >2</text>
<path d="M919,530.3 H928.3 V540.8" stroke="#aa00c8" stroke-width="1.6" fill="none" />
<path d="M922.8,526.5999999999999 L918.8,530.3 L922.8,534.0" stroke="#aa00c8" stroke-width="1.6" fill="none" />
<path d="M922.8,540.5999999999999 H934 L928.4,546.5 Z" stroke="none" stroke-width="0" fill="#aa00c8" />
<text x="930.60" y="538.10" font-family="'Liberation Sans',sans-serif" font-size="11.5" fill="#aa00c8" text-anchor="start" font-weight="bold" textLength="4.5" lengthAdjust="spacingAndGlyphs" >3</text>
<path d="M920,361 H929 M923.5,357.5 L919.8,361 L923.5,364.5" stroke="#00ff00" stroke-width="1.5" fill="none" />
<text x="935.00" y="366.50" font-family="'Liberation Sans',sans-serif" font-size="15" fill="#00ff00" text-anchor="start" font-weight="normal" >T</text>
<rect x="5.80" y="108.50" width="59.70" height="58.00" fill="#000" />
<rect x="5.80" y="108.50" width="57.70" height="56.20" fill="#fff" />
<rect x="7.60" y="110.30" width="55.90" height="54.40" fill="#b2b2b2" />
<rect x="12.00" y="113.30" width="47.60" height="48.00" fill="#f5fbf5" />
<rect x="5.80" y="166.95" width="59.70" height="58.00" fill="#000" />
<rect x="5.80" y="166.95" width="57.70" height="56.20" fill="#fff" />
<rect x="7.60" y="168.75" width="55.90" height="54.40" fill="#b2b2b2" />
<rect x="12.00" y="171.75" width="47.60" height="48.00" fill="#f5fbf5" />
<rect x="5.80" y="225.40" width="59.70" height="58.00" fill="#000" />
<rect x="5.80" y="225.40" width="57.70" height="56.20" fill="#fff" />
<rect x="7.60" y="227.20" width="55.90" height="54.40" fill="#b2b2b2" />
<rect x="12.00" y="230.20" width="47.60" height="48.00" fill="#f5fbf5" />
<rect x="5.80" y="283.85" width="59.70" height="58.00" fill="#000" />
<rect x="5.80" y="283.85" width="57.70" height="56.20" fill="#fff" />
<rect x="7.60" y="285.65" width="55.90" height="54.40" fill="#b2b2b2" />
<rect x="12.00" y="288.65" width="47.60" height="48.00" fill="#f5fbf5" />
<rect x="5.80" y="342.30" width="59.70" height="58.00" fill="#000" />
<rect x="5.80" y="342.30" width="57.70" height="56.20" fill="#fff" />
<rect x="7.60" y="344.10" width="55.90" height="54.40" fill="#b2b2b2" />
<rect x="12.00" y="347.10" width="47.60" height="48.00" fill="#f5fbf5" />
<rect x="5.80" y="400.75" width="59.70" height="58.00" fill="#000" />
<rect x="5.80" y="400.75" width="57.70" height="56.20" fill="#fff" />
<rect x="7.60" y="402.55" width="55.90" height="54.40" fill="#b2b2b2" />
<rect x="12.00" y="405.55" width="47.60" height="48.00" fill="#f5fbf5" />
<rect x="5.80" y="459.20" width="59.70" height="58.00" fill="#000" />
<rect x="5.80" y="459.20" width="57.70" height="56.20" fill="#fff" />
<rect x="7.60" y="461.00" width="55.90" height="54.40" fill="#b2b2b2" />
<rect x="12.00" y="464.00" width="47.60" height="48.00" fill="#f5fbf5" />
<rect x="5.80" y="517.65" width="59.70" height="58.00" fill="#000" />
<rect x="5.80" y="517.65" width="57.70" height="56.20" fill="#fff" />
<rect x="7.60" y="519.45" width="55.90" height="54.40" fill="#b2b2b2" />
<rect x="12.00" y="522.45" width="47.60" height="48.00" fill="#f5fbf5" />
<path d="M19.5,148.2 H28.5 L43.5,116.7 H52.5" stroke="#000" stroke-width="1.5" fill="none" />
<line x1="37.50" y1="119.50" x2="46.50" y2="119.50" stroke="#ff3300" stroke-width="1.6" />
<line x1="25.00" y1="145.20" x2="34.00" y2="145.20" stroke="#ff3300" stroke-width="1.6" />
<line x1="30.00" y1="154.20" x2="41.50" y2="154.20" stroke="#ff3300" stroke-width="1.6" />
<path d="M33,150.79999999999998 L28,154.2 L33,157.6 Z M38.5,150.79999999999998 L43.5,154.2 L38.5,157.6 Z" stroke="none" stroke-width="0" fill="#ff3300" />
<path d="M19.5,175.14999999999998 H28.5 L43.5,206.64999999999998 H52.5" stroke="#000" stroke-width="1.5" fill="none" />
<line x1="25.00" y1="178.15" x2="34.00" y2="178.15" stroke="#ff3300" stroke-width="1.6" />
<line x1="37.50" y1="203.65" x2="46.50" y2="203.65" stroke="#ff3300" stroke-width="1.6" />
<line x1="30.00" y1="212.65" x2="41.50" y2="212.65" stroke="#ff3300" stroke-width="1.6" />
<path d="M33,209.24999999999997 L28,212.64999999999998 L33,216.04999999999998 Z M38.5,209.24999999999997 L43.5,212.64999999999998 L38.5,216.04999999999998 Z" stroke="none" stroke-width="0" fill="#ff3300" />
<path d="M21,264.9 H27.6 V233.6 H39.8 V264.9 H47 V233.6 H53.4" stroke="#000" stroke-width="1.6" fill="none" />
<line x1="23.30" y1="248.60" x2="31.00" y2="248.60" stroke="#ff3300" stroke-width="1.6" />
<line x1="43.70" y1="248.60" x2="51.00" y2="248.60" stroke="#ff3300" stroke-width="1.6" />
<path d="M21,323.35 H27.6 V292.05 H39.8 V323.35 H47 V292.05 H53.4" stroke="#000" stroke-width="1.6" fill="none" />
<line x1="23.30" y1="307.05" x2="31.00" y2="307.05" stroke="#ff3300" stroke-width="1.6" />
<line x1="43.70" y1="307.05" x2="51.00" y2="307.05" stroke="#ff3300" stroke-width="1.6" />
<line x1="28.20" y1="271.40" x2="45.60" y2="271.40" stroke="#ff3300" stroke-width="1.6" />
<path d="M31.2,268.0 L26.2,271.4 L31.2,274.79999999999995 Z M42.6,268.0 L47.6,271.4 L42.6,274.79999999999995 Z" stroke="none" stroke-width="0" fill="#ff3300" />
<line x1="29.50" y1="330.15" x2="45.60" y2="330.15" stroke="#ff3300" stroke-width="1.6" />
<path d="M32.5,326.75000000000006 L27.5,330.15000000000003 L32.5,333.55 Z M42.6,326.75000000000006 L47.6,330.15000000000003 L42.6,333.55 Z" stroke="none" stroke-width="0" fill="#ff3300" />
<text x="14.30" y="334.15" font-family="'Liberation Sans',sans-serif" font-size="10.5" fill="#ff3300" text-anchor="start" font-weight="bold" textLength="11.0" lengthAdjust="spacingAndGlyphs" >1/</text>
<path d="M23.7,379.3 H29 L33.4,384.1 L36.5,381.1 V357.90000000000003 L39.4,354.0 L44.3,359.5 H50.5 V379.3 H56.7" stroke="#000" stroke-width="1.5" fill="none" />
<line x1="36.00" y1="353.50" x2="43.00" y2="353.50" stroke="#ff3300" stroke-width="1.6" />
<line x1="29.50" y1="385.30" x2="37.30" y2="385.30" stroke="#ff3300" stroke-width="1.6" />
<line x1="18.40" y1="355.10" x2="18.40" y2="384.30" stroke="#ff3300" stroke-width="1.6" />
<path d="M14.4,358.6 L18.4,353.1 L22.4,358.6 Z" stroke="none" stroke-width="0" fill="#ff3300" />
<path d="M14.4,380.8 L18.4,386.3 L22.4,380.8 Z" stroke="none" stroke-width="0" fill="#ff3300" />
<path d="M23.7,437.75 H29 L33.4,442.55 L36.5,439.55 V416.35 L39.4,412.45 L44.3,417.95 H50.5 V437.75 H56.7" stroke="#000" stroke-width="1.5" fill="none" />
<line x1="29.50" y1="443.75" x2="37.30" y2="443.75" stroke="#ff3300" stroke-width="1.6" />
<line x1="18.40" y1="445.75" x2="18.40" y2="451.25" stroke="#ff3300" stroke-width="1.6" />
<path d="M14.4,449.25 L18.4,443.75 L22.4,449.25 Z" stroke="none" stroke-width="0" fill="#ff3300" />
<line x1="14.40" y1="451.25" x2="22.40" y2="451.25" stroke="#ff3300" stroke-width="1.6" />
<path d="M23.7,496.20000000000005 H29 L33.4,501.00000000000006 L36.5,498.00000000000006 V474.80000000000007 L39.4,470.90000000000003 L44.3,476.40000000000003 H50.5 V496.20000000000005 H56.7" stroke="#000" stroke-width="1.5" fill="none" />
<line x1="36.00" y1="470.40" x2="43.00" y2="470.40" stroke="#ff3300" stroke-width="1.6" />
<line x1="18.40" y1="472.70" x2="18.40" y2="507.80" stroke="#ff3300" stroke-width="1.6" />
<path d="M14.4,476.20000000000005 L18.4,470.70000000000005 L22.4,476.20000000000005 Z" stroke="none" stroke-width="0" fill="#ff3300" />
<line x1="14.40" y1="507.80" x2="22.40" y2="507.80" stroke="#ff3300" stroke-width="1.6" />
<path d="M23.7,554.6500000000001 H29 L33.4,559.45 L36.5,556.45 V533.2500000000001 L39.4,529.3500000000001 L44.3,534.8500000000001 H50.5 V554.6500000000001 H56.7" stroke="#000" stroke-width="1.5" fill="none" />
<line x1="26.20" y1="544.15" x2="56.30" y2="544.15" stroke="#ff3300" stroke-width="1.5" stroke-dasharray="3 1.5"/>
<line x1="18.40" y1="545.95" x2="18.40" y2="566.85" stroke="#ff3300" stroke-width="1.6" />
<path d="M14.4,549.45 L18.4,543.95 L22.4,549.45 Z" stroke="none" stroke-width="0" fill="#ff3300" />
<line x1="14.40" y1="566.85" x2="22.40" y2="566.85" stroke="#ff3300" stroke-width="1.6" />
<rect x="5.80" y="584.70" width="59.70" height="57.60" fill="#000" />
<rect x="5.80" y="584.70" width="57.70" height="55.80" fill="#fff" />
<rect x="7.50" y="586.40" width="56.00" height="54.10" fill="#b2b2b2" />
<rect x="5.80" y="643.40" width="59.70" height="58.20" fill="#000" />
<rect x="5.80" y="643.40" width="57.70" height="56.40" fill="#fff" />
<rect x="7.50" y="645.10" width="56.00" height="54.70" fill="#b2b2b2" />
<text x="35.30" y="607.70" font-family="'Liberation Sans',sans-serif" font-size="16" fill="#000" text-anchor="middle" font-weight="normal" textLength="35.0" lengthAdjust="spacingAndGlyphs" >More</text>
<text x="35.30" y="627.70" font-family="'Liberation Sans',sans-serif" font-size="16" fill="#000" text-anchor="middle" font-weight="normal" textLength="42.0" lengthAdjust="spacingAndGlyphs" >(1of 2)</text>
<text x="35.30" y="666.90" font-family="'Liberation Sans',sans-serif" font-size="16" fill="#000" text-anchor="middle" font-weight="normal" textLength="35.0" lengthAdjust="spacingAndGlyphs" >Clear</text>
<text x="35.30" y="686.00" font-family="'Liberation Sans',sans-serif" font-size="16" fill="#000" text-anchor="middle" font-weight="normal" textLength="17.0" lengthAdjust="spacingAndGlyphs" >All</text>
<rect x="84.10" y="677.90" width="16.30" height="19.10" fill="#fff" />
<rect x="84.10" y="677.90" width="14.80" height="17.60" fill="#808080" />
<rect x="85.60" y="679.40" width="13.30" height="16.10" fill="#b2b2b2" />
<line x1="92.10" y1="682.40" x2="92.10" y2="694.00" stroke="#000" stroke-width="1.8" />
<path d="M87.89999999999999,685.1999999999999 L92.1,680.4 L96.3,685.1999999999999 Z" stroke="none" stroke-width="0" fill="#000" />
<rect x="906.30" y="677.50" width="16.20" height="18.80" fill="#fff" />
<rect x="906.30" y="677.50" width="14.70" height="17.30" fill="#808080" />
<rect x="907.80" y="679.00" width="13.20" height="15.80" fill="#b2b2b2" />
<line x1="914.30" y1="682.00" x2="914.30" y2="693.30" stroke="#000" stroke-width="1.8" />
<path d="M910.0999999999999,684.8 L914.3,680 L918.5,684.8 Z" stroke="none" stroke-width="0" fill="#000" />
<rect x="159.00" y="678.70" width="27.00" height="30.60" fill="#000" />
<rect x="159.00" y="678.70" width="24.80" height="28.40" fill="#fff" />
<rect x="160.60" y="680.30" width="23.20" height="26.80" fill="#b2b2b2" />
<path d="M168.93,685.7 L176.07,685.7 L181.0,690.63 L181.0,697.7700000000001 L176.07,702.7 L168.93,702.7 L164.0,697.7700000000001 L164.0,690.63 Z" stroke="#000" stroke-width="1.3" fill="#00a8a8" />
<rect x="186.00" y="678.70" width="27.00" height="30.30" fill="#fff" />
<rect x="186.00" y="678.70" width="25.20" height="28.50" fill="#000" />
<rect x="187.80" y="680.50" width="23.40" height="26.70" fill="#b2b2b2" />
<path d="M197.43,687.1 L204.57,687.1 L209.5,692.03 L209.5,699.1700000000001 L204.57,704.1 L197.43,704.1 L192.5,699.1700000000001 L192.5,692.03 Z" stroke="#000" stroke-width="1.3" fill="#ff0000" />
<rect x="212.60" y="678.70" width="26.80" height="30.60" fill="#000" />
<rect x="212.60" y="678.70" width="24.60" height="28.40" fill="#fff" />
<rect x="214.20" y="680.30" width="23.00" height="26.80" fill="#b2b2b2" />
<rect x="216.6" y="685.4" width="18.4" height="15.8" rx="1.5" fill="#fff" stroke="#000" stroke-width="1.6"/>
<path d="M234,691.5 L234,700.3 L225,700.3 Z" stroke="none" stroke-width="0" fill="#808080" />
<line x1="234.20" y1="691.20" x2="224.80" y2="700.50" stroke="#000" stroke-width="1.5" />
<path d="M219.3,691 q0.5,-3.3 4,-3.3 q3.2,0 4.6,3" stroke="#000" stroke-width="1.5" fill="none" />
<path d="M225.2,692.2 L230.3,693.8 L230,688.3 Z" stroke="none" stroke-width="0" fill="#000" />
<rect x="239.40" y="678.70" width="27.80" height="30.60" fill="#000" />
<rect x="239.40" y="678.70" width="25.60" height="28.40" fill="#fff" />
<rect x="241.00" y="680.30" width="24.00" height="26.80" fill="#b2b2b2" />
<path d="M246.3,692.3 L248.8,684 L259.4,684 L257,692.3 Z" stroke="#000" stroke-width="1.4" fill="#fff" />
<line x1="250.50" y1="687.00" x2="256.50" y2="687.00" stroke="#000" stroke-width="1.2" />
<line x1="249.70" y1="689.80" x2="255.70" y2="689.80" stroke="#000" stroke-width="1.2" />
<path d="M257.4,694 L262.3,690.5 V700 L257.4,704 Z" stroke="#000" stroke-width="1.0" fill="#d0d0d0" stroke-dasharray="1.5 1"/>
<rect x="242.2" y="693.5" width="15.3" height="10.6" rx="1.5" fill="#b8b8b8" stroke="#000" stroke-width="1.5"/>
<rect x="242.20" y="696.40" width="15.30" height="1.40" fill="#000" />
<rect x="242.20" y="701.00" width="15.30" height="1.20" fill="#000" />
<rect x="243.50" y="702.20" width="13.00" height="1.10" fill="#fff" />
<rect x="250.30" y="698.60" width="3.50" height="1.60" fill="#f0e000" />
<rect x="310.50" y="679.20" width="26.50" height="29.60" fill="#000" />
<rect x="310.50" y="679.20" width="25.10" height="28.20" fill="#fff" />
<rect x="312.00" y="680.70" width="23.60" height="26.70" fill="#909090" />
<rect x="312.00" y="680.70" width="21.70" height="24.80" fill="#d8d8d8" />
<rect x="313.70" y="682.40" width="20.00" height="23.10" fill="#f5fbf5" />
<text x="323.20" y="701.60" font-family="'Liberation Sans',sans-serif" font-size="21" fill="#000" text-anchor="middle" font-weight="normal" textLength="14.6" lengthAdjust="spacingAndGlyphs" stroke="#000" stroke-width="0.8">H</text>
<rect x="342.70" y="678.40" width="97.30" height="32.60" fill="#fff" />
<rect x="342.70" y="678.40" width="95.80" height="31.10" fill="#000" />
<rect x="342.70" y="678.40" width="95.80" height="1.50" fill="#808080" />
<rect x="342.70" y="678.40" width="1.50" height="31.10" fill="#808080" />
<rect x="345.70" y="681.40" width="92.80" height="28.10" fill="#f5fbf5" />
<text x="347.80" y="698.40" font-family="'Liberation Sans',sans-serif" font-size="18" fill="#000" text-anchor="start" font-weight="normal" textLength="79.5" lengthAdjust="spacingAndGlyphs" >500 ms/div</text>
<rect x="442.20" y="678.70" width="21.10" height="31.80" fill="#000" />
<rect x="442.20" y="678.70" width="18.90" height="29.60" fill="#fff" />
<rect x="443.80" y="680.30" width="17.30" height="28.00" fill="#b2b2b2" />
<path d="M448.8,693 q1.5,-9.5 3,0 q1.5,9.5 3,0" stroke="#000" stroke-width="1.6" fill="none" />
<rect x="463.30" y="678.70" width="23.10" height="31.80" fill="#000" />
<rect x="463.30" y="678.70" width="20.90" height="29.60" fill="#fff" />
<rect x="464.90" y="680.30" width="19.30" height="28.00" fill="#b2b2b2" />
<path d="M468,693 q3.7,-9.5 7.4,0 q3.7,9.5 7.4,0" stroke="#000" stroke-width="1.6" fill="none" />
<rect x="493.90" y="678.20" width="16.40" height="18.80" fill="#fff" />
<rect x="493.90" y="678.20" width="14.90" height="17.30" fill="#808080" />
<rect x="495.00" y="679.30" width="13.80" height="16.20" fill="#ffb400" />
<line x1="502.00" y1="682.80" x2="502.00" y2="694.00" stroke="#000" stroke-width="1.8" />
<path d="M497.8,685.5999999999999 L502,680.8 L506.2,685.5999999999999 Z" stroke="none" stroke-width="0" fill="#000" />
<rect x="518.00" y="678.40" width="124.00" height="32.60" fill="#fff" />
<rect x="518.00" y="678.40" width="122.50" height="31.10" fill="#000" />
<rect x="518.00" y="678.40" width="122.50" height="1.50" fill="#808080" />
<rect x="518.00" y="678.40" width="1.50" height="31.10" fill="#808080" />
<rect x="521.00" y="681.40" width="119.50" height="28.10" fill="#f5fbf5" />
<text x="523.30" y="698.40" font-family="'Liberation Sans',sans-serif" font-size="18" fill="#000" text-anchor="start" font-weight="normal" textLength="33.0" lengthAdjust="spacingAndGlyphs" >0.0 s</text>
<rect x="644.60" y="678.40" width="21.90" height="31.90" fill="#000" />
<rect x="644.60" y="678.40" width="19.70" height="29.70" fill="#fff" />
<rect x="646.10" y="679.90" width="18.20" height="28.20" fill="#b2b2b2" />
<rect x="666.50" y="678.40" width="22.20" height="31.90" fill="#000" />
<rect x="666.50" y="678.40" width="20.00" height="29.70" fill="#fff" />
<rect x="668.00" y="679.90" width="18.50" height="28.20" fill="#b2b2b2" />
<rect x="688.70" y="678.40" width="22.60" height="31.90" fill="#000" />
<rect x="688.70" y="678.40" width="20.40" height="29.70" fill="#fff" />
<rect x="690.20" y="679.90" width="18.90" height="28.20" fill="#b2b2b2" />
<path d="M659.6,687 L650.8,693.3 L659.6,699.6 Z" stroke="none" stroke-width="0" fill="#000" />
<path d="M695.6,687 L704.4,693.3 L695.6,699.6 Z" stroke="none" stroke-width="0" fill="#000" />
<text x="677.40" y="699.80" font-family="'Liberation Sans',sans-serif" font-size="18" fill="#000" text-anchor="middle" font-weight="bold" textLength="7.3" lengthAdjust="spacingAndGlyphs" >0</text>
<rect x="732.60" y="679.20" width="26.70" height="29.60" fill="#000" />
<rect x="732.60" y="679.20" width="25.30" height="28.20" fill="#fff" />
<rect x="734.10" y="680.70" width="23.80" height="26.70" fill="#909090" />
<rect x="734.10" y="680.70" width="21.90" height="24.80" fill="#d8d8d8" />
<rect x="735.80" y="682.40" width="20.20" height="23.10" fill="#f5fbf5" />
<text x="746.30" y="701.40" font-family="'Liberation Sans',sans-serif" font-size="21" fill="#00ff00" text-anchor="middle" font-weight="normal" textLength="14.6" lengthAdjust="spacingAndGlyphs" stroke="#00ff00" stroke-width="0.8">T</text>
<rect x="764.30" y="678.40" width="103.20" height="32.60" fill="#fff" />
<rect x="764.30" y="678.40" width="101.70" height="31.10" fill="#000" />
<rect x="764.30" y="678.40" width="101.70" height="1.50" fill="#808080" />
<rect x="764.30" y="678.40" width="1.50" height="31.10" fill="#808080" />
<rect x="767.30" y="681.40" width="98.70" height="28.10" fill="#f5fbf5" />
<text x="769.80" y="698.30" font-family="'Liberation Sans',sans-serif" font-size="18" fill="#00ff00" text-anchor="start" font-weight="normal" textLength="45.6" lengthAdjust="spacingAndGlyphs" >2.60 V</text>
<rect x="869.60" y="678.50" width="29.90" height="15.80" fill="#000" />
<rect x="869.60" y="678.50" width="27.70" height="13.60" fill="#fff" />
<rect x="871.10" y="680.00" width="26.20" height="12.10" fill="#b2b2b2" />
<rect x="869.60" y="694.30" width="29.90" height="16.00" fill="#000" />
<rect x="869.60" y="694.30" width="27.70" height="13.80" fill="#fff" />
<rect x="871.10" y="695.80" width="26.20" height="12.30" fill="#b2b2b2" />
<path d="M878,689.5 L884.3,682.5 L890.6,689.5 Z" stroke="none" stroke-width="0" fill="#000" />
<path d="M878,698.5 L884.3,705.5 L890.6,698.5 Z" stroke="none" stroke-width="0" fill="#000" /></svg></body></html>
